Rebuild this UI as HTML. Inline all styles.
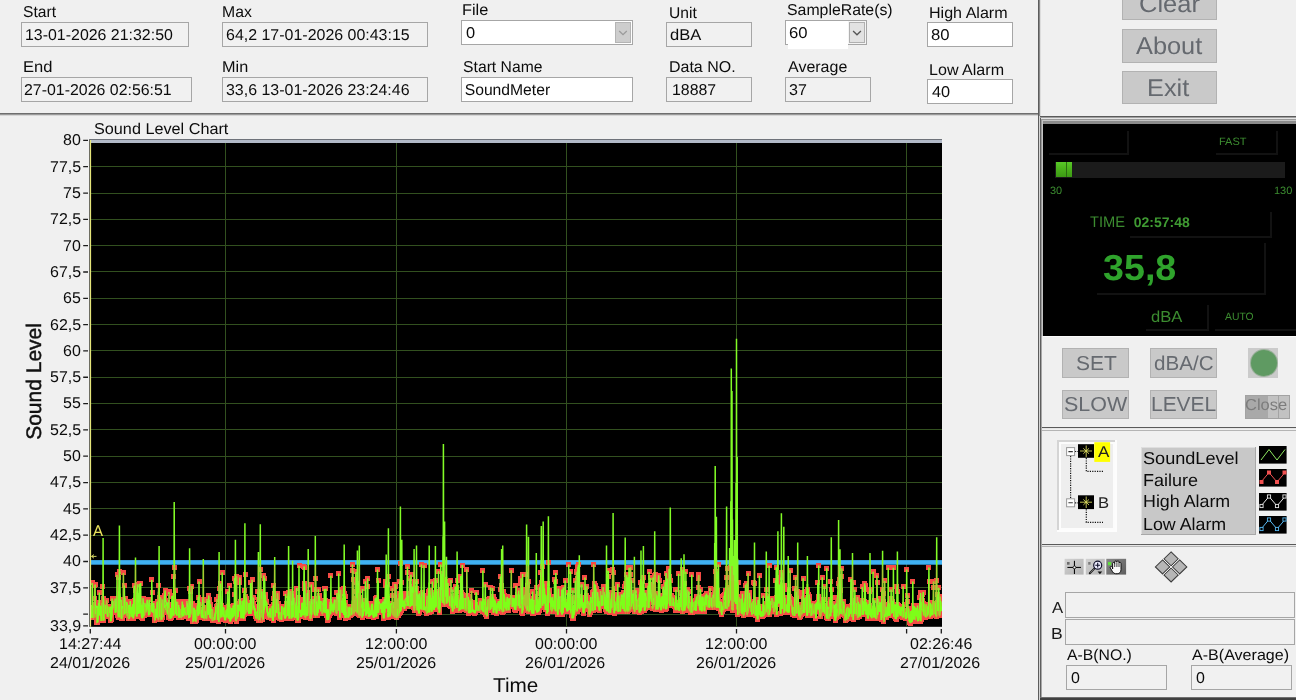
<!DOCTYPE html>
<html lang="en"><head><meta charset="utf-8"><title>SoundMeter</title>
<style>
html,body{margin:0;padding:0;background:#f0f0f0;}
body{width:1296px;height:700px;overflow:hidden;position:relative;font-family:"Liberation Sans", Arial, sans-serif;}
#app{position:absolute;left:0;top:0;width:1296px;height:700px;overflow:hidden;background:#f0f0f0;will-change:transform;}
.a{position:absolute;box-sizing:content-box;}
.t{position:absolute;white-space:pre;line-height:40px;transform-origin:0 0;font-family:"Liberation Sans", Arial, sans-serif;text-rendering:geometricPrecision;}
svg{display:block;overflow:hidden;}
</style></head><body><div id="app">
<span class="t" style="left:23.00px;top:-7px;font-size:15.7px;color:#0c0c0c;transform:scaleX(0.9956);">Start</span>
<div class="a fld" style="left:21px;top:22px;width:166px;height:23px;background:#f1f1f1;border:1px solid #a6a6a6;"></div>
<span class="t" style="left:25.20px;top:16px;font-size:15.7px;color:#0c0c0c;transform:scaleX(1.0149);">13-01-2026 21:32:50</span>
<span class="t" style="left:23.17px;top:48px;font-size:15.7px;color:#0c0c0c;transform:scaleX(1.0557);">End</span>
<div class="a fld" style="left:21px;top:77px;width:169px;height:23px;background:#f1f1f1;border:1px solid #a6a6a6;"></div>
<span class="t" style="left:24.30px;top:71px;font-size:15.7px;color:#0c0c0c;transform:scaleX(1.0140);">27-01-2026 02:56:51</span>
<span class="t" style="left:222.34px;top:-7px;font-size:15.7px;color:#0c0c0c;transform:scaleX(1.0050);">Max</span>
<div class="a fld" style="left:222px;top:22px;width:204px;height:23px;background:#f1f1f1;border:1px solid #a6a6a6;"></div>
<span class="t" style="left:225.60px;top:16px;font-size:15.7px;color:#0c0c0c;transform:scaleX(1.0173);">64,2 17-01-2026 00:43:15</span>
<span class="t" style="left:222.30px;top:48px;font-size:15.7px;color:#0c0c0c;transform:scaleX(1.0348);">Min</span>
<div class="a fld" style="left:222px;top:77px;width:204px;height:23px;background:#f1f1f1;border:1px solid #a6a6a6;"></div>
<span class="t" style="left:225.76px;top:71px;font-size:15.7px;color:#0c0c0c;transform:scaleX(1.0164);">33,6 13-01-2026 23:24:46</span>
<span class="t" style="left:461.59px;top:-9px;font-size:15.7px;color:#0c0c0c;transform:scaleX(1.0423);">File</span>
<div class="a fld" style="left:461px;top:20px;width:170px;height:23px;background:#fff;border:1px solid #a6a6a6;"></div>
<div class="a " style="left:615px;top:22px;width:14px;height:19px;background:#cdcdcd;border:1px solid #b4b4b4;"></div>
<svg class="a" style="left:615px;top:22px" width="16" height="21"><path d="M4.2 9 L8 12.6 L11.8 9" fill="none" stroke="#9a9a9a" stroke-width="1.3"/></svg>
<span class="t" style="left:465.64px;top:14px;font-size:15.7px;color:#0c0c0c;transform:scaleX(1.0483);">0</span>
<span class="t" style="left:463.10px;top:48px;font-size:15.7px;color:#0c0c0c;">Start Name</span>
<div class="a fld" style="left:461px;top:77px;width:170px;height:23px;background:#fff;border:1px solid #a6a6a6;"></div>
<span class="t" style="left:464.69px;top:71px;font-size:15.7px;color:#0c0c0c;">SoundMeter</span>
<span class="t" style="left:668.53px;top:-6px;font-size:15.7px;color:#0c0c0c;transform:scaleX(0.9958);">Unit</span>
<div class="a fld" style="left:666px;top:22px;width:84px;height:23px;background:#f1f1f1;border:1px solid #a6a6a6;"></div>
<span class="t" style="left:669.54px;top:16px;font-size:15.7px;color:#0c0c0c;transform:scaleX(1.0535);">dBA</span>
<span class="t" style="left:669.32px;top:48px;font-size:15.7px;color:#0c0c0c;transform:scaleX(1.0188);">Data NO.</span>
<div class="a fld" style="left:666px;top:77px;width:84px;height:23px;background:#f1f1f1;border:1px solid #a6a6a6;"></div>
<span class="t" style="left:671.81px;top:71px;font-size:15.7px;color:#0c0c0c;transform:scaleX(1.0124);">18887</span>
<span class="t" style="left:786.89px;top:-9px;font-size:15.7px;color:#0c0c0c;transform:scaleX(1.0098);">SampleRate(s)</span>
<div class="a " style="left:785px;top:20px;width:80px;height:23px;background:#f4f4f4;border:1px solid #a6a6a6;"></div>
<div class="a " style="left:786px;top:21px;width:62px;height:23px;background:#fff;"></div>
<div class="a " style="left:788px;top:40px;width:60px;height:8.5px;background:#fff;"></div>
<div class="a " style="left:849px;top:22px;width:14px;height:19px;background:#e2e2e2;border:1px solid #b0b0b0;"></div>
<svg class="a" style="left:849px;top:22px" width="16" height="21"><path d="M4.1 9 L8 12.8 L11.9 9" fill="none" stroke="#555" stroke-width="1.3"/></svg>
<span class="t" style="left:789.27px;top:14px;font-size:15.7px;color:#0c0c0c;transform:scaleX(1.0626);">60</span>
<span class="t" style="left:788.10px;top:48px;font-size:15.7px;color:#0c0c0c;transform:scaleX(1.0198);">Average</span>
<div class="a fld" style="left:785px;top:77px;width:84px;height:23px;background:#f1f1f1;border:1px solid #a6a6a6;"></div>
<span class="t" style="left:789.46px;top:71px;font-size:15.7px;color:#0c0c0c;transform:scaleX(1.0241);">37</span>
<span class="t" style="left:929.31px;top:-6px;font-size:15.7px;color:#0c0c0c;transform:scaleX(1.0245);">High Alarm</span>
<div class="a fld" style="left:927px;top:22px;width:84px;height:23px;background:#fff;border:1px solid #a6a6a6;"></div>
<span class="t" style="left:931.45px;top:16px;font-size:15.7px;color:#0c0c0c;transform:scaleX(1.0636);">80</span>
<span class="t" style="left:928.71px;top:51px;font-size:15.7px;color:#0c0c0c;transform:scaleX(1.0247);">Low Alarm</span>
<div class="a fld" style="left:927px;top:79px;width:84px;height:23px;background:#fff;border:1px solid #a6a6a6;"></div>
<span class="t" style="left:931.87px;top:73px;font-size:15.7px;color:#0c0c0c;transform:scaleX(1.0384);">40</span>
<div class="a" style="left:0px;top:113px;width:1039px;height:1px;background:#6e6e6e"></div>
<div class="a" style="left:0px;top:114px;width:1039px;height:1px;background:#9a9a9a"></div>
<div class="a" style="left:0px;top:115px;width:1039px;height:1px;background:#d6d6d6"></div>
<div class="a" style="left:1038px;top:0px;width:1px;height:700px;background:#5c5c5c"></div>
<div class="a" style="left:1039px;top:0px;width:1px;height:116px;background:#8a8a8a"></div>
<div class="a" style="left:1039px;top:116px;width:1px;height:584px;background:#d4d4d4"></div>
<div class="a" style="left:1040px;top:116px;width:1px;height:584px;background:#5e5e5e"></div>
<div class="a" style="left:1041px;top:116px;width:1px;height:584px;background:#a8a8a8"></div>
<div class="a" style="left:1040px;top:0px;width:1px;height:116px;background:#dcdcdc"></div>
<div class="a btn" style="left:1122px;top:-14px;width:93px;height:32px;background:#c9c9c9;border:1px solid #b2b2b2;"></div>
<span class="t" style="left:1138.63px;top:-15px;font-size:24.3px;color:#65696f;transform:scaleX(1.0483);">Clear</span>
<div class="a btn" style="left:1122px;top:29px;width:93px;height:32px;background:#c9c9c9;border:1px solid #b2b2b2;"></div>
<span class="t" style="left:1136.00px;top:27px;font-size:24.3px;color:#65696f;transform:scaleX(1.0426);">About</span>
<div class="a btn" style="left:1122px;top:71px;width:93px;height:31px;background:#c9c9c9;border:1px solid #b2b2b2;"></div>
<span class="t" style="left:1146.97px;top:69px;font-size:24.3px;color:#65696f;transform:scaleX(1.0418);">Exit</span>
<div class="a" style="left:1040px;top:116px;width:256px;height:1px;background:#5a5a5a"></div>
<div class="a" style="left:1040px;top:117px;width:256px;height:1px;background:#a0a0a0"></div>
<div class="a" style="left:1041px;top:118px;width:255px;height:1px;background:#e4e4e4"></div>
<div class="a " style="left:1041px;top:119px;width:255px;height:217px;background:#9a9a9a;"></div>
<div class="a " style="left:1042px;top:120px;width:254px;height:216px;background:#c4c4c4;"></div>
<div class="a " style="left:1043px;top:121px;width:253px;height:3px;background:#8c8c8c;"></div>
<div class="a " style="left:1043px;top:123.6px;width:253px;height:212.2px;background:#000;"></div>
<div class="a " style="left:1043px;top:335.8px;width:253px;height:1.2px;background:#fbfbfb;"></div>
<span class="t" style="left:1219.32px;top:122px;font-size:10.6px;color:#3c8c30;transform:scaleX(1.0377);">FAST</span>
<div class="a " style="left:1055px;top:161.5px;width:230px;height:16px;background:#1b1b1b;"></div>
<div class="a" style="left:1055.5px;top:162px;width:16px;height:15px;background:linear-gradient(#58c828,#4cb41c 40%,#3c9a14)"></div>
<div class="a " style="left:1065.6px;top:162px;width:1.2px;height:15px;background:#2a6a10;"></div>
<span class="t" style="left:1049.96px;top:171px;font-size:10.6px;color:#3c8c30;transform:scaleX(1.0300);">30</span>
<span class="t" style="left:1273.88px;top:171px;font-size:10.6px;color:#3c8c30;transform:scaleX(1.0374);">130</span>
<span class="t" style="left:1089.51px;top:203px;font-size:15.4px;color:#3c8c30;transform:scaleX(0.9524);">TIME</span>
<span class="t" style="left:1133.74px;top:202px;font-size:14px;color:#3f9a32;font-weight:bold;">02:57:48</span>
<span class="t" style="left:1103.26px;top:248px;font-size:36.2px;color:#2fa32c;font-weight:bold;transform:scaleX(1.0407);">35,8</span>
<span class="t" style="left:1150.64px;top:298px;font-size:15.9px;color:#3c8c30;transform:scaleX(1.0437);">dBA</span>
<span class="t" style="left:1225.20px;top:297px;font-size:10.6px;color:#3c8c30;transform:scaleX(0.9782);">AUTO</span>
<div class="a " style="left:1049px;top:153px;width:78px;height:1.5px;background:#121212;"></div>
<div class="a " style="left:1127px;top:131px;width:1.5px;height:23.5px;background:#121212;"></div>
<div class="a " style="left:1216px;top:153px;width:60px;height:1.5px;background:#121212;"></div>
<div class="a " style="left:1276px;top:131px;width:1.5px;height:23.5px;background:#121212;"></div>
<div class="a " style="left:1130px;top:236px;width:140px;height:1.5px;background:#121212;"></div>
<div class="a " style="left:1270px;top:212px;width:1.5px;height:25.5px;background:#121212;"></div>
<div class="a " style="left:1097px;top:293px;width:167px;height:1.5px;background:#121212;"></div>
<div class="a " style="left:1264px;top:243px;width:1.5px;height:51.5px;background:#121212;"></div>
<div class="a " style="left:1146px;top:329px;width:61px;height:1.5px;background:#121212;"></div>
<div class="a " style="left:1207px;top:305px;width:1.5px;height:25.5px;background:#121212;"></div>
<div class="a " style="left:1215px;top:329px;width:81px;height:1.5px;background:#121212;"></div>
<div class="a " style="left:1296px;top:305px;width:1.5px;height:25.5px;background:#121212;"></div>
<div class="a btn" style="left:1062px;top:348px;width:65px;height:28px;background:#c9c9c9;border:1px solid #b2b2b2;"></div>
<span class="t" style="left:1075.75px;top:344px;font-size:20.2px;color:#666a70;transform:scaleX(1.0401);">SET</span>
<div class="a btn" style="left:1150px;top:348px;width:65px;height:28px;background:#c9c9c9;border:1px solid #b2b2b2;"></div>
<span class="t" style="left:1153.57px;top:344px;font-size:20.2px;color:#666a70;transform:scaleX(1.0218);">dBA/C</span>
<div class="a btn" style="left:1062px;top:390px;width:65px;height:27px;background:#c9c9c9;border:1px solid #b2b2b2;"></div>
<span class="t" style="left:1063.73px;top:385px;font-size:20.2px;color:#666a70;transform:scaleX(1.0636);">SLOW</span>
<div class="a btn" style="left:1150px;top:390px;width:65px;height:27px;background:#c9c9c9;border:1px solid #b2b2b2;"></div>
<span class="t" style="left:1150.63px;top:385px;font-size:20.2px;color:#666a70;transform:scaleX(1.0363);">LEVEL</span>
<div class="a " style="left:1248px;top:348px;width:30px;height:30px;background:#cbcbcb;"></div>
<div class="a" style="left:1250.5px;top:350px;width:26px;height:26px;border-radius:50%;background:#5f9a62;box-shadow:0 0 0 1px #9ab09a"></div>
<div class="a " style="left:1245.2px;top:394.6px;width:44.4px;height:24.8px;background:#c2c2c2;"></div>
<div class="a " style="left:1245.2px;top:394.6px;width:22.6px;height:24.8px;background:#a9a9a9;"></div>
<div class="a " style="left:1277.6px;top:394.6px;width:1px;height:24.8px;background:#a4a4a4;"></div>
<div class="a " style="left:1245.2px;top:394.6px;width:42.4px;height:22.8px;border:1px solid #a2a2a2;"></div>
<span class="t" style="left:1245.37px;top:386px;font-size:15.9px;color:#7c7c7c;transform:scaleX(1.0380);">Close</span>
<div class="a" style="left:1042px;top:427px;width:254px;height:1px;background:#5a5a5a"></div>
<div class="a" style="left:1042px;top:428px;width:254px;height:1px;background:#e6e6e6"></div>
<div class="a" style="left:1042px;top:430px;width:254px;height:1px;background:#b4b4b4"></div>
<div class="a " style="left:1056.5px;top:439.5px;width:60.5px;height:92px;background:#fdfdfd;"></div>
<div class="a " style="left:1056.5px;top:439.5px;width:58.5px;height:90px;background:#d4d4d4;"></div>
<div class="a " style="left:1058.5px;top:441.5px;width:56.5px;height:88px;background:#fcfcfc;"></div>
<div class="a " style="left:1060.5px;top:443.5px;width:52.5px;height:84px;background:#eeeeee;"></div>
<svg class="a" style="left:1056px;top:438px" width="64" height="96" viewBox="1056 438 64 96">
<g fill="none" stroke="#111" stroke-width="1.2" stroke-dasharray="1.2 1.2">
<path d="M1070.6 456 V498.5"/><path d="M1075 451.5 H1078"/><path d="M1075 502.8 H1078"/>
<path d="M1086.3 458 V471.3 H1103"/><path d="M1086.3 509.3 V522.4 H1103"/>
</g>
<rect x="1094.3" y="442.2" width="15.8" height="19.7" fill="#ffff00"/>
<g>
<rect x="1078" y="444.2" width="16" height="13.6" fill="#000"/>
<rect x="1078" y="495.3" width="16" height="13.8" fill="#000"/>
<g stroke="#e0e060" stroke-width="0.85" fill="none">
<path d="M1080 451 H1092 M1086.2 445.5 V457 M1083.3 448.3 L1089 453.8 M1089 448.3 L1083.3 453.8"/>
<path d="M1080 502.2 H1092 M1086.2 496.5 V508 M1083.3 499.4 L1089 505 M1089 499.4 L1083.3 505"/>
</g>
<rect x="1066.6" y="447.6" width="8" height="8" fill="#fff" stroke="#9a9a9a" stroke-width="1"/>
<rect x="1066.6" y="498.8" width="8" height="8" fill="#fff" stroke="#9a9a9a" stroke-width="1"/>
<path d="M1068.4 451.6 H1072.8 M1068.4 502.8 H1072.8" stroke="#333" stroke-width="1.1"/>
</g></svg>
<span class="t" style="left:1098.10px;top:433px;font-size:15.5px;color:#222;transform:scaleX(1.0963);">A</span>
<span class="t" style="left:1097.77px;top:484px;font-size:15.5px;color:#222;transform:scaleX(1.0733);">B</span>
<div class="a " style="left:1141px;top:447px;width:115px;height:87.5px;background:#c8c8c8;"></div>
<div class="a " style="left:1141px;top:447px;width:115px;height:1px;background:#dedede;"></div>
<div class="a " style="left:1141px;top:447px;width:1px;height:87.5px;background:#dedede;"></div>
<div class="a " style="left:1141px;top:533.5px;width:115px;height:1px;background:#a8a8a8;"></div>
<div class="a " style="left:1255px;top:447px;width:1px;height:87.5px;background:#a8a8a8;"></div>
<span class="t" style="left:1143.18px;top:438px;font-size:17.3px;color:#0c0c0c;transform:scaleX(1.0476);">SoundLevel</span>
<span class="t" style="left:1143.16px;top:460px;font-size:17.3px;color:#0c0c0c;transform:scaleX(1.0416);">Failure</span>
<span class="t" style="left:1143.17px;top:481px;font-size:17.3px;color:#0c0c0c;transform:scaleX(1.0319);">High Alarm</span>
<span class="t" style="left:1143.17px;top:504px;font-size:17.3px;color:#0c0c0c;transform:scaleX(1.0309);">Low Alarm</span>
<svg class="a" style="left:1258.5px;top:446.2px" width="28" height="18" viewBox="0 0 28 18"><rect width="27.6" height="17.6" fill="#000"/><path d="M2 14 L10 3.5 L18 14 L26 3.5" fill="none" stroke="#8fe860" stroke-width="1"/></svg>
<svg class="a" style="left:1258.5px;top:469.4px" width="28" height="18" viewBox="0 0 28 18"><rect width="27.6" height="17.6" fill="#000"/><path d="M2.5 12.5 L10 3.5 L18 13 L26 3.5" fill="none" stroke="#f05050" stroke-width="1"/><rect x="0.5" y="11" width="4" height="4" fill="#f05050"/><rect x="8" y="1.5" width="4" height="4" fill="#f05050"/><rect x="16" y="11" width="4" height="4" fill="#f05050"/><rect x="23.5" y="1.5" width="4" height="4" fill="#f05050"/></svg>
<svg class="a" style="left:1258.5px;top:492.5px" width="28" height="18" viewBox="0 0 28 18"><rect width="27.6" height="17.6" fill="#000"/><path d="M2.5 12.5 L10 3.5 L18 13 L26 3.5" fill="none" stroke="#e8e8e8" stroke-width="1"/><rect x="0.8999999999999999" y="11.4" width="3.2" height="3.2" fill="#000" stroke="#e8e8e8" stroke-width="0.9"/><rect x="8.4" y="1.9" width="3.2" height="3.2" fill="#000" stroke="#e8e8e8" stroke-width="0.9"/><rect x="16.4" y="11.4" width="3.2" height="3.2" fill="#000" stroke="#e8e8e8" stroke-width="0.9"/><rect x="23.9" y="1.9" width="3.2" height="3.2" fill="#000" stroke="#e8e8e8" stroke-width="0.9"/></svg>
<svg class="a" style="left:1258.5px;top:515.5px" width="28" height="18" viewBox="0 0 28 18"><rect width="27.6" height="17.6" fill="#000"/><path d="M2.5 12.5 L10 3.5 L18 13 L26 3.5" fill="none" stroke="#58b8f0" stroke-width="1"/><rect x="0.8999999999999999" y="11.4" width="3.2" height="3.2" fill="#000" stroke="#58b8f0" stroke-width="0.9"/><rect x="8.4" y="1.9" width="3.2" height="3.2" fill="#000" stroke="#58b8f0" stroke-width="0.9"/><rect x="16.4" y="11.4" width="3.2" height="3.2" fill="#000" stroke="#58b8f0" stroke-width="0.9"/><rect x="23.9" y="1.9" width="3.2" height="3.2" fill="#000" stroke="#58b8f0" stroke-width="0.9"/></svg>
<div class="a" style="left:1042px;top:544px;width:254px;height:1px;background:#5a5a5a"></div>
<div class="a" style="left:1042px;top:545px;width:254px;height:1px;background:#e6e6e6"></div>
<div class="a" style="left:1042px;top:546px;width:254px;height:1px;background:#b4b4b4"></div>
<svg class="a" style="left:1050px;top:546px" width="150" height="42" viewBox="1050 546 150 42">
<defs>
<linearGradient id="tb1" x1="0" y1="0" x2="1" y2="1"><stop offset="0" stop-color="#d2d2d2"/><stop offset="1" stop-color="#b2b2b2"/></linearGradient>
<linearGradient id="tb3" x1="0" y1="0" x2="1" y2="1"><stop offset="0" stop-color="#868686"/><stop offset="1" stop-color="#5e5e5e"/></linearGradient>
</defs>
<rect x="1064.6" y="558.8" width="19" height="15.8" fill="url(#tb1)"/>
<rect x="1067.4" y="566.9" width="13.6" height="1.1" fill="#0a0a0a"/>
<rect x="1073.9" y="560.8" width="1.1" height="13.2" fill="#0a0a0a"/>
<circle cx="1074.45" cy="567.45" r="1.4" fill="#f4f4f4" stroke="#0a0a0a" stroke-width="0.8"/>
<rect x="1067" y="562" width="2.6" height="2.7" fill="#6c6c6c"/>
<rect x="1085.8" y="558.8" width="19" height="15.8" fill="url(#tb1)"/>
<rect x="1088.2" y="562" width="2.4" height="2.7" fill="#7c7c7c"/>
<path d="M1094.6 568.4 L1089.8 573.2" stroke="#1a1a1a" stroke-width="2" stroke-linecap="round"/>
<path d="M1094.2 568.9 L1090.4 572.7" stroke="#b8b8b8" stroke-width="0.6"/>
<circle cx="1097.7" cy="565.2" r="4" fill="#eeeeff" stroke="#10102a" stroke-width="1.2"/>
<path d="M1095.3 565.2 H1100.1 M1097.7 562.8 V567.6" stroke="#10102a" stroke-width="1.1"/>
<path d="M1097.6 571.4 H1102.2 L1099.9 574.2 Z" fill="#0a0a0a"/>
<rect x="1106.3" y="558.8" width="19.8" height="15.8" fill="url(#tb3)"/>
<path d="M1112.6 569 V563.6 Q1112.7 562.4 1113.7 562.4 Q1114.6 562.4 1114.7 563.6 V562 Q1114.8 560.9 1115.8 560.9 Q1116.8 560.9 1116.9 562 V561.8 Q1117 560.8 1117.9 560.8 Q1118.9 560.8 1119 561.9 V563.2 Q1119.2 562.3 1120.1 562.4 Q1121 562.5 1121 563.6 V569.4 Q1121 573.6 1117.2 573.7 H1115.6 Q1113.6 573.6 1112.6 571.8 L1110.2 567.8 Q1109.9 566.8 1110.8 566.5 Q1111.6 566.3 1112.6 567.6 Z" fill="#fafafa" stroke="#0a0a0a" stroke-width="0.95" stroke-linejoin="round"/>
<path d="M1114.7 563.6 V567 M1116.9 562.2 V567 M1119 563.4 V567" stroke="#0a0a0a" stroke-width="0.8" fill="none"/>
<rect x="1108" y="562" width="3.2" height="3.3" fill="#5ee03c"/>
<g fill="#b6b6b6" stroke="#3c3c3c" stroke-width="1.05" stroke-linejoin="miter">
<path d="M1171.1 551.9 L1178.3 558.9 L1171.1 565.9 L1163.9 558.9 Z"/>
<path d="M1171.1 567.9 L1178.3 574.9 L1171.1 581.9 L1163.9 574.9 Z"/>
<path d="M1162.6 559.9 L1169.8 566.9 L1162.6 573.9 L1155.4 566.9 Z"/>
<path d="M1179.6 559.9 L1186.8 566.9 L1179.6 573.9 L1172.4 566.9 Z"/>
</g>
<path d="M1163.2 559.2 L1179 574.6 M1179 559.2 L1163.2 574.6" stroke="#fafafa" stroke-width="0.9" fill="none"/>
</svg>
<span class="t" style="left:1052.00px;top:589px;font-size:15.9px;color:#1a1a1a;transform:scaleX(1.0498);">A</span>
<div class="a " style="left:1065px;top:592px;width:228px;height:24px;background:#f1f1f1;border:1px solid #a6a6a6;"></div>
<span class="t" style="left:1051.19px;top:615px;font-size:15.9px;color:#1a1a1a;transform:scaleX(1.1050);">B</span>
<div class="a " style="left:1065px;top:619px;width:228px;height:24px;background:#f1f1f1;border:1px solid #a6a6a6;"></div>
<span class="t" style="left:1067.10px;top:636px;font-size:15.4px;color:#0c0c0c;transform:scaleX(1.0245);">A-B(NO.)</span>
<span class="t" style="left:1192.10px;top:636px;font-size:15.4px;color:#0c0c0c;transform:scaleX(1.0444);">A-B(Average)</span>
<div class="a " style="left:1066px;top:665px;width:99px;height:23px;background:#f1f1f1;border:1px solid #a6a6a6;"></div>
<span class="t" style="left:1070.76px;top:659px;font-size:15.7px;color:#0c0c0c;transform:scaleX(1.0200);">0</span>
<div class="a " style="left:1191px;top:665px;width:99px;height:23px;background:#f1f1f1;border:1px solid #a6a6a6;"></div>
<span class="t" style="left:1195.66px;top:659px;font-size:15.7px;color:#0c0c0c;transform:scaleX(1.0200);">0</span>
<div class="a" style="left:1040px;top:697px;width:256px;height:1px;background:#707070"></div>
<div class="a" style="left:1040px;top:698px;width:256px;height:2px;background:#404040"></div>
<span class="t" style="left:93.97px;top:110px;font-size:15.7px;color:#0c0c0c;transform:scaleX(1.0340);">Sound Level Chart</span>
<svg class="a" style="left:0;top:118px" width="1036" height="582" viewBox="0 118 1036 582">
<rect x="89.5" y="139.3" width="852.5" height="487.49999999999994" fill="#000"/>
<path d="M89.5 166.5H942M89.5 193.5H942M89.5 219.5H942M89.5 245.5H942M89.5 271.5H942M89.5 298.5H942M89.5 324.5H942M89.5 350.5H942M89.5 377.5H942M89.5 403.5H942M89.5 429.5H942M89.5 456.5H942M89.5 482.5H942M89.5 508.5H942M89.5 535.5H942M89.5 561.5H942M89.5 587.5H942M89.5 614.5H942M225.5 139.3V626.8M396.5 139.3V626.8M566.5 139.3V626.8M736.5 139.3V626.8M906.5 139.3V626.8" stroke="#32501f" stroke-width="1" fill="none"/>
<rect x="90.5" y="560.1" width="851.5" height="4.6" fill="#3fb1f2"/>
<clipPath id="pc"><rect x="90.5" y="139.3" width="851.5" height="487.49999999999994"/></clipPath><g clip-path="url(#pc)"><path d="M88 613h5v5h-5zM89 610h5v5h-5zM89 613h5v5h-5zM89 615h5v5h-5zM89 614h5v5h-5zM90 580h5v5h-5zM90 614h5v5h-5zM90 610h5v5h-5zM90 608h5v5h-5zM91 613h5v5h-5zM91 615h5v5h-5zM91 614h5v5h-5zM91 605h5v5h-5zM92 611h5v5h-5zM92 603h5v5h-5zM92 583h5v5h-5zM92 596h5v5h-5zM93 582h5v5h-5zM93 611h5v5h-5zM93 602h5v5h-5zM93 610h5v5h-5zM94 605h5v5h-5zM94 615h5v5h-5zM94 610h5v5h-5zM94 620h5v5h-5zM95 603h5v5h-5zM95 620h5v5h-5zM95 619h5v5h-5zM95 615h5v5h-5zM96 613h5v5h-5zM96 611h5v5h-5zM96 601h5v5h-5zM96 600h5v5h-5zM97 605h5v5h-5zM97 590h5v5h-5zM97 608h5v5h-5zM97 612h5v5h-5zM98 613h5v5h-5zM98 603h5v5h-5zM98 609h5v5h-5zM98 608h5v5h-5zM98 611h5v5h-5zM99 613h5v5h-5zM99 618h5v5h-5zM99 615h5v5h-5zM99 617h5v5h-5zM100 601h5v5h-5zM100 617h5v5h-5zM100 584h5v5h-5zM100 615h5v5h-5zM101 616h5v5h-5zM101 596h5v5h-5zM101 618h5v5h-5zM102 601h5v5h-5zM102 612h5v5h-5zM102 607h5v5h-5zM102 605h5v5h-5zM102 604h5v5h-5zM103 608h5v5h-5zM103 611h5v5h-5zM103 605h5v5h-5zM103 602h5v5h-5zM104 611h5v5h-5zM104 608h5v5h-5zM104 598h5v5h-5zM104 607h5v5h-5zM105 609h5v5h-5zM105 604h5v5h-5zM105 614h5v5h-5zM105 611h5v5h-5zM106 612h5v5h-5zM106 614h5v5h-5zM106 604h5v5h-5zM106 607h5v5h-5zM106 610h5v5h-5zM107 605h5v5h-5zM107 608h5v5h-5zM107 606h5v5h-5zM108 611h5v5h-5zM108 604h5v5h-5zM108 618h5v5h-5zM109 617h5v5h-5zM109 615h5v5h-5zM109 614h5v5h-5zM109 612h5v5h-5zM110 596h5v5h-5zM110 606h5v5h-5zM110 604h5v5h-5zM111 605h5v5h-5zM111 600h5v5h-5zM111 601h5v5h-5zM111 599h5v5h-5zM112 598h5v5h-5zM112 604h5v5h-5zM112 600h5v5h-5zM112 603h5v5h-5zM113 596h5v5h-5zM113 610h5v5h-5zM113 605h5v5h-5zM114 604h5v5h-5zM114 603h5v5h-5zM114 606h5v5h-5zM115 572h5v5h-5zM115 604h5v5h-5zM115 601h5v5h-5zM115 613h5v5h-5zM116 597h5v5h-5zM116 596h5v5h-5zM116 615h5v5h-5zM116 575h5v5h-5zM117 613h5v5h-5zM117 604h5v5h-5zM117 569h5v5h-5zM118 615h5v5h-5zM118 600h5v5h-5zM118 604h5v5h-5zM119 597h5v5h-5zM119 608h5v5h-5zM119 616h5v5h-5zM119 603h5v5h-5zM119 611h5v5h-5zM120 616h5v5h-5zM120 610h5v5h-5zM120 613h5v5h-5zM120 607h5v5h-5zM121 613h5v5h-5zM121 570h5v5h-5zM121 610h5v5h-5zM121 611h5v5h-5zM122 607h5v5h-5zM122 583h5v5h-5zM122 612h5v5h-5zM122 608h5v5h-5zM123 600h5v5h-5zM123 596h5v5h-5zM123 607h5v5h-5zM123 608h5v5h-5zM124 603h5v5h-5zM124 607h5v5h-5zM124 610h5v5h-5zM124 599h5v5h-5zM125 603h5v5h-5zM125 613h5v5h-5zM125 602h5v5h-5zM125 608h5v5h-5zM126 610h5v5h-5zM126 615h5v5h-5zM126 616h5v5h-5zM127 612h5v5h-5zM127 602h5v5h-5zM127 615h5v5h-5zM127 604h5v5h-5zM128 608h5v5h-5zM128 599h5v5h-5zM128 605h5v5h-5zM128 611h5v5h-5zM129 604h5v5h-5zM129 607h5v5h-5zM129 613h5v5h-5zM129 614h5v5h-5zM130 610h5v5h-5zM130 609h5v5h-5zM130 611h5v5h-5zM130 603h5v5h-5zM131 602h5v5h-5zM131 616h5v5h-5zM131 613h5v5h-5zM131 608h5v5h-5zM132 583h5v5h-5zM132 598h5v5h-5zM132 604h5v5h-5zM132 612h5v5h-5zM132 599h5v5h-5zM133 611h5v5h-5zM133 606h5v5h-5zM133 588h5v5h-5zM134 610h5v5h-5zM134 593h5v5h-5zM134 614h5v5h-5zM134 602h5v5h-5zM135 600h5v5h-5zM135 604h5v5h-5zM135 602h5v5h-5zM135 582h5v5h-5zM136 594h5v5h-5zM136 606h5v5h-5zM136 611h5v5h-5zM136 593h5v5h-5zM137 608h5v5h-5zM137 609h5v5h-5zM137 605h5v5h-5zM137 581h5v5h-5zM137 598h5v5h-5zM138 610h5v5h-5zM138 581h5v5h-5zM138 607h5v5h-5zM139 609h5v5h-5zM139 603h5v5h-5zM139 613h5v5h-5zM139 615h5v5h-5zM140 615h5v5h-5zM140 616h5v5h-5zM141 596h5v5h-5zM141 601h5v5h-5zM141 606h5v5h-5zM141 603h5v5h-5zM141 610h5v5h-5zM142 613h5v5h-5zM142 600h5v5h-5zM142 610h5v5h-5zM142 601h5v5h-5zM143 604h5v5h-5zM143 606h5v5h-5zM143 610h5v5h-5zM143 608h5v5h-5zM144 608h5v5h-5zM144 604h5v5h-5zM144 602h5v5h-5zM145 599h5v5h-5zM145 597h5v5h-5zM145 598h5v5h-5zM145 603h5v5h-5zM145 606h5v5h-5zM146 607h5v5h-5zM146 609h5v5h-5zM146 612h5v5h-5zM147 605h5v5h-5zM147 597h5v5h-5zM147 612h5v5h-5zM147 608h5v5h-5zM148 603h5v5h-5zM148 607h5v5h-5zM148 608h5v5h-5zM148 606h5v5h-5zM149 607h5v5h-5zM149 606h5v5h-5zM149 577h5v5h-5zM150 590h5v5h-5zM150 609h5v5h-5zM150 610h5v5h-5zM150 608h5v5h-5zM151 606h5v5h-5zM151 605h5v5h-5zM151 601h5v5h-5zM151 610h5v5h-5zM152 604h5v5h-5zM152 614h5v5h-5zM152 618h5v5h-5zM153 616h5v5h-5zM153 606h5v5h-5zM153 611h5v5h-5zM153 610h5v5h-5zM154 608h5v5h-5zM154 614h5v5h-5zM154 613h5v5h-5zM154 615h5v5h-5zM155 602h5v5h-5zM155 599h5v5h-5zM155 600h5v5h-5zM156 606h5v5h-5zM156 617h5v5h-5zM156 583h5v5h-5zM156 612h5v5h-5zM157 611h5v5h-5zM157 595h5v5h-5zM157 614h5v5h-5zM158 596h5v5h-5zM158 595h5v5h-5zM158 597h5v5h-5zM158 617h5v5h-5zM158 601h5v5h-5zM159 603h5v5h-5zM159 612h5v5h-5zM159 606h5v5h-5zM159 617h5v5h-5zM160 608h5v5h-5zM160 597h5v5h-5zM160 610h5v5h-5zM160 615h5v5h-5zM161 610h5v5h-5zM161 604h5v5h-5zM161 602h5v5h-5zM162 605h5v5h-5zM162 596h5v5h-5zM162 593h5v5h-5zM162 598h5v5h-5zM163 588h5v5h-5zM163 591h5v5h-5zM163 599h5v5h-5zM163 598h5v5h-5zM164 607h5v5h-5zM164 603h5v5h-5zM164 610h5v5h-5zM164 606h5v5h-5zM165 602h5v5h-5zM165 600h5v5h-5zM165 604h5v5h-5zM165 606h5v5h-5zM166 612h5v5h-5zM166 610h5v5h-5zM166 606h5v5h-5zM166 615h5v5h-5zM167 589h5v5h-5zM167 613h5v5h-5zM167 612h5v5h-5zM167 611h5v5h-5zM168 609h5v5h-5zM168 616h5v5h-5zM168 605h5v5h-5zM168 613h5v5h-5zM169 611h5v5h-5zM169 613h5v5h-5zM169 615h5v5h-5zM169 594h5v5h-5zM170 612h5v5h-5zM170 608h5v5h-5zM170 607h5v5h-5zM170 602h5v5h-5zM171 610h5v5h-5zM171 593h5v5h-5zM171 613h5v5h-5zM171 574h5v5h-5zM171 612h5v5h-5zM172 609h5v5h-5zM172 565h5v5h-5zM172 612h5v5h-5zM173 588h5v5h-5zM173 602h5v5h-5zM173 612h5v5h-5zM173 599h5v5h-5zM174 601h5v5h-5zM174 611h5v5h-5zM174 604h5v5h-5zM174 613h5v5h-5zM175 609h5v5h-5zM175 608h5v5h-5zM175 599h5v5h-5zM175 606h5v5h-5zM176 605h5v5h-5zM176 610h5v5h-5zM176 606h5v5h-5zM176 602h5v5h-5zM176 615h5v5h-5zM177 605h5v5h-5zM177 610h5v5h-5zM177 609h5v5h-5zM177 607h5v5h-5zM178 607h5v5h-5zM178 611h5v5h-5zM178 609h5v5h-5zM178 614h5v5h-5zM179 615h5v5h-5zM179 614h5v5h-5zM179 612h5v5h-5zM180 612h5v5h-5zM180 599h5v5h-5zM180 614h5v5h-5zM180 602h5v5h-5zM181 614h5v5h-5zM181 610h5v5h-5zM181 605h5v5h-5zM181 606h5v5h-5zM182 613h5v5h-5zM182 610h5v5h-5zM182 612h5v5h-5zM183 608h5v5h-5zM183 605h5v5h-5zM184 610h5v5h-5zM184 613h5v5h-5zM184 611h5v5h-5zM184 599h5v5h-5zM184 600h5v5h-5zM185 601h5v5h-5zM185 610h5v5h-5zM185 608h5v5h-5zM185 607h5v5h-5zM186 613h5v5h-5zM186 607h5v5h-5zM186 608h5v5h-5zM186 616h5v5h-5zM187 586h5v5h-5zM187 612h5v5h-5zM187 615h5v5h-5zM188 589h5v5h-5zM188 609h5v5h-5zM188 606h5v5h-5zM189 604h5v5h-5zM189 607h5v5h-5zM189 609h5v5h-5zM189 611h5v5h-5zM189 584h5v5h-5zM190 601h5v5h-5zM190 604h5v5h-5zM190 608h5v5h-5zM190 619h5v5h-5zM191 618h5v5h-5zM191 613h5v5h-5zM191 611h5v5h-5zM192 605h5v5h-5zM192 612h5v5h-5zM192 607h5v5h-5zM192 608h5v5h-5zM193 614h5v5h-5zM193 616h5v5h-5zM193 619h5v5h-5zM193 618h5v5h-5zM194 618h5v5h-5zM194 615h5v5h-5zM194 608h5v5h-5zM194 611h5v5h-5zM195 610h5v5h-5zM195 605h5v5h-5zM195 603h5v5h-5zM195 606h5v5h-5zM196 595h5v5h-5zM196 613h5v5h-5zM196 612h5v5h-5zM196 607h5v5h-5zM197 579h5v5h-5zM197 611h5v5h-5zM197 609h5v5h-5zM197 607h5v5h-5zM197 601h5v5h-5zM198 607h5v5h-5zM198 599h5v5h-5zM198 612h5v5h-5zM198 608h5v5h-5zM199 608h5v5h-5zM199 610h5v5h-5zM199 615h5v5h-5zM199 614h5v5h-5zM200 615h5v5h-5zM200 609h5v5h-5zM200 614h5v5h-5zM200 597h5v5h-5zM201 611h5v5h-5zM201 608h5v5h-5zM201 598h5v5h-5zM202 616h5v5h-5zM202 605h5v5h-5zM202 613h5v5h-5zM202 612h5v5h-5zM202 610h5v5h-5zM203 610h5v5h-5zM203 609h5v5h-5zM204 615h5v5h-5zM204 616h5v5h-5zM204 613h5v5h-5zM204 597h5v5h-5zM205 610h5v5h-5zM205 609h5v5h-5zM205 608h5v5h-5zM206 598h5v5h-5zM206 609h5v5h-5zM206 612h5v5h-5zM206 593h5v5h-5zM206 604h5v5h-5zM207 607h5v5h-5zM207 597h5v5h-5zM207 615h5v5h-5zM208 609h5v5h-5zM208 602h5v5h-5zM208 605h5v5h-5zM209 616h5v5h-5zM209 613h5v5h-5zM209 608h5v5h-5zM210 613h5v5h-5zM210 607h5v5h-5zM210 618h5v5h-5zM210 616h5v5h-5zM210 617h5v5h-5zM211 615h5v5h-5zM211 617h5v5h-5zM211 616h5v5h-5zM212 615h5v5h-5zM212 617h5v5h-5zM212 614h5v5h-5zM213 612h5v5h-5zM213 611h5v5h-5zM213 610h5v5h-5zM213 608h5v5h-5zM214 604h5v5h-5zM214 610h5v5h-5zM214 609h5v5h-5zM214 597h5v5h-5zM215 607h5v5h-5zM215 609h5v5h-5zM215 618h5v5h-5zM215 603h5v5h-5zM216 611h5v5h-5zM216 617h5v5h-5zM216 594h5v5h-5zM216 619h5v5h-5zM217 617h5v5h-5zM217 586h5v5h-5zM217 615h5v5h-5zM218 605h5v5h-5zM218 581h5v5h-5zM218 607h5v5h-5zM218 602h5v5h-5zM219 603h5v5h-5zM219 604h5v5h-5zM219 609h5v5h-5zM219 615h5v5h-5zM219 605h5v5h-5zM220 570h5v5h-5zM220 612h5v5h-5zM220 606h5v5h-5zM220 608h5v5h-5zM221 608h5v5h-5zM221 605h5v5h-5zM221 606h5v5h-5zM221 613h5v5h-5zM222 615h5v5h-5zM222 613h5v5h-5zM222 617h5v5h-5zM223 617h5v5h-5zM223 618h5v5h-5zM223 614h5v5h-5zM223 613h5v5h-5zM223 615h5v5h-5zM224 608h5v5h-5zM224 612h5v5h-5zM224 609h5v5h-5zM224 607h5v5h-5zM225 609h5v5h-5zM225 614h5v5h-5zM225 589h5v5h-5zM225 611h5v5h-5zM226 604h5v5h-5zM226 616h5v5h-5zM226 613h5v5h-5zM227 612h5v5h-5zM227 583h5v5h-5zM227 605h5v5h-5zM227 604h5v5h-5zM228 610h5v5h-5zM228 619h5v5h-5zM228 618h5v5h-5zM228 615h5v5h-5zM228 614h5v5h-5zM229 616h5v5h-5zM229 615h5v5h-5zM229 606h5v5h-5zM230 606h5v5h-5zM230 607h5v5h-5zM230 611h5v5h-5zM231 615h5v5h-5zM231 603h5v5h-5zM231 604h5v5h-5zM232 609h5v5h-5zM232 610h5v5h-5zM232 576h5v5h-5zM232 611h5v5h-5zM232 592h5v5h-5zM233 614h5v5h-5zM233 617h5v5h-5zM233 579h5v5h-5zM234 619h5v5h-5zM234 604h5v5h-5zM234 574h5v5h-5zM234 616h5v5h-5zM235 612h5v5h-5zM235 607h5v5h-5zM235 606h5v5h-5zM235 602h5v5h-5zM236 614h5v5h-5zM236 610h5v5h-5zM236 604h5v5h-5zM236 605h5v5h-5zM236 602h5v5h-5zM237 606h5v5h-5zM237 601h5v5h-5zM237 580h5v5h-5zM237 575h5v5h-5zM238 608h5v5h-5zM238 604h5v5h-5zM238 609h5v5h-5zM238 599h5v5h-5zM239 616h5v5h-5zM239 611h5v5h-5zM239 610h5v5h-5zM239 615h5v5h-5zM240 606h5v5h-5zM240 611h5v5h-5zM240 602h5v5h-5zM241 600h5v5h-5zM241 598h5v5h-5zM241 616h5v5h-5zM241 603h5v5h-5zM242 611h5v5h-5zM242 588h5v5h-5zM242 612h5v5h-5zM243 607h5v5h-5zM243 572h5v5h-5zM243 611h5v5h-5zM243 594h5v5h-5zM244 608h5v5h-5zM244 596h5v5h-5zM244 602h5v5h-5zM244 600h5v5h-5zM245 601h5v5h-5zM245 605h5v5h-5zM245 600h5v5h-5zM245 607h5v5h-5zM245 608h5v5h-5zM246 608h5v5h-5zM246 609h5v5h-5zM246 610h5v5h-5zM246 611h5v5h-5zM247 608h5v5h-5zM247 601h5v5h-5zM247 604h5v5h-5zM248 611h5v5h-5zM248 603h5v5h-5zM248 580h5v5h-5zM249 609h5v5h-5zM249 608h5v5h-5zM249 607h5v5h-5zM249 606h5v5h-5zM250 577h5v5h-5zM250 605h5v5h-5zM250 599h5v5h-5zM250 598h5v5h-5zM251 601h5v5h-5zM251 595h5v5h-5zM251 605h5v5h-5zM252 604h5v5h-5zM252 607h5v5h-5zM252 608h5v5h-5zM252 606h5v5h-5zM253 612h5v5h-5zM253 613h5v5h-5zM253 614h5v5h-5zM253 609h5v5h-5zM254 616h5v5h-5zM254 611h5v5h-5zM254 614h5v5h-5zM254 613h5v5h-5zM255 613h5v5h-5zM255 609h5v5h-5zM255 616h5v5h-5zM255 589h5v5h-5zM256 614h5v5h-5zM256 618h5v5h-5zM256 597h5v5h-5zM257 608h5v5h-5zM257 603h5v5h-5zM257 589h5v5h-5zM258 618h5v5h-5zM258 615h5v5h-5zM258 567h5v5h-5zM258 606h5v5h-5zM259 596h5v5h-5zM259 601h5v5h-5zM259 602h5v5h-5zM259 605h5v5h-5zM260 610h5v5h-5zM260 589h5v5h-5zM260 614h5v5h-5zM260 617h5v5h-5zM261 614h5v5h-5zM261 612h5v5h-5zM261 610h5v5h-5zM261 573h5v5h-5zM262 607h5v5h-5zM262 606h5v5h-5zM262 605h5v5h-5zM262 576h5v5h-5zM262 597h5v5h-5zM263 592h5v5h-5zM263 597h5v5h-5zM263 598h5v5h-5zM263 600h5v5h-5zM264 600h5v5h-5zM264 599h5v5h-5zM264 606h5v5h-5zM265 607h5v5h-5zM265 609h5v5h-5zM265 610h5v5h-5zM265 612h5v5h-5zM266 613h5v5h-5zM266 614h5v5h-5zM266 615h5v5h-5zM267 612h5v5h-5zM267 610h5v5h-5zM267 606h5v5h-5zM268 612h5v5h-5zM268 607h5v5h-5zM268 608h5v5h-5zM268 615h5v5h-5zM269 611h5v5h-5zM269 616h5v5h-5zM269 605h5v5h-5zM269 604h5v5h-5zM270 611h5v5h-5zM270 606h5v5h-5zM270 605h5v5h-5zM270 604h5v5h-5zM271 618h5v5h-5zM271 602h5v5h-5zM271 583h5v5h-5zM271 596h5v5h-5zM271 610h5v5h-5zM272 591h5v5h-5zM272 606h5v5h-5zM272 614h5v5h-5zM273 599h5v5h-5zM273 606h5v5h-5zM273 597h5v5h-5zM274 599h5v5h-5zM274 610h5v5h-5zM274 603h5v5h-5zM275 603h5v5h-5zM275 609h5v5h-5zM275 591h5v5h-5zM275 595h5v5h-5zM275 610h5v5h-5zM276 611h5v5h-5zM276 601h5v5h-5zM276 615h5v5h-5zM276 610h5v5h-5zM277 612h5v5h-5zM277 616h5v5h-5zM277 614h5v5h-5zM278 610h5v5h-5zM278 614h5v5h-5zM278 613h5v5h-5zM279 615h5v5h-5zM279 612h5v5h-5zM279 617h5v5h-5zM279 604h5v5h-5zM280 612h5v5h-5zM280 608h5v5h-5zM280 610h5v5h-5zM280 607h5v5h-5zM281 608h5v5h-5zM281 612h5v5h-5zM281 610h5v5h-5zM282 605h5v5h-5zM282 609h5v5h-5zM282 614h5v5h-5zM282 616h5v5h-5zM283 615h5v5h-5zM283 616h5v5h-5zM283 591h5v5h-5zM284 611h5v5h-5zM284 606h5v5h-5zM284 608h5v5h-5zM284 601h5v5h-5zM285 610h5v5h-5zM285 593h5v5h-5zM285 604h5v5h-5zM285 613h5v5h-5zM286 590h5v5h-5zM286 610h5v5h-5zM286 613h5v5h-5zM287 594h5v5h-5zM287 616h5v5h-5zM287 604h5v5h-5zM287 611h5v5h-5zM288 614h5v5h-5zM288 608h5v5h-5zM288 589h5v5h-5zM288 598h5v5h-5zM289 599h5v5h-5zM289 616h5v5h-5zM289 607h5v5h-5zM289 615h5v5h-5zM290 599h5v5h-5zM290 615h5v5h-5zM290 614h5v5h-5zM291 591h5v5h-5zM291 608h5v5h-5zM291 601h5v5h-5zM291 605h5v5h-5zM292 611h5v5h-5zM292 595h5v5h-5zM292 615h5v5h-5zM293 613h5v5h-5zM293 615h5v5h-5zM293 612h5v5h-5zM293 604h5v5h-5zM294 600h5v5h-5zM294 605h5v5h-5zM294 586h5v5h-5zM294 612h5v5h-5zM295 613h5v5h-5zM295 617h5v5h-5zM295 618h5v5h-5zM296 618h5v5h-5zM296 614h5v5h-5zM296 616h5v5h-5zM296 595h5v5h-5zM297 563h5v5h-5zM297 610h5v5h-5zM297 607h5v5h-5zM297 608h5v5h-5zM298 609h5v5h-5zM298 610h5v5h-5zM299 614h5v5h-5zM299 612h5v5h-5zM299 608h5v5h-5zM299 610h5v5h-5zM300 600h5v5h-5zM300 612h5v5h-5zM300 605h5v5h-5zM300 613h5v5h-5zM301 612h5v5h-5zM301 611h5v5h-5zM301 602h5v5h-5zM301 597h5v5h-5zM301 564h5v5h-5zM302 565h5v5h-5zM302 613h5v5h-5zM302 581h5v5h-5zM302 586h5v5h-5zM303 612h5v5h-5zM303 615h5v5h-5zM303 613h5v5h-5zM304 613h5v5h-5zM304 612h5v5h-5zM304 611h5v5h-5zM304 610h5v5h-5zM305 600h5v5h-5zM305 590h5v5h-5zM305 613h5v5h-5zM305 595h5v5h-5zM305 607h5v5h-5zM306 608h5v5h-5zM306 599h5v5h-5zM306 610h5v5h-5zM307 604h5v5h-5zM307 599h5v5h-5zM307 607h5v5h-5zM307 613h5v5h-5zM308 611h5v5h-5zM308 616h5v5h-5zM308 613h5v5h-5zM309 612h5v5h-5zM309 582h5v5h-5zM309 608h5v5h-5zM310 609h5v5h-5zM310 608h5v5h-5zM310 601h5v5h-5zM310 606h5v5h-5zM311 596h5v5h-5zM311 607h5v5h-5zM311 599h5v5h-5zM311 609h5v5h-5zM312 609h5v5h-5zM312 602h5v5h-5zM312 612h5v5h-5zM312 587h5v5h-5zM313 613h5v5h-5zM313 608h5v5h-5zM313 576h5v5h-5zM314 610h5v5h-5zM314 599h5v5h-5zM314 608h5v5h-5zM314 604h5v5h-5zM315 613h5v5h-5zM315 603h5v5h-5zM315 607h5v5h-5zM315 610h5v5h-5zM316 601h5v5h-5zM316 587h5v5h-5zM316 598h5v5h-5zM316 596h5v5h-5zM317 602h5v5h-5zM317 593h5v5h-5zM317 601h5v5h-5zM317 607h5v5h-5zM318 603h5v5h-5zM318 606h5v5h-5zM318 605h5v5h-5zM318 598h5v5h-5zM318 607h5v5h-5zM319 609h5v5h-5zM319 600h5v5h-5zM319 607h5v5h-5zM319 603h5v5h-5zM320 602h5v5h-5zM320 611h5v5h-5zM320 604h5v5h-5zM320 603h5v5h-5zM321 602h5v5h-5zM321 598h5v5h-5zM321 600h5v5h-5zM321 609h5v5h-5zM322 609h5v5h-5zM322 586h5v5h-5zM322 610h5v5h-5zM323 608h5v5h-5zM323 609h5v5h-5zM323 610h5v5h-5zM323 598h5v5h-5zM323 586h5v5h-5zM324 611h5v5h-5zM324 609h5v5h-5zM324 613h5v5h-5zM325 615h5v5h-5zM325 618h5v5h-5zM325 607h5v5h-5zM325 617h5v5h-5zM326 608h5v5h-5zM326 617h5v5h-5zM326 614h5v5h-5zM327 611h5v5h-5zM327 609h5v5h-5zM327 613h5v5h-5zM327 603h5v5h-5zM327 605h5v5h-5zM328 599h5v5h-5zM328 611h5v5h-5zM328 602h5v5h-5zM328 573h5v5h-5zM329 608h5v5h-5zM329 600h5v5h-5zM329 601h5v5h-5zM329 602h5v5h-5zM330 607h5v5h-5zM330 604h5v5h-5zM330 602h5v5h-5zM330 605h5v5h-5zM331 606h5v5h-5zM331 610h5v5h-5zM331 607h5v5h-5zM332 600h5v5h-5zM332 597h5v5h-5zM332 604h5v5h-5zM332 598h5v5h-5zM333 598h5v5h-5zM333 603h5v5h-5zM333 605h5v5h-5zM333 601h5v5h-5zM334 605h5v5h-5zM334 611h5v5h-5zM334 590h5v5h-5zM335 599h5v5h-5zM335 608h5v5h-5zM335 602h5v5h-5zM335 597h5v5h-5zM336 606h5v5h-5zM336 594h5v5h-5zM336 608h5v5h-5zM336 571h5v5h-5zM336 604h5v5h-5zM337 597h5v5h-5zM337 602h5v5h-5zM337 592h5v5h-5zM337 615h5v5h-5zM338 613h5v5h-5zM338 604h5v5h-5zM338 587h5v5h-5zM338 601h5v5h-5zM339 607h5v5h-5zM339 601h5v5h-5zM339 598h5v5h-5zM339 605h5v5h-5zM340 603h5v5h-5zM340 610h5v5h-5zM340 608h5v5h-5zM340 599h5v5h-5zM341 591h5v5h-5zM341 603h5v5h-5zM341 586h5v5h-5zM341 612h5v5h-5zM342 611h5v5h-5zM342 591h5v5h-5zM342 613h5v5h-5zM343 594h5v5h-5zM343 616h5v5h-5zM343 600h5v5h-5zM343 615h5v5h-5zM344 605h5v5h-5zM344 608h5v5h-5zM344 604h5v5h-5zM345 609h5v5h-5zM345 605h5v5h-5zM345 611h5v5h-5zM346 615h5v5h-5zM346 614h5v5h-5zM346 613h5v5h-5zM347 612h5v5h-5zM347 606h5v5h-5zM347 604h5v5h-5zM347 608h5v5h-5zM348 608h5v5h-5zM348 613h5v5h-5zM348 606h5v5h-5zM348 609h5v5h-5zM349 612h5v5h-5zM349 611h5v5h-5zM349 608h5v5h-5zM349 610h5v5h-5zM350 611h5v5h-5zM350 562h5v5h-5zM350 568h5v5h-5zM351 577h5v5h-5zM351 610h5v5h-5zM351 608h5v5h-5zM351 609h5v5h-5zM352 611h5v5h-5zM352 603h5v5h-5zM352 598h5v5h-5zM352 609h5v5h-5zM353 604h5v5h-5zM353 580h5v5h-5zM353 605h5v5h-5zM353 569h5v5h-5zM353 589h5v5h-5zM354 596h5v5h-5zM354 598h5v5h-5zM354 610h5v5h-5zM354 597h5v5h-5zM355 607h5v5h-5zM355 610h5v5h-5zM355 581h5v5h-5zM356 607h5v5h-5zM356 598h5v5h-5zM356 612h5v5h-5zM356 590h5v5h-5zM357 602h5v5h-5zM357 606h5v5h-5zM357 588h5v5h-5zM357 613h5v5h-5zM358 595h5v5h-5zM358 597h5v5h-5zM358 611h5v5h-5zM358 602h5v5h-5zM359 611h5v5h-5zM359 605h5v5h-5zM359 612h5v5h-5zM360 615h5v5h-5zM360 613h5v5h-5zM360 586h5v5h-5zM361 613h5v5h-5zM361 609h5v5h-5zM362 601h5v5h-5zM362 600h5v5h-5zM362 603h5v5h-5zM362 605h5v5h-5zM363 598h5v5h-5zM363 579h5v5h-5zM363 612h5v5h-5zM363 613h5v5h-5zM364 610h5v5h-5zM364 612h5v5h-5zM364 605h5v5h-5zM365 601h5v5h-5zM365 584h5v5h-5zM365 608h5v5h-5zM365 576h5v5h-5zM366 611h5v5h-5zM366 601h5v5h-5zM366 604h5v5h-5zM366 614h5v5h-5zM366 606h5v5h-5zM367 606h5v5h-5zM367 610h5v5h-5zM367 611h5v5h-5zM367 613h5v5h-5zM368 612h5v5h-5zM368 611h5v5h-5zM368 608h5v5h-5zM369 612h5v5h-5zM369 603h5v5h-5zM369 602h5v5h-5zM370 607h5v5h-5zM370 601h5v5h-5zM370 608h5v5h-5zM370 612h5v5h-5zM371 614h5v5h-5zM371 611h5v5h-5zM371 615h5v5h-5zM371 613h5v5h-5zM372 610h5v5h-5zM372 614h5v5h-5zM372 611h5v5h-5zM372 608h5v5h-5zM373 596h5v5h-5zM373 610h5v5h-5zM373 614h5v5h-5zM373 613h5v5h-5zM374 595h5v5h-5zM374 614h5v5h-5zM374 613h5v5h-5zM374 605h5v5h-5zM375 608h5v5h-5zM375 603h5v5h-5zM375 567h5v5h-5zM375 610h5v5h-5zM375 609h5v5h-5zM376 578h5v5h-5zM376 610h5v5h-5zM376 603h5v5h-5zM376 599h5v5h-5zM377 605h5v5h-5zM377 607h5v5h-5zM377 606h5v5h-5zM377 602h5v5h-5zM378 603h5v5h-5zM378 602h5v5h-5zM378 601h5v5h-5zM378 604h5v5h-5zM379 606h5v5h-5zM379 604h5v5h-5zM379 610h5v5h-5zM379 609h5v5h-5zM380 604h5v5h-5zM380 601h5v5h-5zM380 606h5v5h-5zM380 599h5v5h-5zM381 601h5v5h-5zM381 612h5v5h-5zM381 616h5v5h-5zM381 615h5v5h-5zM382 614h5v5h-5zM382 597h5v5h-5zM382 610h5v5h-5zM382 605h5v5h-5zM383 605h5v5h-5zM383 583h5v5h-5zM383 579h5v5h-5zM383 606h5v5h-5zM384 606h5v5h-5zM384 582h5v5h-5zM384 601h5v5h-5zM385 606h5v5h-5zM385 596h5v5h-5zM385 607h5v5h-5zM385 582h5v5h-5zM386 615h5v5h-5zM386 613h5v5h-5zM386 574h5v5h-5zM387 614h5v5h-5zM387 607h5v5h-5zM387 601h5v5h-5zM387 603h5v5h-5zM388 613h5v5h-5zM388 614h5v5h-5zM388 604h5v5h-5zM388 610h5v5h-5zM388 601h5v5h-5zM389 603h5v5h-5zM389 609h5v5h-5zM389 604h5v5h-5zM390 602h5v5h-5zM390 586h5v5h-5zM390 612h5v5h-5zM390 593h5v5h-5zM391 612h5v5h-5zM391 605h5v5h-5zM391 607h5v5h-5zM391 611h5v5h-5zM392 605h5v5h-5zM392 613h5v5h-5zM392 610h5v5h-5zM392 614h5v5h-5zM392 582h5v5h-5zM393 613h5v5h-5zM393 614h5v5h-5zM393 582h5v5h-5zM393 584h5v5h-5zM394 595h5v5h-5zM394 611h5v5h-5zM394 615h5v5h-5zM394 603h5v5h-5zM395 604h5v5h-5zM395 605h5v5h-5zM395 596h5v5h-5zM396 603h5v5h-5zM396 604h5v5h-5zM396 613h5v5h-5zM396 599h5v5h-5zM396 596h5v5h-5zM397 611h5v5h-5zM397 591h5v5h-5zM397 608h5v5h-5zM397 579h5v5h-5zM398 610h5v5h-5zM398 608h5v5h-5zM398 561h5v5h-5zM399 608h5v5h-5zM399 580h5v5h-5zM399 599h5v5h-5zM400 603h5v5h-5zM400 591h5v5h-5zM400 604h5v5h-5zM400 600h5v5h-5zM401 599h5v5h-5zM401 601h5v5h-5zM401 600h5v5h-5zM402 601h5v5h-5zM402 606h5v5h-5zM402 602h5v5h-5zM402 600h5v5h-5zM403 599h5v5h-5zM403 597h5v5h-5zM403 600h5v5h-5zM403 595h5v5h-5zM404 603h5v5h-5zM404 601h5v5h-5zM404 600h5v5h-5zM405 591h5v5h-5zM405 570h5v5h-5zM405 564h5v5h-5zM405 597h5v5h-5zM405 599h5v5h-5zM406 598h5v5h-5zM406 603h5v5h-5zM406 594h5v5h-5zM406 599h5v5h-5zM407 602h5v5h-5zM407 604h5v5h-5zM407 576h5v5h-5zM408 603h5v5h-5zM408 601h5v5h-5zM408 599h5v5h-5zM408 600h5v5h-5zM409 572h5v5h-5zM409 602h5v5h-5zM409 592h5v5h-5zM409 603h5v5h-5zM409 593h5v5h-5zM410 596h5v5h-5zM410 593h5v5h-5zM410 584h5v5h-5zM410 597h5v5h-5zM411 592h5v5h-5zM411 602h5v5h-5zM411 590h5v5h-5zM411 605h5v5h-5zM412 608h5v5h-5zM412 579h5v5h-5zM412 602h5v5h-5zM413 589h5v5h-5zM413 600h5v5h-5zM413 597h5v5h-5zM413 603h5v5h-5zM414 586h5v5h-5zM414 598h5v5h-5zM414 603h5v5h-5zM414 579h5v5h-5zM415 608h5v5h-5zM415 597h5v5h-5zM415 605h5v5h-5zM415 602h5v5h-5zM416 604h5v5h-5zM416 592h5v5h-5zM416 608h5v5h-5zM416 611h5v5h-5zM417 610h5v5h-5zM417 591h5v5h-5zM417 598h5v5h-5zM417 604h5v5h-5zM418 601h5v5h-5zM418 607h5v5h-5zM418 605h5v5h-5zM419 597h5v5h-5zM419 562h5v5h-5zM419 593h5v5h-5zM419 596h5v5h-5zM420 607h5v5h-5zM420 600h5v5h-5zM420 590h5v5h-5zM420 606h5v5h-5zM421 594h5v5h-5zM421 599h5v5h-5zM421 607h5v5h-5zM421 606h5v5h-5zM422 563h5v5h-5zM422 607h5v5h-5zM422 606h5v5h-5zM422 604h5v5h-5zM423 608h5v5h-5zM423 607h5v5h-5zM423 606h5v5h-5zM424 606h5v5h-5zM424 609h5v5h-5zM424 608h5v5h-5zM424 611h5v5h-5zM425 593h5v5h-5zM425 602h5v5h-5zM425 601h5v5h-5zM425 600h5v5h-5zM426 598h5v5h-5zM426 603h5v5h-5zM426 601h5v5h-5zM426 589h5v5h-5zM427 610h5v5h-5zM427 588h5v5h-5zM427 606h5v5h-5zM428 593h5v5h-5zM428 597h5v5h-5zM428 596h5v5h-5zM428 599h5v5h-5zM429 602h5v5h-5zM429 608h5v5h-5zM429 596h5v5h-5zM429 609h5v5h-5zM430 603h5v5h-5zM430 579h5v5h-5zM430 606h5v5h-5zM430 597h5v5h-5zM431 605h5v5h-5zM431 596h5v5h-5zM431 594h5v5h-5zM431 607h5v5h-5zM431 606h5v5h-5zM432 607h5v5h-5zM432 590h5v5h-5zM432 602h5v5h-5zM432 583h5v5h-5zM433 602h5v5h-5zM433 605h5v5h-5zM433 578h5v5h-5zM434 604h5v5h-5zM434 599h5v5h-5zM434 591h5v5h-5zM434 592h5v5h-5zM435 595h5v5h-5zM435 589h5v5h-5zM435 597h5v5h-5zM435 606h5v5h-5zM435 598h5v5h-5zM436 606h5v5h-5zM436 569h5v5h-5zM436 593h5v5h-5zM436 605h5v5h-5zM437 606h5v5h-5zM437 610h5v5h-5zM437 608h5v5h-5zM437 604h5v5h-5zM438 600h5v5h-5zM438 596h5v5h-5zM438 594h5v5h-5zM438 562h5v5h-5zM439 587h5v5h-5zM439 598h5v5h-5zM439 596h5v5h-5zM439 595h5v5h-5zM440 597h5v5h-5zM440 592h5v5h-5zM440 571h5v5h-5zM440 600h5v5h-5zM441 600h5v5h-5zM441 586h5v5h-5zM441 597h5v5h-5zM442 579h5v5h-5zM442 602h5v5h-5zM442 591h5v5h-5zM443 580h5v5h-5zM443 588h5v5h-5zM443 584h5v5h-5zM443 594h5v5h-5zM444 579h5v5h-5zM444 594h5v5h-5zM444 601h5v5h-5zM444 583h5v5h-5zM445 597h5v5h-5zM445 596h5v5h-5zM445 588h5v5h-5zM445 595h5v5h-5zM446 581h5v5h-5zM446 599h5v5h-5zM446 598h5v5h-5zM446 593h5v5h-5zM447 594h5v5h-5zM447 596h5v5h-5zM447 603h5v5h-5zM448 602h5v5h-5zM448 596h5v5h-5zM448 604h5v5h-5zM448 599h5v5h-5zM448 578h5v5h-5zM449 600h5v5h-5zM449 603h5v5h-5zM449 604h5v5h-5zM450 605h5v5h-5zM450 601h5v5h-5zM450 609h5v5h-5zM450 587h5v5h-5zM451 608h5v5h-5zM451 601h5v5h-5zM451 604h5v5h-5zM452 600h5v5h-5zM452 607h5v5h-5zM452 603h5v5h-5zM453 601h5v5h-5zM453 584h5v5h-5zM453 595h5v5h-5zM453 593h5v5h-5zM454 589h5v5h-5zM454 603h5v5h-5zM454 585h5v5h-5zM454 605h5v5h-5zM455 603h5v5h-5zM455 578h5v5h-5zM456 599h5v5h-5zM456 595h5v5h-5zM456 598h5v5h-5zM456 608h5v5h-5zM457 599h5v5h-5zM457 602h5v5h-5zM457 605h5v5h-5zM457 607h5v5h-5zM457 608h5v5h-5zM458 598h5v5h-5zM458 605h5v5h-5zM458 574h5v5h-5zM458 602h5v5h-5zM459 601h5v5h-5zM459 600h5v5h-5zM459 590h5v5h-5zM459 607h5v5h-5zM460 603h5v5h-5zM460 563h5v5h-5zM460 606h5v5h-5zM460 592h5v5h-5zM461 604h5v5h-5zM461 601h5v5h-5zM461 596h5v5h-5zM462 607h5v5h-5zM462 604h5v5h-5zM462 596h5v5h-5zM463 596h5v5h-5zM463 601h5v5h-5zM463 602h5v5h-5zM463 604h5v5h-5zM464 602h5v5h-5zM464 608h5v5h-5zM464 605h5v5h-5zM464 567h5v5h-5zM465 593h5v5h-5zM465 600h5v5h-5zM465 603h5v5h-5zM465 596h5v5h-5zM466 597h5v5h-5zM466 594h5v5h-5zM466 611h5v5h-5zM466 607h5v5h-5zM467 598h5v5h-5zM467 610h5v5h-5zM467 606h5v5h-5zM468 610h5v5h-5zM468 599h5v5h-5zM468 603h5v5h-5zM469 603h5v5h-5zM469 601h5v5h-5zM469 588h5v5h-5zM469 605h5v5h-5zM470 600h5v5h-5zM470 607h5v5h-5zM470 609h5v5h-5zM470 608h5v5h-5zM471 609h5v5h-5zM471 608h5v5h-5zM471 610h5v5h-5zM472 608h5v5h-5zM472 610h5v5h-5zM472 611h5v5h-5zM473 610h5v5h-5zM473 607h5v5h-5zM473 609h5v5h-5zM474 590h5v5h-5zM474 607h5v5h-5zM474 602h5v5h-5zM474 605h5v5h-5zM475 605h5v5h-5zM475 607h5v5h-5zM475 603h5v5h-5zM476 608h5v5h-5zM476 606h5v5h-5zM476 607h5v5h-5zM477 607h5v5h-5zM477 608h5v5h-5zM477 602h5v5h-5zM477 605h5v5h-5zM478 605h5v5h-5zM478 600h5v5h-5zM478 598h5v5h-5zM478 607h5v5h-5zM479 603h5v5h-5zM479 604h5v5h-5zM479 599h5v5h-5zM479 605h5v5h-5zM480 607h5v5h-5zM480 606h5v5h-5zM480 609h5v5h-5zM480 568h5v5h-5zM481 605h5v5h-5zM481 606h5v5h-5zM481 608h5v5h-5zM481 607h5v5h-5zM482 610h5v5h-5zM482 606h5v5h-5zM482 602h5v5h-5zM483 599h5v5h-5zM483 582h5v5h-5zM483 600h5v5h-5zM483 611h5v5h-5zM483 612h5v5h-5zM484 607h5v5h-5zM484 612h5v5h-5zM484 609h5v5h-5zM484 614h5v5h-5zM485 608h5v5h-5zM485 607h5v5h-5zM485 604h5v5h-5zM485 605h5v5h-5zM486 605h5v5h-5zM486 597h5v5h-5zM486 607h5v5h-5zM486 598h5v5h-5zM487 602h5v5h-5zM487 597h5v5h-5zM487 607h5v5h-5zM487 596h5v5h-5zM488 608h5v5h-5zM488 585h5v5h-5zM488 606h5v5h-5zM488 602h5v5h-5zM489 605h5v5h-5zM489 603h5v5h-5zM489 599h5v5h-5zM490 599h5v5h-5zM490 604h5v5h-5zM490 586h5v5h-5zM491 594h5v5h-5zM491 601h5v5h-5zM491 610h5v5h-5zM491 603h5v5h-5zM492 602h5v5h-5zM492 598h5v5h-5zM492 597h5v5h-5zM492 608h5v5h-5zM492 601h5v5h-5zM493 599h5v5h-5zM493 605h5v5h-5zM493 604h5v5h-5zM493 603h5v5h-5zM494 605h5v5h-5zM494 611h5v5h-5zM494 610h5v5h-5zM494 608h5v5h-5zM495 603h5v5h-5zM495 601h5v5h-5zM495 602h5v5h-5zM496 601h5v5h-5zM496 605h5v5h-5zM496 599h5v5h-5zM496 606h5v5h-5zM497 604h5v5h-5zM497 609h5v5h-5zM497 599h5v5h-5zM498 602h5v5h-5zM498 574h5v5h-5zM498 587h5v5h-5zM499 583h5v5h-5zM499 606h5v5h-5zM499 607h5v5h-5zM500 600h5v5h-5zM500 589h5v5h-5zM500 610h5v5h-5zM500 607h5v5h-5zM501 589h5v5h-5zM501 609h5v5h-5zM501 596h5v5h-5zM501 592h5v5h-5zM502 595h5v5h-5zM502 593h5v5h-5zM502 597h5v5h-5zM502 602h5v5h-5zM503 605h5v5h-5zM503 604h5v5h-5zM503 606h5v5h-5zM504 603h5v5h-5zM504 600h5v5h-5zM504 608h5v5h-5zM504 601h5v5h-5zM505 605h5v5h-5zM505 594h5v5h-5zM505 600h5v5h-5zM505 601h5v5h-5zM505 599h5v5h-5zM506 601h5v5h-5zM506 598h5v5h-5zM506 608h5v5h-5zM506 604h5v5h-5zM507 596h5v5h-5zM507 601h5v5h-5zM507 602h5v5h-5zM507 597h5v5h-5zM508 596h5v5h-5zM508 598h5v5h-5zM508 602h5v5h-5zM509 601h5v5h-5zM509 568h5v5h-5zM509 599h5v5h-5zM509 597h5v5h-5zM510 600h5v5h-5zM510 604h5v5h-5zM510 597h5v5h-5zM510 595h5v5h-5zM511 599h5v5h-5zM511 602h5v5h-5zM511 601h5v5h-5zM511 596h5v5h-5zM512 601h5v5h-5zM512 603h5v5h-5zM512 606h5v5h-5zM512 607h5v5h-5zM513 605h5v5h-5zM513 604h5v5h-5zM513 608h5v5h-5zM513 603h5v5h-5zM513 583h5v5h-5zM514 603h5v5h-5zM514 602h5v5h-5zM514 595h5v5h-5zM515 594h5v5h-5zM515 592h5v5h-5zM515 593h5v5h-5zM515 603h5v5h-5zM516 599h5v5h-5zM516 602h5v5h-5zM516 588h5v5h-5zM516 603h5v5h-5zM517 601h5v5h-5zM517 602h5v5h-5zM517 604h5v5h-5zM517 606h5v5h-5zM517 592h5v5h-5zM518 595h5v5h-5zM518 602h5v5h-5zM518 581h5v5h-5zM518 576h5v5h-5zM519 603h5v5h-5zM519 605h5v5h-5zM519 602h5v5h-5zM519 610h5v5h-5zM520 611h5v5h-5zM520 609h5v5h-5zM520 572h5v5h-5zM520 608h5v5h-5zM521 600h5v5h-5zM521 603h5v5h-5zM521 597h5v5h-5zM522 602h5v5h-5zM522 597h5v5h-5zM522 595h5v5h-5zM522 593h5v5h-5zM522 603h5v5h-5zM523 592h5v5h-5zM523 603h5v5h-5zM523 587h5v5h-5zM523 605h5v5h-5zM524 572h5v5h-5zM524 604h5v5h-5zM524 608h5v5h-5zM525 583h5v5h-5zM525 599h5v5h-5zM525 596h5v5h-5zM525 601h5v5h-5zM526 593h5v5h-5zM526 605h5v5h-5zM526 609h5v5h-5zM526 579h5v5h-5zM527 609h5v5h-5zM527 596h5v5h-5zM527 599h5v5h-5zM527 600h5v5h-5zM528 608h5v5h-5zM528 598h5v5h-5zM528 602h5v5h-5zM529 601h5v5h-5zM529 596h5v5h-5zM529 609h5v5h-5zM529 607h5v5h-5zM530 611h5v5h-5zM530 600h5v5h-5zM530 589h5v5h-5zM530 602h5v5h-5zM530 603h5v5h-5zM531 607h5v5h-5zM531 611h5v5h-5zM531 609h5v5h-5zM531 597h5v5h-5zM532 604h5v5h-5zM532 603h5v5h-5zM532 608h5v5h-5zM532 598h5v5h-5zM533 599h5v5h-5zM533 600h5v5h-5zM533 594h5v5h-5zM534 608h5v5h-5zM534 585h5v5h-5zM535 610h5v5h-5zM535 599h5v5h-5zM535 597h5v5h-5zM536 610h5v5h-5zM536 601h5v5h-5zM536 606h5v5h-5zM536 602h5v5h-5zM537 608h5v5h-5zM537 606h5v5h-5zM537 585h5v5h-5zM537 591h5v5h-5zM538 586h5v5h-5zM538 584h5v5h-5zM538 605h5v5h-5zM538 570h5v5h-5zM539 593h5v5h-5zM539 602h5v5h-5zM539 580h5v5h-5zM539 598h5v5h-5zM540 585h5v5h-5zM540 603h5v5h-5zM540 564h5v5h-5zM540 593h5v5h-5zM541 596h5v5h-5zM541 581h5v5h-5zM541 601h5v5h-5zM542 587h5v5h-5zM542 586h5v5h-5zM542 600h5v5h-5zM542 592h5v5h-5zM543 594h5v5h-5zM543 595h5v5h-5zM543 607h5v5h-5zM543 599h5v5h-5zM543 602h5v5h-5zM544 600h5v5h-5zM544 597h5v5h-5zM545 611h5v5h-5zM545 593h5v5h-5zM545 603h5v5h-5zM545 581h5v5h-5zM546 609h5v5h-5zM546 599h5v5h-5zM546 560h5v5h-5zM547 598h5v5h-5zM547 588h5v5h-5zM547 591h5v5h-5zM547 590h5v5h-5zM548 595h5v5h-5zM548 600h5v5h-5zM548 597h5v5h-5zM548 601h5v5h-5zM548 602h5v5h-5zM549 607h5v5h-5zM549 604h5v5h-5zM549 609h5v5h-5zM550 594h5v5h-5zM550 602h5v5h-5zM550 604h5v5h-5zM551 602h5v5h-5zM551 598h5v5h-5zM551 604h5v5h-5zM552 603h5v5h-5zM552 607h5v5h-5zM552 577h5v5h-5zM552 606h5v5h-5zM552 597h5v5h-5zM553 579h5v5h-5zM553 609h5v5h-5zM553 601h5v5h-5zM553 570h5v5h-5zM554 605h5v5h-5zM554 596h5v5h-5zM554 597h5v5h-5zM554 601h5v5h-5zM555 603h5v5h-5zM555 597h5v5h-5zM555 610h5v5h-5zM555 612h5v5h-5zM556 591h5v5h-5zM556 587h5v5h-5zM556 586h5v5h-5zM556 606h5v5h-5zM557 599h5v5h-5zM557 596h5v5h-5zM557 607h5v5h-5zM558 594h5v5h-5zM558 596h5v5h-5zM558 609h5v5h-5zM558 602h5v5h-5zM559 607h5v5h-5zM559 609h5v5h-5zM559 604h5v5h-5zM559 587h5v5h-5zM560 612h5v5h-5zM560 610h5v5h-5zM560 602h5v5h-5zM561 605h5v5h-5zM561 585h5v5h-5zM561 606h5v5h-5zM561 602h5v5h-5zM561 598h5v5h-5zM562 604h5v5h-5zM562 603h5v5h-5zM562 601h5v5h-5zM563 578h5v5h-5zM563 604h5v5h-5zM564 603h5v5h-5zM564 600h5v5h-5zM564 606h5v5h-5zM564 608h5v5h-5zM565 606h5v5h-5zM565 609h5v5h-5zM565 590h5v5h-5zM565 603h5v5h-5zM565 599h5v5h-5zM566 608h5v5h-5zM566 602h5v5h-5zM566 562h5v5h-5zM566 604h5v5h-5zM567 607h5v5h-5zM567 603h5v5h-5zM567 605h5v5h-5zM567 594h5v5h-5zM568 600h5v5h-5zM568 596h5v5h-5zM568 569h5v5h-5zM568 607h5v5h-5zM569 609h5v5h-5zM569 611h5v5h-5zM569 610h5v5h-5zM569 613h5v5h-5zM570 616h5v5h-5zM570 614h5v5h-5zM570 588h5v5h-5zM571 616h5v5h-5zM571 614h5v5h-5zM571 610h5v5h-5zM571 612h5v5h-5zM572 610h5v5h-5zM572 611h5v5h-5zM572 607h5v5h-5zM572 599h5v5h-5zM573 599h5v5h-5zM573 578h5v5h-5zM573 595h5v5h-5zM573 605h5v5h-5zM574 607h5v5h-5zM574 578h5v5h-5zM574 569h5v5h-5zM574 602h5v5h-5zM574 570h5v5h-5zM575 609h5v5h-5zM575 598h5v5h-5zM575 576h5v5h-5zM575 564h5v5h-5zM576 594h5v5h-5zM576 562h5v5h-5zM576 598h5v5h-5zM576 597h5v5h-5zM577 606h5v5h-5zM577 607h5v5h-5zM577 582h5v5h-5zM578 605h5v5h-5zM578 601h5v5h-5zM578 600h5v5h-5zM578 602h5v5h-5zM578 603h5v5h-5zM579 595h5v5h-5zM579 596h5v5h-5zM579 597h5v5h-5zM579 582h5v5h-5zM580 605h5v5h-5zM580 600h5v5h-5zM581 604h5v5h-5zM581 610h5v5h-5zM581 609h5v5h-5zM581 611h5v5h-5zM582 607h5v5h-5zM582 605h5v5h-5zM582 602h5v5h-5zM582 606h5v5h-5zM582 575h5v5h-5zM583 597h5v5h-5zM583 585h5v5h-5zM583 605h5v5h-5zM584 593h5v5h-5zM584 600h5v5h-5zM584 603h5v5h-5zM584 584h5v5h-5zM585 602h5v5h-5zM585 605h5v5h-5zM585 604h5v5h-5zM585 601h5v5h-5zM586 606h5v5h-5zM586 599h5v5h-5zM586 601h5v5h-5zM587 603h5v5h-5zM587 608h5v5h-5zM587 612h5v5h-5zM587 609h5v5h-5zM588 610h5v5h-5zM588 605h5v5h-5zM588 595h5v5h-5zM588 603h5v5h-5zM589 603h5v5h-5zM589 607h5v5h-5zM589 600h5v5h-5zM590 608h5v5h-5zM590 606h5v5h-5zM590 590h5v5h-5zM590 600h5v5h-5zM591 604h5v5h-5zM591 608h5v5h-5zM591 607h5v5h-5zM591 562h5v5h-5zM591 589h5v5h-5zM592 603h5v5h-5zM592 602h5v5h-5zM592 581h5v5h-5zM592 584h5v5h-5zM593 607h5v5h-5zM593 583h5v5h-5zM593 599h5v5h-5zM593 602h5v5h-5zM594 601h5v5h-5zM594 586h5v5h-5zM594 597h5v5h-5zM595 604h5v5h-5zM595 603h5v5h-5zM595 590h5v5h-5zM595 592h5v5h-5zM595 601h5v5h-5zM596 602h5v5h-5zM596 604h5v5h-5zM596 601h5v5h-5zM596 599h5v5h-5zM597 605h5v5h-5zM597 607h5v5h-5zM597 608h5v5h-5zM597 604h5v5h-5zM598 604h5v5h-5zM598 599h5v5h-5zM598 589h5v5h-5zM598 597h5v5h-5zM599 597h5v5h-5zM599 601h5v5h-5zM599 593h5v5h-5zM599 603h5v5h-5zM600 603h5v5h-5zM600 600h5v5h-5zM600 601h5v5h-5zM601 584h5v5h-5zM601 601h5v5h-5zM601 589h5v5h-5zM602 590h5v5h-5zM602 600h5v5h-5zM602 603h5v5h-5zM602 602h5v5h-5zM603 607h5v5h-5zM603 602h5v5h-5zM603 597h5v5h-5zM603 605h5v5h-5zM604 592h5v5h-5zM604 605h5v5h-5zM604 609h5v5h-5zM604 589h5v5h-5zM605 606h5v5h-5zM605 600h5v5h-5zM605 605h5v5h-5zM606 568h5v5h-5zM606 574h5v5h-5zM606 609h5v5h-5zM607 610h5v5h-5zM607 590h5v5h-5zM607 596h5v5h-5zM607 608h5v5h-5zM608 607h5v5h-5zM608 610h5v5h-5zM608 605h5v5h-5zM608 604h5v5h-5zM609 604h5v5h-5zM609 600h5v5h-5zM609 597h5v5h-5zM609 596h5v5h-5zM610 591h5v5h-5zM610 605h5v5h-5zM610 567h5v5h-5zM610 599h5v5h-5zM611 604h5v5h-5zM611 570h5v5h-5zM611 597h5v5h-5zM612 586h5v5h-5zM612 611h5v5h-5zM612 599h5v5h-5zM612 600h5v5h-5zM613 603h5v5h-5zM613 604h5v5h-5zM613 605h5v5h-5zM613 608h5v5h-5zM614 607h5v5h-5zM614 605h5v5h-5zM614 602h5v5h-5zM615 603h5v5h-5zM615 593h5v5h-5zM615 592h5v5h-5zM615 582h5v5h-5zM616 602h5v5h-5zM616 609h5v5h-5zM616 595h5v5h-5zM617 593h5v5h-5zM617 601h5v5h-5zM617 600h5v5h-5zM617 602h5v5h-5zM617 605h5v5h-5zM618 609h5v5h-5zM618 601h5v5h-5zM618 602h5v5h-5zM619 598h5v5h-5zM619 592h5v5h-5zM619 595h5v5h-5zM620 592h5v5h-5zM620 598h5v5h-5zM620 603h5v5h-5zM620 606h5v5h-5zM621 598h5v5h-5zM621 604h5v5h-5zM621 590h5v5h-5zM621 593h5v5h-5zM621 596h5v5h-5zM622 599h5v5h-5zM622 608h5v5h-5zM622 584h5v5h-5zM623 609h5v5h-5zM623 581h5v5h-5zM623 599h5v5h-5zM624 594h5v5h-5zM624 601h5v5h-5zM624 572h5v5h-5zM624 606h5v5h-5zM625 607h5v5h-5zM625 608h5v5h-5zM625 609h5v5h-5zM626 575h5v5h-5zM626 601h5v5h-5zM626 603h5v5h-5zM626 608h5v5h-5zM626 565h5v5h-5zM627 607h5v5h-5zM627 606h5v5h-5zM627 603h5v5h-5zM627 605h5v5h-5zM628 605h5v5h-5zM628 607h5v5h-5zM628 565h5v5h-5zM628 572h5v5h-5zM629 598h5v5h-5zM629 604h5v5h-5zM629 578h5v5h-5zM629 594h5v5h-5zM630 599h5v5h-5zM630 601h5v5h-5zM630 591h5v5h-5zM630 593h5v5h-5zM631 596h5v5h-5zM631 599h5v5h-5zM631 607h5v5h-5zM631 590h5v5h-5zM632 606h5v5h-5zM632 609h5v5h-5zM632 595h5v5h-5zM633 600h5v5h-5zM633 599h5v5h-5zM633 605h5v5h-5zM634 588h5v5h-5zM634 596h5v5h-5zM634 606h5v5h-5zM634 607h5v5h-5zM635 605h5v5h-5zM635 603h5v5h-5zM635 598h5v5h-5zM636 601h5v5h-5zM636 599h5v5h-5zM636 596h5v5h-5zM637 595h5v5h-5zM637 610h5v5h-5zM637 591h5v5h-5zM638 589h5v5h-5zM638 601h5v5h-5zM638 580h5v5h-5zM638 605h5v5h-5zM639 609h5v5h-5zM639 586h5v5h-5zM639 604h5v5h-5zM639 584h5v5h-5zM640 605h5v5h-5zM640 595h5v5h-5zM640 602h5v5h-5zM640 579h5v5h-5zM641 604h5v5h-5zM641 600h5v5h-5zM641 575h5v5h-5zM642 599h5v5h-5zM642 591h5v5h-5zM642 608h5v5h-5zM643 604h5v5h-5zM643 606h5v5h-5zM643 590h5v5h-5zM643 595h5v5h-5zM644 599h5v5h-5zM644 602h5v5h-5zM644 598h5v5h-5zM645 602h5v5h-5zM645 605h5v5h-5zM645 583h5v5h-5zM646 602h5v5h-5zM646 600h5v5h-5zM646 605h5v5h-5zM647 569h5v5h-5zM647 599h5v5h-5zM647 587h5v5h-5zM647 593h5v5h-5zM647 590h5v5h-5zM648 590h5v5h-5zM648 582h5v5h-5zM648 575h5v5h-5zM648 588h5v5h-5zM649 592h5v5h-5zM649 595h5v5h-5zM649 599h5v5h-5zM650 596h5v5h-5zM650 600h5v5h-5zM650 606h5v5h-5zM650 575h5v5h-5zM651 584h5v5h-5zM651 594h5v5h-5zM651 582h5v5h-5zM651 588h5v5h-5zM652 596h5v5h-5zM652 573h5v5h-5zM652 602h5v5h-5zM652 601h5v5h-5zM653 572h5v5h-5zM653 596h5v5h-5zM653 591h5v5h-5zM653 607h5v5h-5zM654 603h5v5h-5zM654 605h5v5h-5zM654 593h5v5h-5zM655 606h5v5h-5zM655 604h5v5h-5zM655 599h5v5h-5zM655 607h5v5h-5zM656 603h5v5h-5zM656 600h5v5h-5zM656 577h5v5h-5zM656 573h5v5h-5zM656 601h5v5h-5zM657 593h5v5h-5zM657 604h5v5h-5zM657 578h5v5h-5zM657 595h5v5h-5zM658 604h5v5h-5zM658 602h5v5h-5zM658 605h5v5h-5zM658 599h5v5h-5zM659 608h5v5h-5zM659 602h5v5h-5zM659 596h5v5h-5zM659 598h5v5h-5zM660 594h5v5h-5zM660 600h5v5h-5zM660 604h5v5h-5zM660 597h5v5h-5zM661 584h5v5h-5zM661 606h5v5h-5zM661 597h5v5h-5zM661 602h5v5h-5zM662 587h5v5h-5zM662 600h5v5h-5zM662 601h5v5h-5zM662 592h5v5h-5zM663 580h5v5h-5zM663 601h5v5h-5zM663 607h5v5h-5zM664 571h5v5h-5zM664 606h5v5h-5zM664 602h5v5h-5zM665 603h5v5h-5zM665 576h5v5h-5zM665 601h5v5h-5zM665 597h5v5h-5zM665 598h5v5h-5zM666 583h5v5h-5zM666 596h5v5h-5zM666 566h5v5h-5zM667 597h5v5h-5zM667 588h5v5h-5zM667 574h5v5h-5zM668 603h5v5h-5zM668 599h5v5h-5zM668 578h5v5h-5zM669 603h5v5h-5zM669 593h5v5h-5zM669 595h5v5h-5zM669 601h5v5h-5zM669 596h5v5h-5zM670 599h5v5h-5zM670 595h5v5h-5zM670 596h5v5h-5zM671 603h5v5h-5zM671 596h5v5h-5zM671 601h5v5h-5zM672 599h5v5h-5zM672 604h5v5h-5zM672 602h5v5h-5zM673 605h5v5h-5zM673 606h5v5h-5zM673 608h5v5h-5zM673 587h5v5h-5zM674 607h5v5h-5zM674 605h5v5h-5zM675 605h5v5h-5zM675 603h5v5h-5zM675 602h5v5h-5zM675 601h5v5h-5zM676 603h5v5h-5zM676 571h5v5h-5zM676 602h5v5h-5zM677 607h5v5h-5zM677 608h5v5h-5zM677 605h5v5h-5zM677 600h5v5h-5zM678 597h5v5h-5zM678 601h5v5h-5zM678 605h5v5h-5zM678 591h5v5h-5zM678 603h5v5h-5zM679 600h5v5h-5zM679 590h5v5h-5zM679 608h5v5h-5zM680 605h5v5h-5zM680 567h5v5h-5zM680 591h5v5h-5zM680 609h5v5h-5zM681 587h5v5h-5zM681 607h5v5h-5zM681 589h5v5h-5zM681 605h5v5h-5zM682 607h5v5h-5zM682 581h5v5h-5zM682 608h5v5h-5zM682 601h5v5h-5zM683 594h5v5h-5zM683 605h5v5h-5zM683 601h5v5h-5zM683 569h5v5h-5zM684 602h5v5h-5zM684 600h5v5h-5zM684 601h5v5h-5zM684 599h5v5h-5zM685 600h5v5h-5zM685 603h5v5h-5zM685 587h5v5h-5zM685 590h5v5h-5zM686 606h5v5h-5zM686 596h5v5h-5zM686 599h5v5h-5zM686 603h5v5h-5zM686 589h5v5h-5zM687 601h5v5h-5zM687 608h5v5h-5zM688 603h5v5h-5zM688 606h5v5h-5zM688 600h5v5h-5zM688 610h5v5h-5zM689 609h5v5h-5zM689 608h5v5h-5zM689 572h5v5h-5zM690 610h5v5h-5zM690 607h5v5h-5zM690 609h5v5h-5zM690 604h5v5h-5zM691 603h5v5h-5zM691 600h5v5h-5zM691 607h5v5h-5zM692 606h5v5h-5zM692 607h5v5h-5zM693 606h5v5h-5zM693 598h5v5h-5zM693 600h5v5h-5zM694 609h5v5h-5zM694 603h5v5h-5zM694 596h5v5h-5zM694 594h5v5h-5zM695 595h5v5h-5zM695 601h5v5h-5zM695 597h5v5h-5zM695 596h5v5h-5zM696 585h5v5h-5zM696 576h5v5h-5zM696 572h5v5h-5zM696 595h5v5h-5zM697 603h5v5h-5zM697 595h5v5h-5zM697 605h5v5h-5zM697 608h5v5h-5zM698 607h5v5h-5zM698 587h5v5h-5zM699 606h5v5h-5zM699 604h5v5h-5zM699 607h5v5h-5zM699 608h5v5h-5zM699 609h5v5h-5zM700 597h5v5h-5zM700 594h5v5h-5zM700 596h5v5h-5zM701 604h5v5h-5zM701 606h5v5h-5zM702 604h5v5h-5zM702 607h5v5h-5zM702 609h5v5h-5zM702 600h5v5h-5zM703 600h5v5h-5zM703 593h5v5h-5zM703 595h5v5h-5zM703 596h5v5h-5zM704 602h5v5h-5zM704 596h5v5h-5zM704 591h5v5h-5zM704 603h5v5h-5zM704 601h5v5h-5zM705 599h5v5h-5zM705 604h5v5h-5zM705 597h5v5h-5zM705 595h5v5h-5zM706 593h5v5h-5zM706 596h5v5h-5zM707 600h5v5h-5zM707 605h5v5h-5zM707 603h5v5h-5zM707 598h5v5h-5zM708 586h5v5h-5zM708 603h5v5h-5zM708 595h5v5h-5zM708 602h5v5h-5zM708 598h5v5h-5zM709 602h5v5h-5zM709 603h5v5h-5zM709 596h5v5h-5zM709 597h5v5h-5zM710 603h5v5h-5zM710 605h5v5h-5zM710 597h5v5h-5zM710 592h5v5h-5zM711 600h5v5h-5zM711 599h5v5h-5zM711 602h5v5h-5zM711 596h5v5h-5zM712 598h5v5h-5zM712 589h5v5h-5zM712 604h5v5h-5zM712 592h5v5h-5zM713 587h5v5h-5zM713 596h5v5h-5zM713 569h5v5h-5zM714 597h5v5h-5zM714 605h5v5h-5zM714 569h5v5h-5zM715 598h5v5h-5zM715 588h5v5h-5zM715 605h5v5h-5zM715 590h5v5h-5zM716 604h5v5h-5zM716 594h5v5h-5zM716 562h5v5h-5zM716 606h5v5h-5zM717 599h5v5h-5zM717 602h5v5h-5zM717 603h5v5h-5zM717 604h5v5h-5zM718 602h5v5h-5zM718 609h5v5h-5zM718 601h5v5h-5zM718 607h5v5h-5zM719 607h5v5h-5zM719 599h5v5h-5zM719 603h5v5h-5zM719 612h5v5h-5zM720 609h5v5h-5zM720 608h5v5h-5zM720 607h5v5h-5zM721 606h5v5h-5zM721 604h5v5h-5zM721 607h5v5h-5zM721 593h5v5h-5zM722 595h5v5h-5zM722 594h5v5h-5zM722 593h5v5h-5zM722 592h5v5h-5zM723 590h5v5h-5zM723 588h5v5h-5zM723 606h5v5h-5zM724 575h5v5h-5zM724 602h5v5h-5zM724 603h5v5h-5zM725 566h5v5h-5zM725 606h5v5h-5zM725 593h5v5h-5zM725 595h5v5h-5zM726 592h5v5h-5zM726 604h5v5h-5zM726 601h5v5h-5zM727 585h5v5h-5zM727 596h5v5h-5zM727 592h5v5h-5zM728 590h5v5h-5zM728 565h5v5h-5zM728 596h5v5h-5zM729 598h5v5h-5zM729 585h5v5h-5zM729 604h5v5h-5zM730 607h5v5h-5zM730 608h5v5h-5zM731 603h5v5h-5zM731 573h5v5h-5zM731 600h5v5h-5zM731 585h5v5h-5zM732 598h5v5h-5zM732 599h5v5h-5zM732 575h5v5h-5zM733 596h5v5h-5zM733 591h5v5h-5zM733 577h5v5h-5zM733 602h5v5h-5zM734 592h5v5h-5zM734 584h5v5h-5zM734 599h5v5h-5zM735 607h5v5h-5zM735 612h5v5h-5zM736 580h5v5h-5zM736 611h5v5h-5zM736 602h5v5h-5zM736 594h5v5h-5zM737 611h5v5h-5zM737 600h5v5h-5zM737 603h5v5h-5zM737 604h5v5h-5zM738 608h5v5h-5zM738 603h5v5h-5zM738 604h5v5h-5zM738 601h5v5h-5zM738 596h5v5h-5zM739 607h5v5h-5zM739 610h5v5h-5zM739 611h5v5h-5zM740 611h5v5h-5zM740 591h5v5h-5zM740 605h5v5h-5zM740 608h5v5h-5zM741 609h5v5h-5zM741 610h5v5h-5zM741 613h5v5h-5zM742 610h5v5h-5zM742 600h5v5h-5zM742 596h5v5h-5zM743 599h5v5h-5zM743 583h5v5h-5zM743 609h5v5h-5zM743 606h5v5h-5zM744 605h5v5h-5zM744 581h5v5h-5zM744 607h5v5h-5zM744 610h5v5h-5zM745 612h5v5h-5zM745 611h5v5h-5zM745 609h5v5h-5zM746 571h5v5h-5zM746 609h5v5h-5zM746 601h5v5h-5zM746 592h5v5h-5zM747 596h5v5h-5zM747 598h5v5h-5zM747 590h5v5h-5zM747 599h5v5h-5zM747 594h5v5h-5zM748 605h5v5h-5zM748 599h5v5h-5zM748 607h5v5h-5zM748 601h5v5h-5zM749 609h5v5h-5zM749 605h5v5h-5zM749 606h5v5h-5zM750 612h5v5h-5zM750 609h5v5h-5zM750 603h5v5h-5zM750 599h5v5h-5zM751 608h5v5h-5zM751 611h5v5h-5zM751 606h5v5h-5zM751 609h5v5h-5zM751 580h5v5h-5zM752 611h5v5h-5zM752 581h5v5h-5zM753 613h5v5h-5zM753 600h5v5h-5zM753 612h5v5h-5zM753 606h5v5h-5zM754 604h5v5h-5zM754 608h5v5h-5zM754 611h5v5h-5zM754 603h5v5h-5zM755 614h5v5h-5zM755 616h5v5h-5zM755 617h5v5h-5zM755 597h5v5h-5zM756 606h5v5h-5zM756 613h5v5h-5zM756 610h5v5h-5zM756 609h5v5h-5zM757 605h5v5h-5zM757 573h5v5h-5zM757 607h5v5h-5zM757 608h5v5h-5zM758 604h5v5h-5zM758 611h5v5h-5zM758 614h5v5h-5zM758 609h5v5h-5zM759 611h5v5h-5zM759 612h5v5h-5zM759 613h5v5h-5zM760 614h5v5h-5zM760 611h5v5h-5zM760 612h5v5h-5zM761 593h5v5h-5zM761 610h5v5h-5zM761 613h5v5h-5zM762 609h5v5h-5zM762 612h5v5h-5zM762 611h5v5h-5zM763 609h5v5h-5zM763 602h5v5h-5zM763 605h5v5h-5zM763 593h5v5h-5zM764 610h5v5h-5zM764 601h5v5h-5zM764 587h5v5h-5zM764 602h5v5h-5zM765 602h5v5h-5zM765 599h5v5h-5zM765 594h5v5h-5zM765 605h5v5h-5zM766 606h5v5h-5zM766 612h5v5h-5zM767 563h5v5h-5zM767 612h5v5h-5zM767 608h5v5h-5zM767 607h5v5h-5zM768 603h5v5h-5zM768 608h5v5h-5zM768 600h5v5h-5zM768 599h5v5h-5zM769 599h5v5h-5zM769 600h5v5h-5zM769 596h5v5h-5zM770 602h5v5h-5zM770 598h5v5h-5zM770 600h5v5h-5zM771 606h5v5h-5zM771 603h5v5h-5zM771 599h5v5h-5zM771 609h5v5h-5zM772 607h5v5h-5zM772 604h5v5h-5zM773 603h5v5h-5zM773 605h5v5h-5zM773 578h5v5h-5zM773 600h5v5h-5zM774 565h5v5h-5zM774 595h5v5h-5zM774 612h5v5h-5zM774 602h5v5h-5zM775 602h5v5h-5zM775 580h5v5h-5zM775 600h5v5h-5zM776 600h5v5h-5zM776 587h5v5h-5zM776 601h5v5h-5zM776 594h5v5h-5zM777 593h5v5h-5zM777 600h5v5h-5zM777 598h5v5h-5zM777 582h5v5h-5zM777 599h5v5h-5zM778 598h5v5h-5zM778 601h5v5h-5zM778 611h5v5h-5zM778 575h5v5h-5zM779 600h5v5h-5zM779 607h5v5h-5zM779 570h5v5h-5zM780 606h5v5h-5zM780 592h5v5h-5zM780 600h5v5h-5zM780 597h5v5h-5zM781 599h5v5h-5zM781 584h5v5h-5zM781 605h5v5h-5zM781 610h5v5h-5zM782 583h5v5h-5zM782 609h5v5h-5zM782 595h5v5h-5zM782 601h5v5h-5zM783 600h5v5h-5zM783 608h5v5h-5zM783 603h5v5h-5zM783 606h5v5h-5zM784 606h5v5h-5zM784 602h5v5h-5zM784 603h5v5h-5zM784 605h5v5h-5zM785 609h5v5h-5zM785 606h5v5h-5zM785 610h5v5h-5zM785 587h5v5h-5zM786 601h5v5h-5zM786 610h5v5h-5zM786 596h5v5h-5zM787 601h5v5h-5zM787 600h5v5h-5zM787 602h5v5h-5zM787 594h5v5h-5zM788 568h5v5h-5zM788 596h5v5h-5zM788 599h5v5h-5zM788 602h5v5h-5zM789 597h5v5h-5zM789 602h5v5h-5zM789 605h5v5h-5zM790 607h5v5h-5zM790 610h5v5h-5zM790 611h5v5h-5zM790 612h5v5h-5zM791 611h5v5h-5zM791 605h5v5h-5zM791 608h5v5h-5zM792 611h5v5h-5zM792 613h5v5h-5zM792 586h5v5h-5zM793 605h5v5h-5zM793 606h5v5h-5zM793 575h5v5h-5zM793 611h5v5h-5zM794 608h5v5h-5zM794 609h5v5h-5zM794 610h5v5h-5zM794 607h5v5h-5zM795 589h5v5h-5zM795 608h5v5h-5zM795 609h5v5h-5zM796 593h5v5h-5zM796 611h5v5h-5zM796 602h5v5h-5zM796 612h5v5h-5zM797 613h5v5h-5zM797 612h5v5h-5zM797 615h5v5h-5zM798 614h5v5h-5zM798 612h5v5h-5zM798 606h5v5h-5zM799 608h5v5h-5zM799 602h5v5h-5zM799 612h5v5h-5zM799 594h5v5h-5zM800 602h5v5h-5zM800 604h5v5h-5zM800 590h5v5h-5zM800 605h5v5h-5zM801 576h5v5h-5zM801 608h5v5h-5zM801 605h5v5h-5zM802 610h5v5h-5zM802 603h5v5h-5zM802 606h5v5h-5zM802 596h5v5h-5zM803 597h5v5h-5zM803 606h5v5h-5zM803 607h5v5h-5zM803 595h5v5h-5zM803 596h5v5h-5zM804 596h5v5h-5zM804 602h5v5h-5zM804 611h5v5h-5zM804 589h5v5h-5zM805 613h5v5h-5zM805 608h5v5h-5zM805 587h5v5h-5zM806 610h5v5h-5zM806 593h5v5h-5zM806 611h5v5h-5zM806 592h5v5h-5zM807 594h5v5h-5zM807 597h5v5h-5zM807 598h5v5h-5zM807 596h5v5h-5zM807 601h5v5h-5zM808 607h5v5h-5zM808 606h5v5h-5zM808 613h5v5h-5zM808 610h5v5h-5zM809 611h5v5h-5zM809 602h5v5h-5zM809 613h5v5h-5zM809 605h5v5h-5zM810 607h5v5h-5zM810 601h5v5h-5zM810 603h5v5h-5zM810 610h5v5h-5zM811 611h5v5h-5zM811 610h5v5h-5zM812 610h5v5h-5zM812 611h5v5h-5zM812 609h5v5h-5zM812 608h5v5h-5zM812 602h5v5h-5zM813 602h5v5h-5zM813 605h5v5h-5zM813 607h5v5h-5zM813 616h5v5h-5zM814 601h5v5h-5zM814 609h5v5h-5zM814 603h5v5h-5zM815 600h5v5h-5zM815 601h5v5h-5zM815 602h5v5h-5zM815 580h5v5h-5zM816 594h5v5h-5zM816 607h5v5h-5zM816 598h5v5h-5zM816 563h5v5h-5zM816 602h5v5h-5zM817 604h5v5h-5zM817 601h5v5h-5zM817 609h5v5h-5zM817 603h5v5h-5zM818 610h5v5h-5zM818 614h5v5h-5zM818 612h5v5h-5zM818 606h5v5h-5zM819 610h5v5h-5zM819 598h5v5h-5zM819 605h5v5h-5zM820 605h5v5h-5zM820 575h5v5h-5zM820 598h5v5h-5zM820 606h5v5h-5zM820 603h5v5h-5zM821 597h5v5h-5zM821 606h5v5h-5zM821 603h5v5h-5zM821 609h5v5h-5zM822 603h5v5h-5zM822 584h5v5h-5zM822 611h5v5h-5zM822 609h5v5h-5zM823 609h5v5h-5zM823 610h5v5h-5zM823 605h5v5h-5zM823 608h5v5h-5zM824 607h5v5h-5zM824 608h5v5h-5zM824 615h5v5h-5zM824 566h5v5h-5zM825 615h5v5h-5zM825 616h5v5h-5zM825 614h5v5h-5zM825 611h5v5h-5zM825 605h5v5h-5zM826 606h5v5h-5zM826 612h5v5h-5zM826 616h5v5h-5zM826 611h5v5h-5zM827 609h5v5h-5zM827 605h5v5h-5zM827 604h5v5h-5zM827 601h5v5h-5zM828 600h5v5h-5zM828 597h5v5h-5zM828 614h5v5h-5zM828 579h5v5h-5zM829 610h5v5h-5zM829 602h5v5h-5zM829 587h5v5h-5zM830 595h5v5h-5zM830 604h5v5h-5zM830 601h5v5h-5zM830 605h5v5h-5zM831 607h5v5h-5zM831 606h5v5h-5zM831 610h5v5h-5zM832 611h5v5h-5zM832 614h5v5h-5zM832 608h5v5h-5zM832 602h5v5h-5zM833 615h5v5h-5zM833 618h5v5h-5zM833 617h5v5h-5zM833 601h5v5h-5zM833 613h5v5h-5zM834 615h5v5h-5zM834 603h5v5h-5zM834 610h5v5h-5zM835 602h5v5h-5zM835 600h5v5h-5zM835 595h5v5h-5zM835 604h5v5h-5zM836 581h5v5h-5zM836 614h5v5h-5zM836 613h5v5h-5zM837 577h5v5h-5zM837 610h5v5h-5zM837 584h5v5h-5zM837 611h5v5h-5zM838 610h5v5h-5zM838 588h5v5h-5zM838 608h5v5h-5zM838 603h5v5h-5zM839 603h5v5h-5zM839 605h5v5h-5zM839 574h5v5h-5zM839 566h5v5h-5zM840 612h5v5h-5zM840 605h5v5h-5zM840 608h5v5h-5zM840 601h5v5h-5zM841 610h5v5h-5zM841 603h5v5h-5zM841 605h5v5h-5zM841 599h5v5h-5zM842 605h5v5h-5zM842 611h5v5h-5zM842 613h5v5h-5zM843 618h5v5h-5zM843 617h5v5h-5zM843 615h5v5h-5zM844 617h5v5h-5zM844 616h5v5h-5zM844 607h5v5h-5zM844 606h5v5h-5zM845 606h5v5h-5zM845 609h5v5h-5zM845 604h5v5h-5zM845 616h5v5h-5zM846 606h5v5h-5zM846 608h5v5h-5zM846 609h5v5h-5zM846 612h5v5h-5zM847 614h5v5h-5zM847 611h5v5h-5zM847 609h5v5h-5zM848 611h5v5h-5zM848 610h5v5h-5zM848 607h5v5h-5zM848 577h5v5h-5zM849 604h5v5h-5zM849 603h5v5h-5zM849 609h5v5h-5zM849 610h5v5h-5zM850 600h5v5h-5zM850 615h5v5h-5zM850 616h5v5h-5zM851 580h5v5h-5zM851 617h5v5h-5zM851 606h5v5h-5zM851 610h5v5h-5zM851 604h5v5h-5zM852 612h5v5h-5zM852 602h5v5h-5zM852 598h5v5h-5zM852 587h5v5h-5zM853 611h5v5h-5zM853 602h5v5h-5zM853 603h5v5h-5zM854 604h5v5h-5zM854 603h5v5h-5zM854 607h5v5h-5zM854 611h5v5h-5zM855 600h5v5h-5zM855 613h5v5h-5zM855 595h5v5h-5zM855 615h5v5h-5zM855 612h5v5h-5zM856 609h5v5h-5zM856 599h5v5h-5zM856 606h5v5h-5zM857 603h5v5h-5zM857 602h5v5h-5zM857 605h5v5h-5zM857 614h5v5h-5zM858 612h5v5h-5zM858 611h5v5h-5zM858 609h5v5h-5zM859 604h5v5h-5zM859 598h5v5h-5zM859 610h5v5h-5zM859 605h5v5h-5zM859 612h5v5h-5zM860 584h5v5h-5zM860 606h5v5h-5zM860 604h5v5h-5zM860 612h5v5h-5zM861 605h5v5h-5zM861 612h5v5h-5zM861 601h5v5h-5zM862 599h5v5h-5zM862 607h5v5h-5zM862 581h5v5h-5zM862 608h5v5h-5zM863 583h5v5h-5zM863 587h5v5h-5zM863 607h5v5h-5zM863 601h5v5h-5zM864 611h5v5h-5zM864 612h5v5h-5zM864 600h5v5h-5zM864 609h5v5h-5zM864 608h5v5h-5zM865 612h5v5h-5zM865 611h5v5h-5zM865 616h5v5h-5zM865 614h5v5h-5zM866 616h5v5h-5zM866 602h5v5h-5zM866 608h5v5h-5zM866 613h5v5h-5zM867 605h5v5h-5zM867 603h5v5h-5zM867 589h5v5h-5zM867 611h5v5h-5zM868 606h5v5h-5zM868 587h5v5h-5zM868 614h5v5h-5zM868 607h5v5h-5zM869 608h5v5h-5zM869 610h5v5h-5zM869 616h5v5h-5zM869 606h5v5h-5zM870 607h5v5h-5zM870 610h5v5h-5zM870 612h5v5h-5zM870 608h5v5h-5zM871 569h5v5h-5zM871 612h5v5h-5zM871 609h5v5h-5zM871 614h5v5h-5zM872 615h5v5h-5zM872 613h5v5h-5zM872 598h5v5h-5zM872 610h5v5h-5zM873 612h5v5h-5zM873 610h5v5h-5zM873 613h5v5h-5zM874 616h5v5h-5zM874 614h5v5h-5zM874 573h5v5h-5zM875 580h5v5h-5zM875 611h5v5h-5zM875 612h5v5h-5zM875 608h5v5h-5zM876 600h5v5h-5zM876 596h5v5h-5zM876 599h5v5h-5zM877 606h5v5h-5zM877 605h5v5h-5zM877 608h5v5h-5zM877 609h5v5h-5zM877 603h5v5h-5zM878 600h5v5h-5zM878 606h5v5h-5zM878 605h5v5h-5zM878 602h5v5h-5zM879 602h5v5h-5zM879 617h5v5h-5zM879 600h5v5h-5zM879 612h5v5h-5zM880 587h5v5h-5zM880 612h5v5h-5zM881 591h5v5h-5zM881 615h5v5h-5zM881 599h5v5h-5zM881 606h5v5h-5zM881 619h5v5h-5zM882 603h5v5h-5zM882 609h5v5h-5zM882 578h5v5h-5zM882 604h5v5h-5zM883 612h5v5h-5zM883 613h5v5h-5zM883 614h5v5h-5zM884 613h5v5h-5zM884 615h5v5h-5zM884 614h5v5h-5zM885 611h5v5h-5zM885 604h5v5h-5zM885 607h5v5h-5zM885 613h5v5h-5zM885 602h5v5h-5zM886 565h5v5h-5zM886 606h5v5h-5zM886 613h5v5h-5zM887 601h5v5h-5zM887 604h5v5h-5zM887 613h5v5h-5zM888 613h5v5h-5zM888 612h5v5h-5zM888 596h5v5h-5zM888 611h5v5h-5zM889 587h5v5h-5zM889 597h5v5h-5zM889 607h5v5h-5zM889 606h5v5h-5zM890 599h5v5h-5zM890 610h5v5h-5zM890 605h5v5h-5zM890 602h5v5h-5zM891 610h5v5h-5zM891 565h5v5h-5zM891 604h5v5h-5zM891 612h5v5h-5zM892 614h5v5h-5zM892 610h5v5h-5zM892 609h5v5h-5zM892 608h5v5h-5zM893 604h5v5h-5zM893 602h5v5h-5zM893 616h5v5h-5zM893 615h5v5h-5zM894 617h5v5h-5zM894 615h5v5h-5zM894 609h5v5h-5zM894 614h5v5h-5zM894 584h5v5h-5zM895 602h5v5h-5zM895 614h5v5h-5zM895 589h5v5h-5zM896 611h5v5h-5zM896 603h5v5h-5zM896 610h5v5h-5zM897 607h5v5h-5zM897 610h5v5h-5zM897 609h5v5h-5zM898 611h5v5h-5zM898 612h5v5h-5zM898 613h5v5h-5zM898 608h5v5h-5zM898 607h5v5h-5zM899 604h5v5h-5zM899 610h5v5h-5zM899 608h5v5h-5zM900 609h5v5h-5zM900 613h5v5h-5zM900 615h5v5h-5zM901 584h5v5h-5zM901 614h5v5h-5zM902 602h5v5h-5zM902 610h5v5h-5zM902 614h5v5h-5zM903 614h5v5h-5zM903 611h5v5h-5zM903 613h5v5h-5zM903 616h5v5h-5zM904 616h5v5h-5zM904 614h5v5h-5zM904 567h5v5h-5zM904 612h5v5h-5zM905 608h5v5h-5zM905 613h5v5h-5zM905 599h5v5h-5zM905 593h5v5h-5zM906 608h5v5h-5zM906 615h5v5h-5zM906 606h5v5h-5zM906 611h5v5h-5zM907 612h5v5h-5zM907 619h5v5h-5zM907 617h5v5h-5zM907 620h5v5h-5zM908 619h5v5h-5zM908 621h5v5h-5zM908 618h5v5h-5zM909 609h5v5h-5zM909 617h5v5h-5zM909 610h5v5h-5zM909 608h5v5h-5zM910 619h5v5h-5zM910 614h5v5h-5zM910 579h5v5h-5zM911 609h5v5h-5zM911 614h5v5h-5zM911 605h5v5h-5zM911 617h5v5h-5zM911 603h5v5h-5zM912 610h5v5h-5zM912 615h5v5h-5zM912 612h5v5h-5zM912 605h5v5h-5zM913 617h5v5h-5zM913 614h5v5h-5zM914 611h5v5h-5zM914 613h5v5h-5zM914 606h5v5h-5zM915 606h5v5h-5zM915 610h5v5h-5zM915 603h5v5h-5zM915 619h5v5h-5zM916 618h5v5h-5zM916 617h5v5h-5zM916 613h5v5h-5zM916 615h5v5h-5zM916 608h5v5h-5zM917 609h5v5h-5zM917 615h5v5h-5zM917 606h5v5h-5zM917 595h5v5h-5zM918 612h5v5h-5zM918 618h5v5h-5zM918 590h5v5h-5zM918 619h5v5h-5zM919 617h5v5h-5zM919 613h5v5h-5zM919 608h5v5h-5zM919 609h5v5h-5zM920 602h5v5h-5zM920 600h5v5h-5zM920 604h5v5h-5zM920 592h5v5h-5zM920 598h5v5h-5zM921 590h5v5h-5zM921 601h5v5h-5zM921 608h5v5h-5zM922 613h5v5h-5zM922 610h5v5h-5zM923 611h5v5h-5zM923 612h5v5h-5zM923 615h5v5h-5zM924 612h5v5h-5zM924 602h5v5h-5zM924 607h5v5h-5zM924 614h5v5h-5zM925 612h5v5h-5zM925 610h5v5h-5zM925 606h5v5h-5zM925 604h5v5h-5zM926 607h5v5h-5zM926 604h5v5h-5zM926 565h5v5h-5zM927 579h5v5h-5zM927 613h5v5h-5zM927 611h5v5h-5zM927 614h5v5h-5zM928 614h5v5h-5zM928 600h5v5h-5zM928 610h5v5h-5zM928 602h5v5h-5zM929 612h5v5h-5zM929 611h5v5h-5zM929 613h5v5h-5zM930 611h5v5h-5zM930 607h5v5h-5zM930 610h5v5h-5zM931 608h5v5h-5zM931 585h5v5h-5zM931 579h5v5h-5zM931 612h5v5h-5zM932 608h5v5h-5zM932 605h5v5h-5zM932 601h5v5h-5zM933 610h5v5h-5zM933 608h5v5h-5zM933 602h5v5h-5zM933 613h5v5h-5zM934 578h5v5h-5zM934 614h5v5h-5zM934 607h5v5h-5zM935 592h5v5h-5zM935 603h5v5h-5zM935 600h5v5h-5zM935 608h5v5h-5zM936 608h5v5h-5zM936 605h5v5h-5zM936 585h5v5h-5zM937 600h5v5h-5zM937 607h5v5h-5zM937 613h5v5h-5zM937 609h5v5h-5zM937 594h5v5h-5zM938 608h5v5h-5zM938 600h5v5h-5zM938 598h5v5h-5zM939 604h5v5h-5zM939 609h5v5h-5z" fill="#f64a44"/>
<polyline points="90.8,615.4 91.0,612.4 91.3,615.9 91.5,617.8 91.7,616.7 92.0,616.1 92.2,582.9 92.5,616.7 92.7,612.5 92.9,610.3 93.2,615.6 93.4,617.7 93.6,616.9 93.9,608.0 94.1,613.3 94.3,605.4 94.6,585.6 94.8,598.9 95.1,584.5 95.3,613.2 95.5,613.2 95.8,604.9 96.0,612.7 96.2,607.6 96.5,617.5 96.7,612.8 96.9,622.8 97.2,605.9 97.4,622.1 97.7,621.5 97.9,617.5 98.1,615.9 98.4,614.0 98.6,603.6 98.8,602.9 99.1,607.8 99.3,592.4 99.5,610.4 99.8,614.3 100.0,615.4 100.3,605.5 100.5,611.5 100.7,611.0 101.0,613.6 101.2,615.9 101.4,620.9 101.7,617.7 101.9,619.2 102.1,603.1 102.4,619.0 102.6,586.4 102.9,617.1 103.1,538.0 103.3,618.7 103.6,598.5 103.8,620.5 104.0,604.0 104.3,614.5 104.5,609.3 104.7,608.0 105.0,606.7 105.2,610.4 105.5,613.8 105.7,607.9 105.9,604.8 106.2,613.3 106.4,610.6 106.6,600.3 106.9,609.2 107.1,611.5 107.3,606.8 107.6,616.7 107.8,613.3 108.1,614.5 108.3,616.2 108.5,606.8 108.8,609.4 109.0,612.4 109.2,607.6 109.5,610.8 109.7,608.4 109.9,610.6 110.2,613.0 110.4,606.6 110.7,620.7 110.9,620.9 111.1,619.7 111.4,617.9 111.6,616.2 111.8,614.7 112.1,598.6 112.3,608.1 112.5,608.1 112.8,606.8 113.0,607.8 113.3,602.3 113.5,602.1 113.7,603.4 114.0,601.8 114.2,601.0 114.4,607.0 114.7,602.4 114.9,605.1 115.1,598.4 115.4,612.8 115.6,607.2 115.9,612.3 116.1,606.5 116.3,605.9 116.6,605.7 116.8,608.8 117.0,575.0 117.3,606.0 117.5,603.2 117.7,603.7 118.0,615.6 118.2,599.5 118.5,598.7 118.7,617.2 118.9,577.4 119.2,615.1 119.4,525.4 119.6,606.8 119.9,571.6 120.1,617.3 120.3,602.1 120.6,602.4 120.8,607.0 121.1,599.8 121.3,610.1 121.5,618.8 121.8,605.9 122.0,613.3 122.2,618.3 122.5,612.7 122.7,615.3 122.9,609.1 123.2,615.1 123.4,572.9 123.7,612.4 123.9,613.1 124.1,609.4 124.4,585.4 124.6,614.3 124.8,610.7 125.1,602.9 125.3,598.2 125.5,609.5 125.8,610.5 126.0,605.8 126.3,609.1 126.5,612.7 126.7,601.8 127.0,605.1 127.2,606.0 127.4,615.8 127.7,604.7 127.9,610.7 128.1,612.9 128.4,617.7 128.6,617.4 128.9,618.9 129.1,614.2 129.3,605.0 129.6,617.5 129.8,606.6 130.0,610.8 130.3,601.1 130.5,607.0 130.7,613.0 131.0,613.0 131.2,606.9 131.5,609.5 131.7,615.9 131.9,616.1 132.2,612.9 132.4,611.8 132.6,613.7 132.9,606.0 133.1,604.0 133.3,618.3 133.6,615.4 133.8,610.7 134.1,585.8 134.3,600.5 134.5,606.3 134.8,614.1 135.0,602.0 135.2,613.8 135.5,557.5 135.7,608.7 135.9,590.3 136.2,612.5 136.4,595.3 136.7,616.6 136.9,604.3 137.1,602.1 137.4,606.6 137.6,604.1 137.8,584.2 138.1,596.2 138.3,608.5 138.5,613.9 138.8,595.1 139.0,610.9 139.3,611.2 139.5,607.0 139.7,583.7 140.0,600.6 140.2,612.5 140.4,612.9 140.7,583.1 140.9,609.2 141.1,611.7 141.4,605.1 141.6,615.8 141.9,617.2 142.1,617.3 142.3,618.1 142.6,617.1 142.8,617.0 143.0,598.2 143.3,603.3 143.5,608.6 143.7,605.6 144.0,612.8 144.2,615.8 144.4,602.7 144.7,612.3 144.9,603.0 145.2,606.7 145.4,608.3 145.6,612.4 145.9,610.1 146.1,610.7 146.3,606.5 146.6,604.8 146.8,606.0 147.0,601.1 147.3,599.8 147.5,600.5 147.8,605.3 148.0,608.7 148.2,609.2 148.5,611.2 148.7,614.8 148.9,614.9 149.2,607.5 149.4,599.8 149.6,614.3 149.9,610.8 150.1,605.2 150.4,609.8 150.6,610.8 150.8,608.8 151.1,609.5 151.3,609.2 151.5,608.4 151.8,579.9 152.0,592.8 152.2,612.0 152.5,611.6 152.7,612.3 153.0,610.4 153.2,608.5 153.4,607.3 153.7,603.0 153.9,612.8 154.1,606.6 154.4,616.5 154.6,616.9 154.8,620.3 155.1,618.7 155.3,608.8 155.6,613.7 155.8,612.7 156.0,610.7 156.3,616.3 156.5,615.6 156.7,615.2 157.0,617.6 157.2,604.6 157.4,601.9 157.7,602.3 157.9,602.3 158.2,608.7 158.4,619.6 158.6,585.0 158.9,614.9 159.1,546.0 159.3,613.9 159.6,597.6 159.8,617.0 160.0,598.2 160.3,597.4 160.5,599.5 160.8,619.5 161.0,603.4 161.2,605.9 161.5,614.7 161.7,608.3 161.9,619.5 162.2,610.8 162.4,599.5 162.6,612.3 162.9,617.2 163.1,612.9 163.4,612.6 163.6,606.9 163.8,604.1 164.1,607.7 164.3,598.2 164.5,595.3 164.8,600.1 165.0,590.4 165.2,593.2 165.5,601.9 165.7,600.0 166.0,601.2 166.2,609.9 166.4,605.9 166.7,612.3 166.9,608.5 167.1,604.4 167.4,602.2 167.6,606.9 167.8,608.1 168.1,614.4 168.3,612.1 168.6,608.5 168.8,617.2 169.0,591.9 169.3,615.6 169.5,614.7 169.7,613.1 170.0,613.4 170.2,611.6 170.4,618.9 170.7,607.9 170.9,615.5 171.2,613.4 171.4,615.8 171.6,617.6 171.9,596.1 172.1,614.5 172.3,610.8 172.6,609.7 172.8,604.7 173.0,612.9 173.3,595.1 173.5,615.5 173.8,576.5 174.0,614.7 174.2,502.1 174.5,611.1 174.7,567.9 174.9,614.3 175.2,591.0 175.4,604.5 175.6,614.0 175.9,601.6 176.1,603.9 176.4,613.6 176.6,606.5 176.8,615.6 177.1,611.8 177.3,610.6 177.5,601.8 177.8,608.3 178.0,608.0 178.2,612.3 178.5,608.5 178.7,604.9 179.0,617.8 179.2,607.5 179.4,612.0 179.7,611.1 179.9,609.5 180.1,609.1 180.4,613.9 180.6,611.8 180.8,616.1 181.1,617.5 181.3,617.1 181.6,616.3 181.8,614.5 182.0,614.4 182.3,601.6 182.5,614.3 182.7,616.4 183.0,604.4 183.2,616.0 183.4,612.2 183.7,607.8 183.9,608.8 184.2,615.2 184.4,612.7 184.6,612.6 184.9,614.7 185.1,610.1 185.3,610.6 185.6,607.9 185.8,607.2 186.0,612.2 186.3,615.3 186.5,613.1 186.8,601.1 187.0,602.7 187.2,603.3 187.5,612.8 187.7,610.3 187.9,609.3 188.2,615.0 188.4,609.9 188.6,610.6 188.9,618.1 189.1,588.6 189.4,614.5 189.6,548.2 189.8,617.3 190.1,591.8 190.3,611.4 190.5,608.4 190.8,611.7 191.0,606.8 191.2,609.5 191.5,611.9 191.7,613.4 192.0,586.1 192.2,603.8 192.4,606.8 192.7,610.6 192.9,621.6 193.1,620.9 193.4,615.5 193.6,620.7 193.8,613.8 194.1,607.7 194.3,614.1 194.6,609.7 194.8,610.5 195.0,616.7 195.3,616.4 195.5,618.2 195.7,621.4 196.0,620.1 196.2,620.2 196.4,617.9 196.7,610.6 196.9,613.5 197.2,612.3 197.4,607.8 197.6,605.5 197.9,608.4 198.1,597.1 198.3,615.5 198.6,614.3 198.8,609.9 199.0,581.5 199.3,613.8 199.5,612.0 199.8,609.9 200.0,603.5 200.2,609.6 200.5,602.0 200.7,614.1 200.9,610.6 201.2,610.3 201.4,612.3 201.6,617.1 201.9,616.9 202.1,617.9 202.4,611.9 202.6,616.3 202.8,599.5 203.1,613.4 203.3,559.0 203.5,610.6 203.8,600.6 204.0,618.5 204.2,607.9 204.5,615.7 204.7,614.3 205.0,612.7 205.2,612.6 205.4,611.6 205.7,612.7 205.9,612.7 206.1,617.5 206.4,618.4 206.6,615.1 206.8,599.1 207.1,612.9 207.3,611.8 207.6,611.0 207.8,612.6 208.0,601.0 208.3,611.2 208.5,614.7 208.7,595.4 209.0,606.9 209.2,609.4 209.4,609.8 209.7,599.9 209.9,617.4 210.2,611.4 210.4,604.4 210.6,607.8 210.9,611.1 211.1,618.7 211.3,615.8 211.6,618.4 211.8,610.7 212.0,615.7 212.3,609.2 212.5,620.6 212.8,618.3 213.0,619.6 213.2,617.4 213.5,619.8 213.7,618.1 213.9,619.3 214.2,617.1 214.4,619.7 214.6,619.6 214.9,616.2 215.1,614.7 215.4,613.4 215.6,612.6 215.8,610.5 216.1,606.3 216.3,612.6 216.5,611.5 216.8,599.3 217.0,609.3 217.2,611.3 217.5,611.1 217.7,620.1 218.0,605.9 218.2,613.7 218.4,619.2 218.7,596.0 218.9,621.7 219.1,552.0 219.4,619.0 219.6,588.9 219.8,617.7 220.1,607.9 220.3,583.6 220.6,609.8 220.8,604.2 221.0,605.7 221.3,606.6 221.5,611.1 221.7,617.3 222.0,607.4 222.2,572.4 222.4,614.4 222.7,608.3 222.9,610.9 223.2,610.3 223.4,607.5 223.6,608.0 223.9,615.4 224.1,617.0 224.3,615.3 224.6,617.7 224.8,619.5 225.0,619.1 225.3,620.3 225.5,616.6 225.8,615.6 226.0,617.5 226.2,610.3 226.5,614.7 226.7,611.6 226.9,609.3 227.2,611.4 227.4,616.7 227.6,591.5 227.9,613.9 228.1,606.7 228.4,618.0 228.6,618.1 228.8,615.3 229.1,614.9 229.3,585.9 229.5,607.9 229.8,606.6 230.0,612.4 230.2,621.4 230.5,620.4 230.7,617.6 231.0,616.5 231.2,618.8 231.4,617.1 231.7,618.6 231.9,608.0 232.1,608.8 232.4,609.7 232.6,609.3 232.8,613.7 233.1,617.2 233.3,605.7 233.6,606.2 233.8,607.0 234.0,611.7 234.3,612.3 234.5,578.0 234.7,613.4 235.0,594.6 235.2,616.0 235.4,539.8 235.7,619.7 235.9,581.1 236.2,621.0 236.4,606.1 236.6,576.3 236.9,618.7 237.1,614.3 237.3,609.9 237.6,608.5 237.8,604.7 238.0,616.9 238.3,612.6 238.5,607.0 238.8,607.2 239.0,604.8 239.2,608.1 239.5,603.2 239.7,582.7 239.9,577.6 240.2,610.9 240.4,606.5 240.6,611.5 240.9,601.1 241.1,618.2 241.4,613.6 241.6,612.6 241.8,617.9 242.1,608.5 242.3,608.4 242.5,613.7 242.8,604.9 243.0,602.3 243.2,600.5 243.5,618.2 243.7,618.1 244.0,606.0 244.2,613.4 244.4,590.9 244.7,614.2 244.9,523.2 245.1,609.3 245.4,574.4 245.6,613.3 245.8,596.7 246.1,610.1 246.3,598.9 246.6,604.2 246.8,602.6 247.0,603.7 247.3,607.5 247.5,602.8 247.7,609.5 248.0,610.1 248.2,610.8 248.4,611.1 248.7,612.4 248.9,613.7 249.2,610.4 249.4,603.1 249.6,606.1 249.9,610.4 250.1,613.4 250.3,605.2 250.6,582.9 250.8,614.0 251.0,611.5 251.3,610.7 251.5,610.0 251.7,608.7 252.0,608.7 252.2,579.7 252.5,607.3 252.7,601.9 252.9,600.2 253.2,603.5 253.4,597.4 253.6,607.2 253.9,607.7 254.1,606.2 254.3,609.2 254.6,610.3 254.8,608.2 255.1,614.3 255.3,615.2 255.5,616.2 255.8,611.5 256.0,618.4 256.2,613.1 256.5,613.2 256.7,616.5 256.9,615.4 257.2,615.0 257.4,612.0 257.7,618.4 257.9,591.8 258.1,616.0 258.4,552.0 258.6,620.1 258.8,599.9 259.1,610.9 259.3,605.3 259.5,611.0 259.8,591.8 260.0,620.1 260.3,524.3 260.5,617.6 260.7,569.2 261.0,608.3 261.2,598.9 261.4,603.6 261.7,604.8 261.9,607.6 262.1,612.4 262.4,591.6 262.6,616.4 262.9,619.4 263.1,616.5 263.3,614.1 263.6,612.7 263.8,575.4 264.0,609.8 264.3,608.6 264.5,607.0 264.7,578.3 265.0,600.0 265.2,594.8 265.5,599.4 265.7,600.3 265.9,602.4 266.2,602.5 266.4,601.5 266.6,603.0 266.9,608.3 267.1,609.5 267.3,611.6 267.6,612.8 267.8,614.1 268.1,615.8 268.3,615.0 268.5,616.3 268.8,617.5 269.0,614.8 269.2,612.6 269.5,614.7 269.7,608.9 269.9,608.9 270.2,614.3 270.4,609.3 270.7,610.9 270.9,617.1 271.1,613.8 271.4,618.0 271.6,607.9 271.8,606.2 272.1,613.3 272.3,608.0 272.5,607.5 272.8,606.1 273.0,621.0 273.3,604.4 273.5,585.6 273.7,598.5 274.0,612.3 274.2,594.0 274.4,608.5 274.7,557.0 274.9,616.4 275.1,601.1 275.4,608.1 275.6,599.4 275.9,599.6 276.1,601.6 276.3,612.6 276.6,605.5 276.8,612.5 277.0,605.5 277.3,611.8 277.5,593.3 277.7,597.4 278.0,612.3 278.2,613.1 278.5,603.7 278.7,617.3 278.9,612.1 279.2,614.7 279.4,618.9 279.6,618.8 279.9,617.0 280.1,612.5 280.3,616.1 280.6,616.0 280.8,616.7 281.1,617.6 281.3,614.1 281.5,619.8 281.8,606.0 282.0,614.3 282.2,614.7 282.5,610.7 282.7,612.2 282.9,609.4 283.2,610.5 283.4,614.4 283.7,612.2 283.9,610.5 284.1,607.5 284.4,611.1 284.6,616.2 284.8,618.0 285.1,617.6 285.3,618.5 285.5,594.0 285.8,617.2 286.0,613.5 286.3,608.0 286.5,610.6 286.7,603.1 287.0,613.2 287.2,612.9 287.4,596.0 287.7,606.2 287.9,615.7 288.1,592.8 288.4,612.9 288.6,546.0 288.9,615.2 289.1,596.4 289.3,618.5 289.6,606.9 289.8,613.6 290.0,616.8 290.3,610.5 290.5,591.1 290.7,600.2 291.0,616.7 291.2,601.2 291.5,618.5 291.7,609.4 291.9,617.4 292.2,601.1 292.4,617.2 292.6,560.8 292.9,616.9 293.1,593.9 293.3,611.0 293.6,603.1 293.8,607.2 294.1,613.1 294.3,597.7 294.5,617.4 294.8,617.0 295.0,615.1 295.2,617.9 295.5,614.9 295.7,614.6 295.9,606.2 296.2,602.2 296.4,607.2 296.7,588.0 296.9,614.2 297.1,615.9 297.4,619.1 297.6,620.4 297.8,619.4 298.1,620.2 298.3,616.0 298.5,618.2 298.8,597.9 299.0,565.7 299.3,612.7 299.5,609.8 299.7,610.4 300.0,610.0 300.2,611.5 300.4,612.9 300.7,611.1 300.9,611.3 301.1,616.9 301.4,614.1 301.6,610.6 301.9,612.1 302.1,602.8 302.3,614.4 302.6,607.8 302.8,615.3 303.0,614.8 303.3,613.1 303.5,604.2 303.7,600.0 304.0,566.5 304.2,567.5 304.5,615.0 304.7,583.1 304.9,588.1 305.2,614.6 305.4,617.3 305.6,615.5 305.9,615.8 306.1,615.3 306.3,614.5 306.6,613.6 306.8,612.5 307.1,602.1 307.3,592.9 307.5,615.8 307.8,597.7 308.0,609.6 308.2,549.0 308.5,610.9 308.7,601.9 308.9,612.4 309.2,606.1 309.4,601.1 309.7,610.0 309.9,615.2 310.1,613.9 310.4,618.6 310.6,618.3 310.8,615.9 311.1,614.1 311.3,584.5 311.5,615.0 311.8,610.8 312.0,611.2 312.3,610.8 312.5,603.8 312.7,603.6 313.0,608.9 313.2,599.0 313.4,609.5 313.7,601.6 313.9,611.9 314.1,611.9 314.4,605.0 314.6,614.5 314.9,589.0 315.1,615.5 315.3,536.1 315.6,610.3 315.8,578.4 316.0,612.0 316.3,601.4 316.5,610.7 316.7,610.2 317.0,606.1 317.2,615.5 317.5,605.2 317.7,609.3 317.9,612.9 318.2,603.8 318.4,589.2 318.6,600.8 318.9,598.6 319.1,604.2 319.3,595.9 319.6,603.9 319.8,609.1 320.1,606.0 320.3,608.0 320.5,607.1 320.8,600.9 321.0,609.8 321.2,611.5 321.5,602.9 321.7,609.2 321.9,605.4 322.2,604.6 322.4,613.4 322.7,606.1 322.9,605.2 323.1,604.9 323.4,600.4 323.6,602.9 323.8,611.5 324.1,611.4 324.3,588.9 324.5,612.4 324.8,611.4 325.0,610.2 325.3,611.1 325.5,612.0 325.7,600.8 326.0,588.8 326.2,613.3 326.4,611.6 326.7,613.3 326.9,615.8 327.1,617.2 327.4,620.1 327.6,609.3 327.9,619.4 328.1,610.2 328.3,620.0 328.6,616.9 328.8,616.5 329.0,613.1 329.3,611.1 329.5,615.2 329.7,605.1 330.0,607.4 330.2,601.7 330.5,613.8 330.7,604.8 330.9,575.8 331.2,610.7 331.4,602.4 331.6,603.9 331.9,604.6 332.1,609.7 332.3,606.7 332.6,604.9 332.8,607.2 333.1,608.1 333.3,612.2 333.5,608.2 333.8,609.9 334.0,609.0 334.2,602.6 334.5,599.2 334.7,606.8 334.9,600.6 335.2,600.7 335.4,605.8 335.7,607.3 335.9,604.0 336.1,607.8 336.4,613.3 336.6,613.1 336.8,593.0 337.1,601.9 337.3,611.0 337.5,604.7 337.8,599.0 338.0,608.3 338.3,596.7 338.5,610.4 338.7,573.4 339.0,606.8 339.2,599.2 339.4,604.9 339.7,594.3 339.9,617.5 340.1,615.7 340.4,607.0 340.6,589.7 340.9,603.7 341.1,609.9 341.3,603.2 341.6,600.5 341.8,607.7 342.0,605.5 342.3,612.7 342.5,610.4 342.7,602.0 343.0,612.7 343.2,594.0 343.5,605.7 343.7,588.6 343.9,614.9 344.2,544.4 344.4,613.9 344.6,593.7 344.9,615.3 345.1,596.8 345.3,618.0 345.6,602.8 345.8,617.8 346.1,607.1 346.3,610.7 346.5,606.4 346.8,607.3 347.0,610.7 347.2,611.6 347.5,607.3 347.7,613.4 347.9,613.3 348.2,617.7 348.4,616.5 348.7,616.4 348.9,615.7 349.1,614.3 349.4,608.4 349.6,606.8 349.8,611.0 350.1,610.9 350.3,615.5 350.5,608.1 350.8,611.8 351.0,614.2 351.3,614.9 351.5,613.3 351.7,610.9 352.0,612.9 352.2,613.9 352.4,564.6 352.7,613.1 352.9,570.7 353.1,579.7 353.4,612.7 353.6,610.8 353.9,611.0 354.1,613.2 354.3,605.2 354.6,600.6 354.8,611.4 355.0,606.1 355.3,582.6 355.5,607.4 355.7,571.9 356.0,591.9 356.2,598.4 356.5,600.6 356.7,612.4 356.9,599.5 357.2,609.1 357.4,550.6 357.6,612.2 357.9,583.0 358.1,609.0 358.3,600.2 358.6,614.7 358.8,592.7 359.0,605.0 359.3,545.4 359.5,608.8 359.8,590.3 360.0,615.8 360.2,597.7 360.5,599.1 360.7,613.8 360.9,604.5 361.2,613.5 361.4,608.0 361.6,614.9 361.9,613.4 362.1,617.4 362.4,615.8 362.6,588.9 362.8,615.5 363.1,615.0 363.3,611.3 363.5,611.1 363.8,611.1 364.0,603.1 364.2,602.4 364.5,602.9 364.7,605.3 365.0,607.7 365.2,600.4 365.4,581.3 365.7,614.6 365.9,615.5 366.1,612.4 366.4,614.1 366.6,607.8 366.8,607.0 367.1,603.7 367.3,586.9 367.6,610.3 367.8,578.6 368.0,613.5 368.3,603.3 368.5,606.3 368.7,616.9 369.0,608.0 369.2,608.6 369.4,612.4 369.7,613.2 369.9,615.5 370.2,614.9 370.4,614.4 370.6,613.8 370.9,610.5 371.1,614.2 371.3,614.2 371.6,605.9 371.8,604.7 372.0,609.5 372.3,603.8 372.5,609.9 372.8,610.3 373.0,614.4 373.2,616.1 373.5,613.8 373.7,617.9 373.9,615.4 374.2,612.3 374.4,616.5 374.6,613.4 374.9,610.9 375.1,598.5 375.4,613.0 375.6,616.1 375.8,615.8 376.1,597.6 376.3,616.3 376.5,615.2 376.8,607.5 377.0,610.6 377.2,605.9 377.5,569.5 377.7,612.3 378.0,611.9 378.2,580.6 378.4,612.8 378.7,605.7 378.9,601.6 379.1,608.0 379.4,609.3 379.6,608.6 379.8,604.0 380.1,605.6 380.3,604.6 380.6,603.8 380.8,607.0 381.0,608.6 381.3,606.2 381.5,606.4 381.7,612.7 382.0,611.4 382.2,606.9 382.4,603.1 382.7,608.5 382.9,601.6 383.2,603.9 383.4,614.6 383.6,618.2 383.9,617.7 384.1,616.4 384.3,599.1 384.6,612.7 384.8,607.5 385.0,608.0 385.3,585.5 385.5,607.6 385.8,581.2 386.0,608.0 386.2,554.6 386.5,608.2 386.7,584.5 386.9,603.8 387.2,608.4 387.4,599.0 387.6,609.0 387.9,584.9 388.1,617.2 388.4,528.2 388.6,615.9 388.8,577.0 389.1,616.4 389.3,609.1 389.5,603.9 389.8,605.9 390.0,615.2 390.2,616.3 390.5,606.5 390.7,612.2 391.0,603.2 391.2,605.4 391.4,611.2 391.7,606.7 391.9,606.3 392.1,604.7 392.4,588.2 392.6,614.4 392.8,595.4 393.1,614.5 393.3,607.7 393.6,609.9 393.8,613.8 394.0,607.1 394.3,615.9 394.5,612.8 394.7,616.3 395.0,584.0 395.2,615.9 395.4,616.2 395.7,584.3 395.9,586.9 396.2,597.8 396.4,614.0 396.6,618.0 396.9,605.6 397.1,606.9 397.3,607.2 397.6,607.8 397.8,598.4 398.0,605.8 398.3,606.2 398.5,615.8 398.8,601.1 399.0,598.1 399.2,613.2 399.5,593.2 399.7,610.1 399.9,581.3 400.2,612.1 400.4,506.6 400.6,610.8 400.9,563.4 401.1,610.6 401.4,582.4 401.6,601.3 401.8,539.8 402.1,605.6 402.3,593.1 402.5,606.9 402.8,602.2 403.0,601.0 403.2,601.4 403.5,601.6 403.7,603.0 404.0,602.6 404.2,603.4 404.4,608.7 404.7,604.9 404.9,602.7 405.1,601.4 405.4,599.2 405.6,602.1 405.8,597.8 406.1,605.5 406.3,603.4 406.6,606.0 406.8,602.1 407.0,593.6 407.3,572.8 407.5,566.7 407.7,599.9 408.0,601.6 408.2,600.8 408.4,605.9 408.7,596.1 408.9,601.5 409.2,604.6 409.4,606.1 409.6,578.5 409.9,606.9 410.1,605.6 410.3,603.6 410.6,601.4 410.8,602.2 411.0,574.7 411.3,604.5 411.5,594.3 411.8,605.7 412.0,595.4 412.2,598.3 412.5,595.8 412.7,586.4 412.9,599.7 413.2,594.2 413.4,604.6 413.6,592.7 413.9,607.8 414.1,549.0 414.4,610.6 414.6,581.7 414.8,604.2 415.1,591.6 415.3,602.7 415.5,599.2 415.8,605.9 416.0,588.2 416.2,600.7 416.5,545.4 416.7,605.6 417.0,581.1 417.2,610.3 417.4,599.7 417.7,607.7 417.9,604.8 418.1,606.7 418.4,594.4 418.6,610.7 418.8,613.2 419.1,612.7 419.3,593.2 419.6,600.1 419.8,606.5 420.0,603.2 420.3,603.6 420.5,609.3 420.7,603.7 421.0,607.3 421.2,599.8 421.4,564.6 421.7,595.5 421.9,598.9 422.2,609.7 422.4,602.5 422.6,592.3 422.9,608.8 423.1,596.8 423.3,601.6 423.6,609.8 423.8,608.3 424.0,565.3 424.3,609.4 424.5,608.4 424.8,606.6 425.0,608.9 425.2,610.1 425.5,609.7 425.7,608.5 425.9,608.9 426.2,608.2 426.4,611.5 426.6,610.1 426.9,613.3 427.1,595.8 427.4,604.8 427.6,603.9 427.8,602.8 428.1,600.4 428.3,605.7 428.5,603.1 428.8,591.1 429.0,612.5 429.2,545.4 429.5,612.2 429.7,590.2 430.0,608.7 430.2,595.1 430.4,599.1 430.7,598.8 430.9,601.2 431.1,604.4 431.4,610.0 431.6,598.2 431.8,611.6 432.1,605.6 432.3,581.4 432.6,608.9 432.8,599.3 433.0,607.6 433.3,598.6 433.5,596.3 433.7,609.1 434.0,608.1 434.2,609.9 434.4,592.2 434.7,604.9 434.9,585.2 435.2,604.6 435.4,546.0 435.6,607.5 435.9,580.1 436.1,606.3 436.3,601.5 436.6,593.6 436.8,594.0 437.0,597.0 437.3,591.2 437.5,599.4 437.8,608.3 438.0,600.5 438.2,608.7 438.5,571.3 438.7,595.5 438.9,607.3 439.2,608.3 439.4,612.7 439.6,610.5 439.9,606.9 440.1,602.5 440.4,598.1 440.6,596.5 440.8,564.6 441.1,590.0 441.3,600.8 441.5,598.4 441.8,597.4 442.0,599.7 442.2,594.0 442.5,573.7 442.7,602.5 443.0,536.6 443.2,602.7 443.4,444.0 443.7,588.4 443.9,599.2 444.1,581.8 444.4,604.6 444.6,521.4 444.8,593.7 445.1,582.5 445.3,591.0 445.6,586.8 445.8,596.4 446.0,581.5 446.3,596.0 446.5,556.7 446.7,603.6 447.0,585.0 447.2,599.8 447.4,598.5 447.7,590.4 447.9,597.5 448.2,583.0 448.4,601.3 448.6,600.6 448.9,595.9 449.1,596.7 449.3,598.2 449.6,598.4 449.8,605.9 450.0,604.2 450.3,598.3 450.5,606.2 450.8,601.4 451.0,580.1 451.2,602.1 451.5,605.6 451.7,602.0 451.9,606.4 452.2,607.7 452.4,603.8 452.6,611.4 452.9,589.5 453.1,610.5 453.4,603.2 453.6,606.0 453.8,603.9 454.1,602.4 454.3,609.1 454.5,602.2 454.8,605.7 455.0,603.7 455.2,586.4 455.5,597.1 455.7,595.6 456.0,595.2 456.2,591.9 456.4,605.0 456.7,587.3 456.9,607.8 457.1,551.5 457.4,605.1 457.6,580.8 457.8,605.8 458.1,601.7 458.3,597.1 458.6,600.3 458.8,610.9 459.0,601.9 459.3,604.9 459.5,608.0 459.7,609.2 460.0,610.0 460.2,600.6 460.4,607.3 460.7,576.0 460.9,604.9 461.2,603.4 461.4,602.9 461.6,592.1 461.9,609.3 462.1,605.8 462.3,565.1 462.6,608.8 462.8,594.1 463.0,606.3 463.3,603.7 463.5,599.0 463.7,598.8 464.0,603.6 464.2,609.2 464.5,606.7 464.7,606.8 464.9,598.3 465.2,598.9 465.4,603.4 465.6,604.7 465.9,607.0 466.1,604.4 466.3,610.7 466.6,607.8 466.8,569.4 467.1,595.5 467.3,602.4 467.5,605.8 467.8,598.9 468.0,599.1 468.2,596.9 468.5,600.0 468.7,613.1 468.9,609.8 469.2,600.4 469.4,612.1 469.7,608.3 469.9,612.0 470.1,613.0 470.4,601.3 470.6,605.9 470.8,612.7 471.1,605.3 471.3,603.2 471.5,590.9 471.8,607.7 472.0,602.9 472.3,609.2 472.5,609.2 472.7,611.2 473.0,610.1 473.2,611.8 473.4,610.5 473.7,610.5 473.9,612.1 474.1,610.9 474.4,612.8 474.6,612.2 474.9,613.1 475.1,612.4 475.3,612.3 475.6,609.8 475.8,611.1 476.0,592.2 476.3,609.7 476.5,592.8 476.7,604.6 477.0,607.3 477.2,607.6 477.5,609.5 477.7,605.7 477.9,609.1 478.2,610.5 478.4,608.9 478.6,610.7 478.9,610.0 479.1,609.1 479.3,610.7 479.6,604.7 479.8,607.2 480.1,607.5 480.3,602.4 480.5,600.8 480.8,609.6 481.0,605.4 481.2,606.1 481.5,601.7 481.7,607.1 481.9,606.4 482.2,609.1 482.4,608.1 482.7,611.3 482.9,570.5 483.1,607.1 483.4,608.3 483.6,611.0 483.8,609.6 484.1,612.1 484.3,608.5 484.5,609.0 484.8,604.6 485.0,601.3 485.3,584.2 485.5,602.5 485.7,613.1 486.0,614.2 486.2,609.7 486.4,614.4 486.7,612.0 486.9,616.1 487.1,610.1 487.4,609.4 487.6,606.8 487.9,607.3 488.1,607.4 488.3,599.1 488.6,609.2 488.8,600.5 489.0,604.1 489.3,604.9 489.5,599.9 489.7,609.4 490.0,598.2 490.2,610.0 490.5,587.6 490.7,608.9 490.9,604.9 491.2,607.2 491.4,605.6 491.6,605.0 491.9,601.4 492.1,601.9 492.3,606.9 492.6,588.0 492.8,601.6 493.1,596.7 493.3,603.2 493.5,612.6 493.8,605.1 494.0,604.8 494.2,600.7 494.5,599.2 494.7,610.0 494.9,603.5 495.2,601.1 495.4,607.2 495.7,606.9 495.9,605.7 496.1,607.5 496.4,613.1 496.6,612.9 496.8,610.8 497.1,605.9 497.3,605.1 497.5,603.2 497.8,604.4 498.0,603.3 498.3,607.5 498.5,601.2 498.7,608.1 499.0,607.4 499.2,606.1 499.4,611.0 499.7,606.1 499.9,601.1 500.1,604.3 500.4,576.5 500.6,589.7 500.9,604.1 501.1,585.8 501.3,608.9 501.6,549.0 501.8,609.7 502.0,602.7 502.3,591.1 502.5,612.1 502.7,545.4 503.0,609.2 503.2,591.0 503.5,611.4 503.7,598.7 503.9,594.2 504.2,597.4 504.4,596.0 504.6,600.0 504.9,604.1 505.1,607.0 505.3,606.4 505.6,607.6 505.8,608.3 506.1,606.0 506.3,602.0 506.5,610.5 506.8,603.4 507.0,607.3 507.2,596.9 507.5,602.9 507.7,604.0 507.9,601.5 508.2,603.1 508.4,600.2 508.7,610.3 508.9,606.4 509.1,598.4 509.4,603.7 509.6,604.3 509.8,599.3 510.1,598.8 510.3,600.8 510.5,598.6 510.8,604.3 511.0,603.0 511.3,570.2 511.5,601.9 511.7,599.7 512.0,603.1 512.2,602.1 512.4,606.9 512.7,599.1 512.9,597.9 513.1,601.5 513.4,604.3 513.6,603.6 513.9,598.3 514.1,603.1 514.3,605.1 514.6,608.1 514.8,609.0 515.0,607.6 515.3,606.8 515.5,610.0 515.7,606.0 516.0,585.9 516.2,605.2 516.5,604.4 516.7,597.9 516.9,604.8 517.2,596.6 517.4,594.9 517.6,595.3 517.9,605.4 518.1,601.1 518.3,604.7 518.6,590.4 518.8,605.7 519.1,603.3 519.3,604.7 519.5,606.2 519.8,608.2 520.0,594.8 520.2,597.2 520.5,604.8 520.7,583.6 520.9,578.3 521.2,605.3 521.4,607.2 521.7,604.3 521.9,612.7 522.1,613.2 522.4,611.6 522.6,574.0 522.8,610.1 523.1,603.0 523.3,605.0 523.5,599.7 523.8,599.2 524.0,604.5 524.3,599.4 524.5,597.5 524.7,595.0 525.0,605.4 525.2,594.7 525.4,605.2 525.7,589.4 525.9,607.8 526.1,574.3 526.4,606.8 526.6,524.5 526.9,610.4 527.1,585.3 527.3,601.3 527.6,598.4 527.8,603.9 528.0,595.7 528.3,607.6 528.5,536.8 528.7,611.4 529.0,581.7 529.2,611.6 529.5,598.6 529.7,601.2 529.9,602.7 530.2,610.0 530.4,600.8 530.6,604.3 530.9,600.3 531.1,603.3 531.3,598.9 531.6,611.7 531.8,609.3 532.1,613.5 532.3,602.6 532.5,591.6 532.8,604.2 533.0,605.1 533.2,609.8 533.5,613.8 533.7,611.1 533.9,599.9 534.2,606.7 534.4,606.0 534.7,610.1 534.9,600.1 535.1,601.0 535.4,602.8 535.6,601.6 535.8,596.1 536.1,610.3 536.3,553.0 536.5,610.1 536.8,587.3 537.0,612.4 537.3,601.8 537.5,599.1 537.7,601.6 538.0,601.1 538.2,612.1 538.4,603.2 538.7,608.7 538.9,604.4 539.1,610.3 539.4,608.4 539.6,587.5 539.9,593.6 540.1,588.2 540.3,586.8 540.6,607.9 540.8,572.2 541.0,595.5 541.3,526.0 541.5,605.0 541.7,582.1 542.0,600.2 542.2,587.0 542.5,605.8 542.7,566.7 542.9,595.1 543.2,521.4 543.4,598.1 543.6,583.7 543.9,603.6 544.1,589.9 544.3,588.6 544.6,602.7 544.8,594.7 545.1,596.8 545.3,597.2 545.5,609.9 545.8,601.5 546.0,604.1 546.2,602.1 546.5,602.3 546.7,599.8 546.9,599.4 547.2,613.5 547.4,595.2 547.7,605.4 547.9,583.4 548.1,611.7 548.4,516.2 548.6,601.4 548.8,562.5 549.1,600.6 549.3,590.0 549.5,593.5 549.8,592.7 550.0,597.0 550.3,602.3 550.5,599.3 550.7,603.2 551.0,604.4 551.2,609.7 551.4,606.6 551.7,611.3 551.9,609.2 552.1,596.9 552.4,604.3 552.6,606.6 552.9,604.6 553.1,604.3 553.3,604.1 553.6,600.9 553.8,606.0 554.0,605.7 554.3,609.1 554.5,579.5 554.7,608.6 555.0,599.9 555.2,581.7 555.5,611.3 555.7,603.2 555.9,573.0 556.2,607.5 556.4,598.5 556.6,599.7 556.9,603.2 557.1,605.5 557.3,599.5 557.6,612.3 557.8,614.8 558.1,593.9 558.3,589.4 558.5,588.8 558.8,608.8 559.0,608.4 559.2,602.0 559.5,598.5 559.7,609.3 559.9,598.3 560.2,596.4 560.4,598.3 560.7,611.9 560.9,604.2 561.1,609.6 561.4,611.2 561.6,606.2 561.8,589.5 562.1,614.5 562.3,612.3 562.5,605.0 562.8,612.9 563.0,607.5 563.3,587.2 563.5,608.3 563.7,604.1 564.0,600.7 564.2,606.4 564.4,605.0 564.7,605.4 564.9,603.5 565.1,580.5 565.4,606.8 565.6,606.9 565.9,606.9 566.1,605.3 566.3,602.5 566.6,608.1 566.8,610.3 567.0,608.6 567.3,611.5 567.5,592.8 567.7,605.8 568.0,601.9 568.2,610.5 568.5,604.4 568.7,564.6 568.9,606.6 569.2,609.7 569.4,605.2 569.6,607.0 569.9,596.4 570.1,602.9 570.3,598.4 570.6,571.4 570.8,609.9 571.0,611.4 571.3,613.3 571.5,612.9 571.8,615.4 572.0,615.4 572.2,618.1 572.5,616.4 572.7,618.1 572.9,590.2 573.2,618.1 573.4,616.4 573.6,612.8 573.9,614.9 574.1,612.7 574.4,613.0 574.6,609.5 574.8,601.7 575.1,601.2 575.3,581.0 575.5,597.5 575.8,607.5 576.0,609.6 576.2,580.6 576.5,571.8 576.7,604.8 577.0,572.3 577.2,611.2 577.4,600.7 577.7,578.3 577.9,567.0 578.1,596.3 578.4,564.7 578.6,600.8 578.8,599.5 579.1,608.3 579.3,555.2 579.6,609.2 579.8,584.7 580.0,607.3 580.3,603.8 580.5,602.6 580.7,604.0 581.0,605.5 581.2,597.8 581.4,598.3 581.7,599.4 581.9,584.3 582.2,607.5 582.4,607.5 582.6,602.8 582.9,602.3 583.1,606.0 583.3,612.6 583.6,611.3 583.8,613.2 584.0,609.0 584.3,607.5 584.5,604.2 584.8,608.6 585.0,577.4 585.2,599.1 585.5,587.8 585.7,607.8 585.9,607.1 586.2,596.0 586.4,602.5 586.6,605.9 586.9,586.3 587.1,604.7 587.4,607.0 587.6,606.1 587.8,603.7 588.1,608.3 588.3,601.6 588.5,603.2 588.8,603.6 589.0,605.0 589.2,610.8 589.5,614.4 589.7,611.2 590.0,610.6 590.2,612.8 590.4,607.7 590.7,597.1 590.9,605.9 591.1,605.2 591.4,609.6 591.6,609.8 591.8,602.7 592.1,610.8 592.3,608.3 592.6,592.1 592.8,602.2 593.0,606.2 593.3,610.7 593.5,609.3 593.7,564.6 594.0,591.6 594.2,605.6 594.4,604.7 594.7,584.0 594.9,586.6 595.2,609.9 595.4,585.1 595.6,601.0 595.9,605.0 596.1,603.5 596.3,588.8 596.6,599.3 596.8,603.9 597.0,606.0 597.3,605.1 597.5,592.1 597.8,594.7 598.0,603.7 598.2,605.0 598.5,606.6 598.7,603.4 598.9,601.2 599.2,608.0 599.4,609.9 599.6,610.4 599.9,606.7 600.1,606.7 600.4,601.9 600.6,591.1 600.8,599.0 601.1,599.6 601.3,603.4 601.5,595.2 601.8,605.5 602.0,605.5 602.2,602.7 602.5,602.4 602.7,603.1 603.0,605.2 603.2,586.9 603.4,603.8 603.7,603.2 603.9,591.9 604.1,592.5 604.4,602.6 604.6,605.4 604.8,605.0 605.1,609.3 605.3,604.0 605.6,600.0 605.8,607.5 606.0,594.3 606.3,607.0 606.5,545.4 606.7,611.2 607.0,591.7 607.2,608.5 607.4,602.7 607.7,607.7 607.9,607.9 608.2,570.8 608.4,576.2 608.6,611.1 608.9,611.8 609.1,612.3 609.3,592.4 609.6,598.7 609.8,611.0 610.0,609.8 610.3,613.0 610.5,609.0 610.8,608.0 611.0,606.3 611.2,606.7 611.5,602.6 611.7,599.7 611.9,598.7 612.2,593.4 612.4,607.4 612.6,569.6 612.9,601.7 613.1,513.1 613.4,607.0 613.6,572.1 613.8,599.8 614.1,589.0 614.3,613.2 614.5,601.4 614.8,602.9 615.0,605.2 615.2,605.7 615.5,606.9 615.7,607.4 616.0,610.7 616.2,609.0 616.4,607.7 616.7,607.1 616.9,604.6 617.1,605.3 617.4,595.3 617.6,594.6 617.8,584.1 618.1,604.4 618.3,611.9 618.6,597.4 618.8,604.4 619.0,595.5 619.3,603.6 619.5,602.1 619.7,604.4 620.0,607.4 620.2,611.3 620.4,611.0 620.7,604.0 620.9,605.0 621.2,600.8 621.4,594.3 621.6,597.9 621.9,597.7 622.1,594.7 622.3,600.9 622.6,605.3 622.8,609.0 623.0,600.6 623.3,606.2 623.5,592.7 623.8,595.8 624.0,598.3 624.2,601.7 624.5,611.0 624.7,586.0 624.9,610.4 625.2,537.4 625.4,611.7 625.6,583.6 625.9,601.3 626.1,596.8 626.4,603.9 626.6,574.9 626.8,608.1 627.1,609.7 627.3,610.4 627.5,611.1 627.8,611.5 628.0,577.2 628.2,603.9 628.5,605.4 628.7,610.6 629.0,567.8 629.2,609.7 629.4,608.1 629.7,605.7 629.9,607.7 630.1,607.3 630.4,609.2 630.6,567.3 630.8,574.7 631.1,600.1 631.3,606.5 631.6,580.4 631.8,596.3 632.0,601.2 632.3,603.1 632.5,601.9 632.7,593.8 633.0,595.2 633.2,598.8 633.4,601.3 633.7,609.3 633.9,592.6 634.2,608.9 634.4,556.7 634.6,611.7 634.9,597.5 635.1,602.4 635.3,601.4 635.6,602.9 635.8,607.1 636.0,590.2 636.3,598.1 636.5,608.2 636.8,609.7 637.0,608.0 637.2,607.2 637.5,605.3 637.7,605.7 637.9,600.5 638.2,603.3 638.4,601.2 638.6,599.0 638.9,599.0 639.1,597.8 639.4,612.4 639.6,593.9 639.8,612.7 640.1,592.0 640.3,603.7 640.5,582.7 640.8,607.3 641.0,550.6 641.2,611.0 641.5,588.6 641.7,606.4 642.0,586.8 642.2,607.6 642.4,597.4 642.7,604.7 642.9,581.5 643.1,606.7 643.4,546.0 643.6,602.3 643.8,577.5 644.1,601.7 644.3,594.0 644.6,610.7 644.8,610.3 645.0,606.5 645.3,608.8 645.5,592.8 645.7,606.2 646.0,597.7 646.2,601.2 646.4,604.6 646.7,604.7 646.9,601.0 647.2,604.4 647.4,607.3 647.6,585.7 647.9,604.9 648.1,604.3 648.3,602.7 648.6,607.4 648.8,607.7 649.0,571.9 649.3,601.5 649.5,589.6 649.8,595.4 650.0,592.1 650.2,592.6 650.5,584.6 650.7,578.0 650.9,590.4 651.2,595.0 651.4,597.7 651.6,601.4 651.9,601.6 652.1,598.7 652.4,602.8 652.6,608.5 652.8,577.5 653.1,586.3 653.3,596.5 653.5,584.2 653.8,590.9 654.0,598.5 654.2,575.1 654.5,604.7 654.7,531.2 655.0,603.7 655.2,574.9 655.4,598.1 655.7,593.5 655.9,609.4 656.1,605.3 656.4,607.0 656.6,595.6 656.8,607.8 657.1,608.0 657.3,606.6 657.6,601.7 657.8,609.4 658.0,605.1 658.3,602.7 658.5,579.2 658.7,575.2 659.0,603.2 659.2,595.6 659.4,606.5 659.7,580.4 659.9,597.5 660.2,606.3 660.4,605.0 660.6,607.9 660.9,601.3 661.1,610.2 661.3,604.6 661.6,599.0 661.8,601.0 662.0,596.4 662.3,602.7 662.5,602.5 662.8,606.1 663.0,599.8 663.2,586.5 663.5,608.5 663.7,599.5 663.9,604.5 664.2,589.8 664.4,602.7 664.6,603.2 664.9,594.0 665.1,582.1 665.4,603.1 665.6,603.9 665.8,609.1 666.1,573.1 666.3,608.5 666.5,608.4 666.8,604.9 667.0,605.1 667.2,578.4 667.5,603.9 667.7,599.4 668.0,600.4 668.2,585.1 668.4,598.8 668.7,568.7 668.9,599.0 669.1,599.6 669.4,590.9 669.6,600.0 669.8,576.1 670.1,605.9 670.3,507.6 670.6,601.3 670.8,580.3 671.0,605.9 671.3,595.1 671.5,597.7 671.7,603.2 672.0,598.8 672.2,601.3 672.4,597.3 672.7,598.4 672.9,601.6 673.2,606.0 673.4,598.2 673.6,605.1 673.9,603.7 674.1,602.0 674.3,606.7 674.6,605.0 674.8,606.7 675.0,607.7 675.3,607.6 675.5,608.1 675.7,610.1 676.0,589.7 676.2,609.0 676.5,607.5 676.7,609.4 676.9,609.3 677.2,607.6 677.4,605.6 677.6,604.4 677.9,603.7 678.1,605.9 678.3,605.9 678.6,573.7 678.8,604.1 679.1,609.2 679.3,610.8 679.5,607.7 679.8,603.0 680.0,599.2 680.2,603.4 680.5,607.0 680.7,593.2 680.9,605.3 681.2,558.3 681.4,603.0 681.7,592.0 681.9,610.3 682.1,607.2 682.4,569.7 682.6,593.3 682.8,611.3 683.1,589.9 683.3,609.0 683.5,591.8 683.8,607.5 684.0,554.3 684.3,609.9 684.5,583.5 684.7,610.4 685.0,603.3 685.2,596.6 685.4,607.4 685.7,603.5 685.9,571.8 686.1,604.9 686.4,602.4 686.6,603.7 686.9,601.7 687.1,602.7 687.3,605.5 687.6,589.7 687.8,592.4 688.0,608.2 688.3,599.0 688.5,602.0 688.7,605.5 689.0,591.5 689.2,603.8 689.5,610.4 689.7,603.4 689.9,603.2 690.2,605.3 690.4,608.8 690.6,602.4 690.9,612.2 691.1,611.9 691.3,611.0 691.6,611.4 691.8,574.7 692.1,612.5 692.3,609.8 692.5,611.3 692.8,606.9 693.0,605.6 693.2,602.4 693.5,609.2 693.7,609.2 693.9,609.8 694.2,608.5 694.4,609.1 694.7,609.8 694.9,608.4 695.1,608.7 695.4,600.8 695.6,602.4 695.8,608.2 696.1,611.0 696.3,605.1 696.5,598.5 696.8,597.0 697.0,597.0 697.3,604.0 697.5,599.1 697.7,598.3 698.0,603.7 698.2,587.3 698.4,579.0 698.7,575.0 698.9,597.6 699.1,605.7 699.4,597.6 699.6,607.2 699.9,610.2 700.1,609.5 700.3,609.2 700.6,589.3 700.8,609.0 701.0,608.8 701.3,606.7 701.5,609.6 701.7,610.2 702.0,611.2 702.2,599.1 702.5,596.5 702.7,596.9 702.9,598.1 703.2,606.1 703.4,607.0 703.6,608.5 703.9,608.9 704.1,606.0 704.3,609.5 704.6,611.2 704.8,602.4 705.1,602.2 705.3,595.2 705.5,597.9 705.8,598.5 706.0,604.6 706.2,598.3 706.5,593.5 706.7,605.1 706.9,603.1 707.2,601.4 707.4,606.6 707.7,599.4 707.9,597.8 708.1,595.2 708.4,598.6 708.6,598.5 708.8,598.7 709.1,602.1 709.3,607.8 709.5,605.1 709.8,600.7 710.0,588.1 710.3,605.6 710.5,597.3 710.7,604.3 711.0,600.8 711.2,604.2 711.4,605.8 711.7,598.1 711.9,599.2 712.1,605.4 712.4,607.6 712.6,599.5 712.9,594.7 713.1,602.2 713.3,601.8 713.6,604.1 713.8,598.5 714.0,600.6 714.3,591.4 714.5,606.5 714.7,543.1 715.0,594.7 715.2,466.1 715.5,589.9 715.7,598.3 715.9,571.7 716.2,599.4 716.4,516.8 716.6,607.7 716.9,571.4 717.1,600.5 717.3,590.2 717.6,607.2 717.8,593.0 718.1,606.7 718.3,596.9 718.5,564.6 718.8,608.1 719.0,601.4 719.2,604.8 719.5,605.5 719.7,601.6 719.9,606.7 720.2,604.2 720.4,611.7 720.7,603.3 720.9,609.5 721.1,609.8 721.4,601.7 721.6,605.7 721.8,615.0 722.1,611.9 722.3,610.6 722.5,609.9 722.8,610.3 723.0,608.0 723.3,606.8 723.5,609.7 723.7,608.7 724.0,595.9 724.2,597.3 724.4,596.6 724.7,596.0 724.9,594.2 725.1,592.6 725.4,592.6 725.6,590.4 725.9,608.4 726.1,577.3 726.3,604.0 726.6,506.6 726.8,605.4 727.0,568.0 727.3,608.5 727.5,595.5 727.7,597.8 728.0,597.6 728.2,594.7 728.5,606.5 728.7,594.8 728.9,603.2 729.2,587.5 729.4,598.4 729.6,548.0 729.9,594.9 730.1,592.7 730.3,567.4 730.6,598.3 730.8,501.2 731.1,600.6 731.3,368.6 731.5,587.6 731.8,606.1 732.0,391.0 732.2,609.5 732.5,519.5 732.7,610.2 732.9,556.0 733.2,605.9 733.4,575.4 733.7,602.3 733.9,587.5 734.1,600.1 734.4,540.0 734.6,601.3 734.8,577.5 735.1,598.7 735.3,593.5 735.5,579.5 735.8,604.0 736.0,483.0 736.3,594.7 736.5,338.7 736.7,586.7 737.0,601.1 737.2,457.1 737.4,609.4 737.7,558.8 737.9,614.7 738.1,582.4 738.4,613.7 738.6,604.6 738.9,597.0 739.1,613.1 739.3,602.4 739.6,605.1 739.8,606.3 740.0,611.0 740.3,605.7 740.5,606.4 740.7,603.3 741.0,598.7 741.2,610.0 741.5,612.1 741.7,613.5 741.9,612.6 742.2,613.1 742.4,593.8 742.6,607.5 742.9,610.7 743.1,611.6 743.3,612.6 743.6,615.5 743.8,612.9 744.1,612.1 744.3,612.2 744.5,602.9 744.8,602.7 745.0,598.3 745.2,601.2 745.5,585.1 745.7,611.9 745.9,608.8 746.2,607.4 746.4,583.4 746.7,609.8 746.9,613.0 747.1,614.4 747.4,613.2 747.6,611.5 747.8,611.4 748.1,573.2 748.3,611.0 748.5,603.9 748.8,594.1 749.0,598.2 749.3,600.5 749.5,592.8 749.7,601.7 750.0,596.2 750.2,607.6 750.4,601.8 750.7,609.3 750.9,603.3 751.1,611.4 751.4,607.1 751.6,608.6 751.9,611.1 752.1,614.8 752.3,611.9 752.6,605.6 752.8,601.3 753.0,610.7 753.3,613.9 753.5,608.3 753.7,611.2 754.0,582.3 754.2,613.0 754.5,542.6 754.7,613.0 754.9,583.1 755.2,615.6 755.4,602.8 755.6,614.5 755.9,608.5 756.1,606.5 756.3,610.6 756.6,613.6 756.8,605.4 757.1,616.1 757.3,616.2 757.5,618.4 757.8,619.3 758.0,599.9 758.2,608.7 758.5,615.0 758.7,612.3 758.9,611.9 759.2,607.1 759.4,575.8 759.7,609.9 759.9,610.4 760.1,606.2 760.4,613.6 760.6,616.7 760.8,611.2 761.1,613.4 761.3,614.4 761.5,615.7 761.8,615.9 762.0,616.2 762.3,614.0 762.5,614.9 762.7,613.9 763.0,616.3 763.2,595.8 763.4,613.0 763.7,615.1 763.9,612.7 764.1,611.3 764.4,614.3 764.6,613.8 764.9,611.9 765.1,611.7 765.3,604.8 765.6,607.8 765.8,595.4 766.0,612.2 766.3,551.6 766.5,603.3 766.7,590.0 767.0,604.9 767.2,604.3 767.5,601.2 767.7,596.2 767.9,607.2 768.2,609.0 768.4,614.8 768.6,614.7 768.9,614.3 769.1,565.7 769.3,614.7 769.6,610.8 769.8,609.4 770.1,605.2 770.3,610.5 770.5,602.6 770.8,602.1 771.0,601.1 771.2,601.4 771.5,602.8 771.7,598.1 771.9,602.2 772.2,604.7 772.4,600.4 772.7,602.9 772.9,602.7 773.1,608.0 773.4,605.9 773.6,601.9 773.8,611.7 774.1,609.6 774.3,606.9 774.5,609.2 774.8,609.2 775.0,605.2 775.3,607.2 775.5,580.2 775.7,605.1 776.0,602.1 776.2,567.2 776.4,597.3 776.7,614.8 776.9,604.6 777.1,604.6 777.4,582.5 777.6,602.2 777.9,531.3 778.1,602.6 778.3,589.6 778.6,603.6 778.8,596.4 779.0,595.6 779.3,602.5 779.5,600.3 779.7,584.6 780.0,601.6 780.2,600.6 780.5,603.4 780.7,613.8 780.9,577.3 781.2,602.3 781.4,513.3 781.6,609.0 781.9,572.5 782.1,608.9 782.3,594.6 782.6,602.1 782.8,599.8 783.0,601.7 783.3,586.3 783.5,607.1 783.8,526.8 784.0,612.7 784.2,585.1 784.5,611.0 784.7,597.9 784.9,603.9 785.2,602.4 785.4,610.8 785.6,605.2 785.9,608.3 786.1,608.2 786.4,604.5 786.6,605.9 786.8,607.9 787.1,611.5 787.3,608.5 787.5,612.2 787.8,589.1 788.0,604.0 788.2,556.0 788.5,612.8 788.7,598.4 789.0,612.3 789.2,603.1 789.4,602.3 789.7,604.7 789.9,596.5 790.1,570.2 790.4,598.2 790.6,601.1 790.8,604.4 791.1,600.0 791.3,604.9 791.6,605.0 791.8,607.7 792.0,609.4 792.3,609.3 792.5,612.7 792.7,613.4 793.0,615.0 793.2,613.5 793.4,607.3 793.7,611.0 793.9,610.9 794.2,613.9 794.4,615.7 794.6,615.2 794.9,588.4 795.1,607.9 795.3,608.9 795.6,577.1 795.8,613.8 796.0,610.2 796.3,611.8 796.5,612.5 796.8,609.4 797.0,612.6 797.2,591.8 797.5,610.3 797.7,542.6 797.9,611.6 798.2,595.4 798.4,613.2 798.6,604.8 798.9,614.2 799.1,615.6 799.4,615.8 799.6,614.6 799.8,617.0 800.1,617.0 800.3,614.9 800.5,614.1 800.8,608.6 801.0,610.4 801.2,610.8 801.5,604.8 801.7,614.3 802.0,596.5 802.2,604.6 802.4,606.4 802.7,592.8 802.9,607.8 803.1,578.3 803.4,610.7 803.6,607.9 803.8,610.1 804.1,612.9 804.3,605.2 804.6,608.4 804.8,598.2 805.0,599.1 805.3,608.1 805.5,609.6 805.7,597.1 806.0,598.1 806.2,598.4 806.4,604.7 806.7,613.1 806.9,591.6 807.2,615.8 807.4,556.0 807.6,610.3 807.9,589.3 808.1,612.1 808.3,595.7 808.6,613.1 808.8,594.4 809.0,596.0 809.3,599.5 809.5,600.6 809.8,598.4 810.0,603.9 810.2,609.4 810.5,608.4 810.7,615.4 810.9,612.4 811.2,613.2 811.4,604.8 811.6,615.4 811.9,607.4 812.1,610.0 812.4,603.2 812.6,606.0 812.8,612.8 813.1,613.5 813.3,612.6 813.5,612.7 813.8,613.0 814.0,612.8 814.2,613.5 814.5,611.5 814.7,610.9 815.0,604.4 815.2,604.7 815.4,607.3 815.7,609.6 815.9,618.2 816.1,603.1 816.4,611.4 816.6,605.2 816.8,605.1 817.1,602.2 817.3,603.1 817.6,604.6 817.8,583.0 818.0,596.1 818.3,609.4 818.5,600.9 818.7,565.5 819.0,604.6 819.2,606.8 819.4,603.7 819.7,611.8 819.9,605.1 820.2,612.1 820.4,616.4 820.6,614.2 820.9,608.8 821.1,612.5 821.3,600.8 821.6,607.5 821.8,612.4 822.0,608.0 822.3,577.2 822.5,600.4 822.8,609.0 823.0,605.8 823.2,599.6 823.5,608.9 823.7,605.7 823.9,612.0 824.2,605.9 824.4,586.2 824.6,613.4 824.9,611.1 825.1,611.8 825.4,612.9 825.6,607.0 825.8,610.1 826.1,610.0 826.3,610.7 826.5,617.4 826.8,568.3 827.0,617.5 827.2,618.5 827.5,616.6 827.7,613.7 828.0,607.1 828.2,608.6 828.4,614.8 828.7,618.8 828.9,613.3 829.1,611.5 829.4,607.2 829.6,606.7 829.8,603.9 830.1,602.4 830.3,599.0 830.6,616.2 830.8,581.2 831.0,612.4 831.3,537.2 831.5,604.1 831.7,589.5 832.0,604.1 832.2,597.5 832.4,606.4 832.7,603.7 832.9,607.1 833.2,609.2 833.4,608.1 833.6,612.8 833.9,612.2 834.1,613.3 834.3,616.5 834.6,610.7 834.8,604.8 835.0,617.3 835.3,620.7 835.5,619.6 835.8,603.6 836.0,615.3 836.2,617.6 836.5,605.7 836.7,612.5 836.9,605.4 837.2,605.0 837.4,602.6 837.6,597.8 837.9,606.7 838.1,583.8 838.4,616.2 838.6,520.0 838.8,615.1 839.1,579.4 839.3,612.9 839.5,586.9 839.8,613.9 840.0,549.3 840.2,612.3 840.5,590.8 840.7,610.2 841.0,605.2 841.2,605.2 841.4,607.6 841.7,576.9 841.9,568.4 842.1,614.2 842.4,607.3 842.6,610.8 842.8,603.4 843.1,612.5 843.3,605.6 843.6,607.2 843.8,601.4 844.0,607.9 844.3,613.2 844.5,616.0 844.7,614.0 845.0,615.4 845.2,620.5 845.4,619.1 845.7,619.3 845.9,617.6 846.2,619.8 846.4,618.3 846.6,609.6 846.9,608.3 847.1,608.8 847.3,611.4 847.6,606.7 847.8,618.9 848.0,609.0 848.3,610.6 848.5,611.6 848.8,608.4 849.0,614.4 849.2,616.3 849.5,613.7 849.7,611.1 849.9,612.0 850.2,613.8 850.4,613.0 850.6,609.3 850.9,579.1 851.1,606.5 851.4,605.3 851.6,611.7 851.8,612.7 852.1,602.4 852.3,617.0 852.5,553.0 852.8,618.0 853.0,582.2 853.2,619.8 853.5,608.7 853.7,612.8 854.0,606.3 854.2,614.1 854.4,604.6 854.7,600.6 854.9,589.7 855.1,613.0 855.4,604.2 855.6,605.5 855.8,613.9 856.1,606.0 856.3,605.1 856.6,609.3 856.8,613.8 857.0,602.9 857.3,615.3 857.5,597.1 857.7,617.8 858.0,614.8 858.2,611.1 858.4,601.7 858.7,608.2 858.9,611.7 859.2,605.1 859.4,604.3 859.6,607.6 859.9,616.4 860.1,614.4 860.3,613.2 860.6,611.2 860.8,614.8 861.0,606.1 861.3,600.1 861.5,612.8 861.8,607.5 862.0,614.8 862.2,586.9 862.5,608.4 862.7,606.6 862.9,614.6 863.2,607.7 863.4,614.3 863.6,608.0 863.9,603.6 864.1,601.0 864.4,609.5 864.6,583.3 864.8,610.6 865.1,585.5 865.3,589.1 865.5,610.0 865.8,603.0 866.0,613.5 866.2,614.4 866.5,602.3 866.7,611.7 867.0,610.8 867.2,614.8 867.4,613.7 867.7,618.4 867.9,616.7 868.1,618.5 868.4,604.1 868.6,610.8 868.8,615.4 869.1,607.6 869.3,605.9 869.6,591.1 869.8,613.6 870.0,553.0 870.3,608.1 870.5,589.1 870.7,616.8 871.0,609.1 871.2,611.0 871.4,612.9 871.7,618.2 871.9,608.8 872.2,609.5 872.4,612.8 872.6,614.4 872.9,610.9 873.1,571.8 873.3,614.6 873.6,611.0 873.8,616.6 874.0,617.2 874.3,615.1 874.5,617.3 874.8,600.3 875.0,612.9 875.2,614.8 875.5,614.5 875.7,612.1 875.9,615.7 876.2,618.6 876.4,618.1 876.6,616.4 876.9,575.4 877.1,582.6 877.4,613.6 877.6,614.7 877.8,610.8 878.1,602.8 878.3,598.8 878.5,601.2 878.8,602.9 879.0,608.5 879.2,607.1 879.5,610.1 879.7,611.7 880.0,605.5 880.2,602.2 880.4,608.0 880.7,607.6 880.9,604.9 881.1,604.3 881.4,619.9 881.6,602.3 881.8,614.8 882.1,589.2 882.3,614.7 882.6,550.7 882.8,614.0 883.0,593.1 883.3,617.6 883.5,601.9 883.7,608.1 884.0,621.6 884.2,605.8 884.4,611.5 884.7,580.9 884.9,606.9 885.2,614.8 885.4,614.2 885.6,616.0 885.9,616.3 886.1,615.7 886.3,615.5 886.6,617.1 886.8,616.4 887.0,613.1 887.3,606.8 887.5,609.1 887.8,616.0 888.0,604.9 888.2,567.8 888.5,608.9 888.7,608.8 888.9,615.3 889.2,603.3 889.4,606.9 889.6,615.3 889.9,615.2 890.1,615.6 890.3,614.3 890.6,598.7 890.8,613.9 891.1,589.5 891.3,599.5 891.5,609.9 891.8,608.7 892.0,601.0 892.2,612.8 892.5,607.7 892.7,604.3 892.9,612.4 893.2,612.7 893.4,567.7 893.7,606.7 893.9,614.6 894.1,616.8 894.4,612.7 894.6,611.2 894.8,610.7 895.1,606.8 895.3,604.2 895.5,618.7 895.8,617.1 896.0,619.0 896.3,617.3 896.5,611.8 896.7,616.8 897.0,586.8 897.2,604.7 897.4,551.6 897.7,616.8 897.9,591.7 898.1,613.1 898.4,605.5 898.6,612.6 898.9,606.0 899.1,609.7 899.3,612.9 899.6,611.2 899.8,611.3 900.0,614.0 900.3,614.3 900.5,615.6 900.7,610.5 901.0,609.8 901.2,606.7 901.5,612.3 901.7,610.7 901.9,612.2 902.2,611.2 902.4,615.4 902.6,617.1 902.9,615.0 903.1,586.4 903.3,616.4 903.6,616.7 903.8,616.7 904.1,604.6 904.3,612.0 904.5,616.2 904.8,612.4 905.0,616.7 905.2,613.8 905.5,615.8 905.7,615.3 905.9,618.4 906.2,618.3 906.4,616.3 906.7,569.6 906.9,614.8 907.1,611.0 907.4,615.9 907.6,601.6 907.8,595.3 908.1,610.5 908.3,617.8 908.5,608.5 908.8,614.0 909.0,614.7 909.3,621.0 909.5,620.0 909.7,622.1 910.0,621.8 910.2,621.8 910.4,621.2 910.7,623.0 910.9,620.1 911.1,611.1 911.4,619.6 911.6,612.7 911.9,610.6 912.1,622.0 912.3,616.7 912.6,616.8 912.8,581.5 913.0,611.0 913.3,616.3 913.5,607.2 913.7,619.6 914.0,605.9 914.2,612.6 914.5,617.9 914.7,614.9 914.9,607.2 915.2,619.4 915.4,619.1 915.6,616.1 915.9,616.6 916.1,613.5 916.3,613.4 916.6,615.3 916.8,608.4 917.1,608.5 917.3,612.6 917.5,605.4 917.8,621.2 918.0,620.0 918.2,619.7 918.5,615.6 918.7,617.6 918.9,610.9 919.2,611.5 919.4,617.9 919.7,608.2 919.9,597.9 920.1,614.2 920.4,620.8 920.6,592.9 920.8,621.0 921.1,620.0 921.3,615.8 921.5,610.1 921.8,611.8 922.0,604.9 922.3,602.2 922.5,606.8 922.7,594.8 923.0,600.1 923.2,592.1 923.4,603.6 923.7,604.0 923.9,610.7 924.1,615.5 924.4,612.4 924.6,615.1 924.9,615.3 925.1,613.3 925.3,614.9 925.6,613.1 925.8,617.1 926.0,614.6 926.3,604.3 926.5,614.4 926.7,609.6 927.0,616.3 927.2,614.1 927.5,612.8 927.7,608.4 927.9,606.7 928.2,609.9 928.4,606.7 928.6,609.9 928.9,567.4 929.1,581.1 929.3,615.3 929.6,613.7 929.8,617.0 930.1,616.2 930.3,602.8 930.5,612.7 930.8,604.3 931.0,614.9 931.2,613.7 931.5,615.4 931.7,613.5 931.9,614.9 932.2,613.3 932.4,609.9 932.7,613.8 932.9,612.9 933.1,611.0 933.4,588.0 933.6,581.6 933.8,614.2 934.1,610.9 934.3,607.5 934.5,607.9 934.8,603.3 935.0,612.0 935.3,610.9 935.5,612.5 935.7,604.2 936.0,615.3 936.2,580.6 936.4,616.6 936.7,537.2 936.9,609.2 937.1,594.1 937.4,605.0 937.6,602.0 937.9,610.1 938.1,610.7 938.3,607.4 938.6,607.2 938.8,587.7 939.0,602.2 939.3,609.4 939.5,615.4 939.7,611.8 940.0,596.5 940.2,610.8 940.5,602.8 940.7,600.8 940.9,610.1 941.2,606.9 941.4,611.1" fill="none" stroke="#82fc26" stroke-width="1.5" stroke-linejoin="bevel"/><polyline points="90.8,615.4 91.0,612.4 91.3,615.9 91.5,617.8 91.7,616.7 92.0,616.1 92.2,604.9 92.5,616.7 92.7,612.5 92.9,610.3 93.2,615.6 93.4,617.7 93.6,616.9 93.9,608.0 94.1,613.3 94.3,606.6 94.6,606.6 94.8,606.7 95.1,606.7 95.3,613.2 95.5,613.2 95.8,608.2 96.0,612.7 96.2,609.2 96.5,617.5 96.7,612.8 96.9,622.8 97.2,611.3 97.4,622.1 97.7,621.5 97.9,617.5 98.1,615.9 98.4,614.0 98.6,607.6 98.8,607.0 99.1,607.8 99.3,605.8 99.5,610.4 99.8,614.3 100.0,615.4 100.3,606.0 100.5,611.5 100.7,611.0 101.0,613.6 101.2,615.9 101.4,620.9 101.7,617.7 101.9,619.2 102.1,606.5 102.4,619.0 102.6,606.6 102.9,617.1 103.1,606.7 103.3,618.7 103.6,606.8 103.8,620.5 104.0,606.5 104.3,614.5 104.5,609.3 104.7,608.0 105.0,606.7 105.2,610.4 105.5,613.8 105.7,607.9 105.9,605.0 106.2,613.3 106.4,610.6 106.6,605.0 106.9,609.2 107.1,611.5 107.3,606.8 107.6,616.7 107.8,613.3 108.1,614.5 108.3,616.2 108.5,606.8 108.8,609.4 109.0,612.4 109.2,607.6 109.5,610.8 109.7,608.4 109.9,610.6 110.2,613.0 110.4,607.9 110.7,620.7 110.9,620.9 111.1,619.7 111.4,617.9 111.6,616.2 111.8,614.7 112.1,607.6 112.3,608.1 112.5,608.1 112.8,607.3 113.0,607.8 113.3,607.1 113.5,607.0 113.7,606.9 114.0,606.8 114.2,606.7 114.4,607.0 114.7,606.2 114.9,606.0 115.1,605.7 115.4,612.8 115.6,607.2 115.9,612.3 116.1,606.5 116.3,605.9 116.6,605.7 116.8,608.8 117.0,604.3 117.3,606.0 117.5,603.2 117.7,603.7 118.0,615.6 118.2,599.5 118.5,598.7 118.7,617.2 118.9,591.6 119.2,615.1 119.4,588.1 119.6,606.8 119.9,593.4 120.1,617.3 120.3,602.1 120.6,602.4 120.8,607.0 121.1,605.0 121.3,610.1 121.5,618.8 121.8,608.3 122.0,613.3 122.2,618.3 122.5,612.7 122.7,615.3 122.9,609.1 123.2,615.1 123.4,606.9 123.7,612.4 123.9,613.1 124.1,609.4 124.4,605.2 124.6,614.3 124.8,610.7 125.1,604.0 125.3,603.8 125.5,609.5 125.8,610.5 126.0,605.8 126.3,609.1 126.5,612.7 126.7,602.7 127.0,605.1 127.2,606.0 127.4,615.8 127.7,604.7 127.9,610.7 128.1,612.9 128.4,617.7 128.6,617.4 128.9,618.9 129.1,614.2 129.3,605.9 129.6,617.5 129.8,606.6 130.0,610.8 130.3,606.5 130.5,607.0 130.7,613.0 131.0,613.0 131.2,607.1 131.5,609.5 131.7,615.9 131.9,616.1 132.2,612.9 132.4,611.8 132.6,613.7 132.9,606.0 133.1,604.0 133.3,618.3 133.6,615.4 133.8,610.7 134.1,597.4 134.3,600.5 134.5,606.3 134.8,614.1 135.0,602.0 135.2,613.8 135.5,588.1 135.7,608.7 135.9,591.8 136.2,612.5 136.4,595.3 136.7,616.6 136.9,604.3 137.1,602.1 137.4,606.6 137.6,604.1 137.8,603.9 138.1,603.9 138.3,608.5 138.5,613.9 138.8,603.3 139.0,610.9 139.3,611.2 139.5,607.0 139.7,602.5 140.0,602.6 140.2,612.5 140.4,612.9 140.7,603.2 140.9,609.2 141.1,611.7 141.4,605.1 141.6,615.8 141.9,617.2 142.1,617.3 142.3,618.1 142.6,617.1 142.8,617.0 143.0,605.0 143.3,605.1 143.5,608.6 143.7,605.6 144.0,612.8 144.2,615.8 144.4,605.3 144.7,612.3 144.9,605.0 145.2,606.7 145.4,608.3 145.6,612.4 145.9,610.1 146.1,610.7 146.3,606.5 146.6,604.8 146.8,606.0 147.0,605.3 147.3,605.6 147.5,605.9 147.8,606.2 148.0,608.7 148.2,609.2 148.5,611.2 148.7,614.8 148.9,614.9 149.2,607.5 149.4,606.6 149.6,614.3 149.9,610.8 150.1,606.3 150.4,609.8 150.6,610.8 150.8,608.8 151.1,609.5 151.3,609.2 151.5,608.4 151.8,606.6 152.0,606.7 152.2,612.0 152.5,611.6 152.7,612.3 153.0,610.4 153.2,608.5 153.4,607.3 153.7,606.5 153.9,612.8 154.1,606.6 154.4,616.5 154.6,616.9 154.8,620.3 155.1,618.7 155.3,608.8 155.6,613.7 155.8,612.7 156.0,610.7 156.3,616.3 156.5,615.6 156.7,615.2 157.0,617.6 157.2,604.6 157.4,601.9 157.7,602.3 157.9,602.3 158.2,608.7 158.4,619.6 158.6,591.8 158.9,614.9 159.1,588.0 159.3,613.9 159.6,597.6 159.8,617.0 160.0,598.2 160.3,597.4 160.5,599.5 160.8,619.5 161.0,603.4 161.2,605.9 161.5,614.7 161.7,608.3 161.9,619.5 162.2,610.8 162.4,605.9 162.6,612.3 162.9,617.2 163.1,612.9 163.4,612.6 163.6,606.9 163.8,605.5 164.1,607.7 164.3,605.5 164.5,605.6 164.8,605.6 165.0,605.6 165.2,605.6 165.5,605.6 165.7,605.5 166.0,605.5 166.2,609.9 166.4,605.9 166.7,612.3 166.9,608.5 167.1,605.2 167.4,605.1 167.6,606.9 167.8,608.1 168.1,614.4 168.3,612.1 168.6,608.5 168.8,617.2 169.0,603.5 169.3,615.6 169.5,614.7 169.7,613.1 170.0,613.4 170.2,611.6 170.4,618.9 170.7,607.9 170.9,615.5 171.2,613.4 171.4,615.8 171.6,617.6 171.9,608.8 172.1,614.5 172.3,610.8 172.6,609.7 172.8,604.7 173.0,612.9 173.3,598.0 173.5,615.5 173.8,591.2 174.0,614.7 174.2,585.3 174.5,611.1 174.7,591.8 174.9,614.3 175.2,598.0 175.4,604.5 175.6,614.0 175.9,605.9 176.1,606.3 176.4,613.6 176.6,606.7 176.8,615.6 177.1,611.8 177.3,610.6 177.5,607.6 177.8,608.3 178.0,608.1 178.2,612.3 178.5,608.5 178.7,607.8 179.0,617.8 179.2,607.5 179.4,612.0 179.7,611.1 179.9,609.5 180.1,609.1 180.4,613.9 180.6,611.8 180.8,616.1 181.1,617.5 181.3,617.1 181.6,616.3 181.8,614.5 182.0,614.4 182.3,605.6 182.5,614.3 182.7,616.4 183.0,605.0 183.2,616.0 183.4,612.2 183.7,607.8 183.9,608.8 184.2,615.2 184.4,612.7 184.6,612.6 184.9,614.7 185.1,610.1 185.3,610.6 185.6,607.9 185.8,607.2 186.0,612.2 186.3,615.3 186.5,613.1 186.8,607.9 187.0,607.6 187.2,607.3 187.5,612.8 187.7,610.3 187.9,609.3 188.2,615.0 188.4,609.9 188.6,610.6 188.9,618.1 189.1,605.3 189.4,614.5 189.6,605.3 189.8,617.3 190.1,605.4 190.3,611.4 190.5,608.4 190.8,611.7 191.0,606.8 191.2,609.5 191.5,611.9 191.7,613.4 192.0,607.2 192.2,607.6 192.4,608.0 192.7,610.6 192.9,621.6 193.1,620.9 193.4,615.5 193.6,620.7 193.8,613.8 194.1,608.8 194.3,614.1 194.6,609.7 194.8,610.5 195.0,616.7 195.3,616.4 195.5,618.2 195.7,621.4 196.0,620.1 196.2,620.2 196.4,617.9 196.7,610.6 196.9,613.5 197.2,612.3 197.4,607.8 197.6,605.5 197.9,608.4 198.1,604.4 198.3,615.5 198.6,614.3 198.8,609.9 199.0,604.3 199.3,613.8 199.5,612.0 199.8,609.9 200.0,604.1 200.2,609.6 200.5,603.9 200.7,614.1 200.9,610.6 201.2,610.3 201.4,612.3 201.6,617.1 201.9,616.9 202.1,617.9 202.4,611.9 202.6,616.3 202.8,604.1 203.1,613.4 203.3,604.3 203.5,610.6 203.8,604.6 204.0,618.5 204.2,607.9 204.5,615.7 204.7,614.3 205.0,612.7 205.2,612.6 205.4,611.6 205.7,612.7 205.9,612.7 206.1,617.5 206.4,618.4 206.6,615.1 206.8,605.1 207.1,612.9 207.3,611.8 207.6,611.0 207.8,612.6 208.0,605.4 208.3,611.2 208.5,614.7 208.7,604.7 209.0,606.9 209.2,609.4 209.4,609.8 209.7,603.7 209.9,617.4 210.2,611.4 210.4,604.4 210.6,607.8 210.9,611.1 211.1,618.7 211.3,615.8 211.6,618.4 211.8,610.7 212.0,615.7 212.3,609.2 212.5,620.6 212.8,618.3 213.0,619.6 213.2,617.4 213.5,619.8 213.7,618.1 213.9,619.3 214.2,617.1 214.4,619.7 214.6,619.6 214.9,616.2 215.1,614.7 215.4,613.4 215.6,612.6 215.8,610.5 216.1,606.3 216.3,612.6 216.5,611.5 216.8,605.3 217.0,609.3 217.2,611.3 217.5,611.1 217.7,620.1 218.0,607.6 218.2,613.7 218.4,619.2 218.7,608.9 218.9,621.7 219.1,607.8 219.4,619.0 219.6,606.5 219.8,617.7 220.1,607.9 220.3,604.4 220.6,609.8 220.8,604.2 221.0,605.7 221.3,606.6 221.5,611.1 221.7,617.3 222.0,607.4 222.2,605.8 222.4,614.4 222.7,608.3 222.9,610.9 223.2,610.3 223.4,607.5 223.6,608.0 223.9,615.4 224.1,617.0 224.3,615.3 224.6,617.7 224.8,619.5 225.0,619.1 225.3,620.3 225.5,616.6 225.8,615.6 226.0,617.5 226.2,610.3 226.5,614.7 226.7,611.6 226.9,609.3 227.2,611.4 227.4,616.7 227.6,602.4 227.9,613.9 228.1,606.7 228.4,618.0 228.6,618.1 228.8,615.3 229.1,614.9 229.3,607.2 229.5,607.9 229.8,607.3 230.0,612.4 230.2,621.4 230.5,620.4 230.7,617.6 231.0,616.5 231.2,618.8 231.4,617.1 231.7,618.6 231.9,608.0 232.1,608.8 232.4,609.7 232.6,609.3 232.8,613.7 233.1,617.2 233.3,605.7 233.6,606.2 233.8,607.0 234.0,611.7 234.3,612.3 234.5,604.7 234.7,613.4 235.0,605.9 235.2,616.0 235.4,607.1 235.7,619.7 235.9,607.9 236.2,621.0 236.4,607.6 236.6,607.4 236.9,618.7 237.1,614.3 237.3,609.9 237.6,608.5 237.8,606.7 238.0,616.9 238.3,612.6 238.5,607.0 238.8,607.2 239.0,605.6 239.2,608.1 239.5,605.2 239.7,604.9 239.9,604.7 240.2,610.9 240.4,606.5 240.6,611.5 240.9,604.7 241.1,618.2 241.4,613.6 241.6,612.6 241.8,617.9 242.1,608.5 242.3,608.4 242.5,613.7 242.8,604.9 243.0,602.3 243.2,600.5 243.5,618.2 243.7,618.1 244.0,606.0 244.2,613.4 244.4,590.9 244.7,614.2 244.9,586.5 245.1,609.3 245.4,590.6 245.6,613.3 245.8,596.7 246.1,610.1 246.3,598.9 246.6,604.2 246.8,602.6 247.0,603.7 247.3,607.5 247.5,603.9 247.7,609.5 248.0,610.1 248.2,610.8 248.4,611.1 248.7,612.4 248.9,613.7 249.2,610.4 249.4,603.1 249.6,606.1 249.9,610.4 250.1,613.4 250.3,605.2 250.6,603.5 250.8,614.0 251.0,611.5 251.3,610.7 251.5,610.0 251.7,608.7 252.0,608.7 252.2,604.2 252.5,607.3 252.7,604.4 252.9,604.6 253.2,604.9 253.4,605.2 253.6,607.2 253.9,607.7 254.1,606.2 254.3,609.2 254.6,610.3 254.8,608.2 255.1,614.3 255.3,615.2 255.5,616.2 255.8,611.5 256.0,618.4 256.2,613.1 256.5,613.2 256.7,616.5 256.9,615.4 257.2,615.0 257.4,612.0 257.7,618.4 257.9,608.2 258.1,616.0 258.4,608.7 258.6,620.1 258.8,608.5 259.1,610.9 259.3,605.3 259.5,611.0 259.8,596.3 260.0,620.1 260.3,588.9 260.5,617.6 260.7,593.9 261.0,608.3 261.2,598.9 261.4,603.6 261.7,604.8 261.9,607.6 262.1,612.4 262.4,606.8 262.6,616.4 262.9,619.4 263.1,616.5 263.3,614.1 263.6,612.7 263.8,608.7 264.0,609.8 264.3,608.6 264.5,607.0 264.7,606.2 265.0,605.5 265.2,604.9 265.5,604.3 265.7,603.8 265.9,603.6 266.2,603.3 266.4,603.1 266.6,603.0 266.9,608.3 267.1,609.5 267.3,611.6 267.6,612.8 267.8,614.1 268.1,615.8 268.3,615.0 268.5,616.3 268.8,617.5 269.0,614.8 269.2,612.6 269.5,614.7 269.7,608.9 269.9,608.9 270.2,614.3 270.4,609.3 270.7,610.9 270.9,617.1 271.1,613.8 271.4,618.0 271.6,607.9 271.8,607.2 272.1,613.3 272.3,608.0 272.5,607.5 272.8,606.2 273.0,621.0 273.3,604.4 273.5,600.0 273.7,598.5 274.0,612.3 274.2,594.0 274.4,608.5 274.7,587.9 274.9,616.4 275.1,601.1 275.4,608.1 275.6,599.4 275.9,599.6 276.1,601.6 276.3,612.6 276.6,605.5 276.8,612.5 277.0,605.5 277.3,611.8 277.5,606.0 277.7,606.4 278.0,612.3 278.2,613.1 278.5,607.5 278.7,617.3 278.9,612.1 279.2,614.7 279.4,618.9 279.6,618.8 279.9,617.0 280.1,612.5 280.3,616.1 280.6,616.0 280.8,616.7 281.1,617.6 281.3,614.1 281.5,619.8 281.8,606.5 282.0,614.3 282.2,614.7 282.5,610.7 282.7,612.2 282.9,609.4 283.2,610.5 283.4,614.4 283.7,612.2 283.9,610.5 284.1,607.5 284.4,611.1 284.6,616.2 284.8,618.0 285.1,617.6 285.3,618.5 285.5,605.1 285.8,617.2 286.0,613.5 286.3,608.0 286.5,610.6 286.7,603.3 287.0,613.2 287.2,612.9 287.4,604.1 287.7,606.2 287.9,615.7 288.1,605.7 288.4,612.9 288.6,606.8 288.9,615.2 289.1,607.7 289.3,618.5 289.6,607.2 289.8,613.6 290.0,616.8 290.3,610.5 290.5,606.3 290.7,606.0 291.0,616.7 291.2,605.6 291.5,618.5 291.7,609.4 291.9,617.4 292.2,605.4 292.4,617.2 292.6,605.3 292.9,616.9 293.1,605.2 293.3,611.0 293.6,605.0 293.8,607.2 294.1,613.1 294.3,604.6 294.5,617.4 294.8,617.0 295.0,615.1 295.2,617.9 295.5,614.9 295.7,614.6 295.9,606.2 296.2,605.2 296.4,607.2 296.7,606.1 296.9,614.2 297.1,615.9 297.4,619.1 297.6,620.4 297.8,619.4 298.1,620.2 298.3,616.0 298.5,618.2 298.8,604.8 299.0,604.2 299.3,612.7 299.5,609.8 299.7,610.4 300.0,610.0 300.2,611.5 300.4,612.9 300.7,611.1 300.9,611.3 301.1,616.9 301.4,614.1 301.6,610.6 301.9,612.1 302.1,603.3 302.3,614.4 302.6,607.8 302.8,615.3 303.0,614.8 303.3,613.1 303.5,604.2 303.7,602.2 304.0,602.1 304.2,602.2 304.5,615.0 304.7,602.5 304.9,602.6 305.2,614.6 305.4,617.3 305.6,615.5 305.9,615.8 306.1,615.3 306.3,614.5 306.6,613.6 306.8,612.5 307.1,605.1 307.3,605.5 307.5,615.8 307.8,606.3 308.0,609.6 308.2,607.1 308.5,610.9 308.7,606.7 308.9,612.4 309.2,606.2 309.4,606.0 309.7,610.0 309.9,615.2 310.1,613.9 310.4,618.6 310.6,618.3 310.8,615.9 311.1,614.1 311.3,603.7 311.5,615.0 311.8,610.8 312.0,611.2 312.3,610.8 312.5,603.8 312.7,603.6 313.0,608.9 313.2,602.5 313.4,609.5 313.7,602.8 313.9,611.9 314.1,611.9 314.4,605.0 314.6,614.5 314.9,603.6 315.1,615.5 315.3,603.6 315.6,610.3 315.8,603.7 316.0,612.0 316.3,603.7 316.5,610.7 316.7,610.2 317.0,606.1 317.2,615.5 317.5,605.2 317.7,609.3 317.9,612.9 318.2,603.8 318.4,600.8 318.6,600.8 318.9,599.9 319.1,604.2 319.3,599.7 319.6,603.9 319.8,609.1 320.1,606.0 320.3,608.0 320.5,607.1 320.8,600.9 321.0,609.8 321.2,611.5 321.5,602.9 321.7,609.2 321.9,605.4 322.2,604.6 322.4,613.4 322.7,606.1 322.9,605.2 323.1,604.9 323.4,603.3 323.6,602.9 323.8,611.5 324.1,611.4 324.3,601.5 324.5,612.4 324.8,611.4 325.0,610.2 325.3,611.1 325.5,612.0 325.7,601.2 326.0,602.1 326.2,613.3 326.4,611.6 326.7,613.3 326.9,615.8 327.1,617.2 327.4,620.1 327.6,609.3 327.9,619.4 328.1,610.2 328.3,620.0 328.6,616.9 328.8,616.5 329.0,613.1 329.3,611.1 329.5,615.2 329.7,607.4 330.0,607.4 330.2,606.0 330.5,613.8 330.7,604.8 330.9,604.0 331.2,610.7 331.4,602.6 331.6,603.9 331.9,604.6 332.1,609.7 332.3,606.7 332.6,604.9 332.8,607.2 333.1,608.1 333.3,612.2 333.5,608.2 333.8,609.9 334.0,609.0 334.2,603.8 334.5,603.6 334.7,606.8 334.9,603.2 335.2,603.0 335.4,605.8 335.7,607.3 335.9,604.0 336.1,607.8 336.4,613.3 336.6,613.1 336.8,602.4 337.1,602.4 337.3,611.0 337.5,604.7 337.8,602.4 338.0,608.3 338.3,602.5 338.5,610.4 338.7,602.8 339.0,606.8 339.2,603.1 339.4,604.9 339.7,603.4 339.9,617.5 340.1,615.7 340.4,607.0 340.6,603.4 340.9,603.7 341.1,609.9 341.3,603.2 341.6,602.7 341.8,607.7 342.0,605.5 342.3,612.7 342.5,610.4 342.7,602.0 343.0,612.7 343.2,594.0 343.5,605.7 343.7,589.5 343.9,614.9 344.2,584.9 344.4,613.9 344.6,593.7 344.9,615.3 345.1,596.8 345.3,618.0 345.6,602.8 345.8,617.8 346.1,607.1 346.3,610.7 346.5,606.6 346.8,607.3 347.0,610.7 347.2,611.6 347.5,607.3 347.7,613.4 347.9,613.3 348.2,617.7 348.4,616.5 348.7,616.4 348.9,615.7 349.1,614.3 349.4,608.4 349.6,606.8 349.8,611.0 350.1,610.9 350.3,615.5 350.5,608.1 350.8,611.8 351.0,614.2 351.3,614.9 351.5,613.3 351.7,610.9 352.0,612.9 352.2,613.9 352.4,600.5 352.7,613.1 352.9,599.8 353.1,600.0 353.4,612.7 353.6,610.8 353.9,611.0 354.1,613.2 354.3,605.2 354.6,604.1 354.8,611.4 355.0,606.1 355.3,605.7 355.5,607.4 355.7,604.8 356.0,602.2 356.2,599.6 356.5,600.6 356.7,612.4 356.9,599.5 357.2,609.1 357.4,585.3 357.6,612.2 357.9,591.0 358.1,609.0 358.3,600.2 358.6,614.7 358.8,592.7 359.0,605.0 359.3,586.2 359.5,608.8 359.8,591.6 360.0,615.8 360.2,597.7 360.5,599.1 360.7,613.8 360.9,604.5 361.2,613.5 361.4,608.0 361.6,614.9 361.9,613.4 362.1,617.4 362.4,615.8 362.6,601.8 362.8,615.5 363.1,615.0 363.3,611.3 363.5,611.1 363.8,611.1 364.0,603.1 364.2,602.4 364.5,602.9 364.7,605.3 365.0,607.7 365.2,601.8 365.4,602.1 365.7,614.6 365.9,615.5 366.1,612.4 366.4,614.1 366.6,607.8 366.8,607.0 367.1,603.7 367.3,603.8 367.6,610.3 367.8,604.2 368.0,613.5 368.3,604.1 368.5,606.3 368.7,616.9 369.0,608.0 369.2,608.6 369.4,612.4 369.7,613.2 369.9,615.5 370.2,614.9 370.4,614.4 370.6,613.8 370.9,610.5 371.1,614.2 371.3,614.2 371.6,605.9 371.8,604.7 372.0,609.5 372.3,603.8 372.5,609.9 372.8,610.3 373.0,614.4 373.2,616.1 373.5,613.8 373.7,617.9 373.9,615.4 374.2,612.3 374.4,616.5 374.6,613.4 374.9,610.9 375.1,604.9 375.4,613.0 375.6,616.1 375.8,615.8 376.1,604.2 376.3,616.3 376.5,615.2 376.8,607.5 377.0,610.6 377.2,605.9 377.5,602.1 377.7,612.3 378.0,611.9 378.2,600.8 378.4,612.8 378.7,605.7 378.9,601.6 379.1,608.0 379.4,609.3 379.6,608.6 379.8,604.0 380.1,605.6 380.3,604.6 380.6,603.8 380.8,607.0 381.0,608.6 381.3,606.2 381.5,606.4 381.7,612.7 382.0,611.4 382.2,606.9 382.4,603.1 382.7,608.5 382.9,603.4 383.2,603.9 383.4,614.6 383.6,618.2 383.9,617.7 384.1,616.4 384.3,604.0 384.6,612.7 384.8,607.5 385.0,608.0 385.3,604.2 385.5,607.6 385.8,604.0 386.0,608.0 386.2,603.9 386.5,608.2 386.7,603.7 386.9,603.8 387.2,608.4 387.4,599.0 387.6,609.0 387.9,592.7 388.1,617.2 388.4,587.2 388.6,615.9 388.8,594.0 389.1,616.4 389.3,609.1 389.5,603.9 389.8,605.9 390.0,615.2 390.2,616.3 390.5,606.5 390.7,612.2 391.0,603.2 391.2,605.4 391.4,611.2 391.7,606.7 391.9,606.3 392.1,604.7 392.4,601.8 392.6,614.4 392.8,602.1 393.1,614.5 393.3,607.7 393.6,609.9 393.8,613.8 394.0,607.1 394.3,615.9 394.5,612.8 394.7,616.3 395.0,602.8 395.2,615.9 395.4,616.2 395.7,603.0 395.9,603.3 396.2,603.6 396.4,614.0 396.6,618.0 396.9,605.6 397.1,606.9 397.3,607.2 397.6,607.8 397.8,605.9 398.0,605.8 398.3,606.2 398.5,615.8 398.8,601.1 399.0,598.1 399.2,613.2 399.5,593.2 399.7,610.1 399.9,588.5 400.2,612.1 400.4,583.7 400.6,610.8 400.9,586.4 401.1,610.6 401.4,589.0 401.6,601.3 401.8,591.4 402.1,605.6 402.3,594.1 402.5,606.9 402.8,602.2 403.0,601.0 403.2,601.4 403.5,601.6 403.7,603.0 404.0,602.6 404.2,603.4 404.4,608.7 404.7,604.9 404.9,602.7 405.1,601.4 405.4,599.2 405.6,602.1 405.8,599.1 406.1,605.5 406.3,603.4 406.6,606.0 406.8,602.1 407.0,598.7 407.3,598.5 407.5,598.3 407.7,599.9 408.0,601.6 408.2,600.8 408.4,605.9 408.7,597.2 408.9,601.5 409.2,604.6 409.4,606.1 409.6,596.8 409.9,606.9 410.1,605.6 410.3,603.6 410.6,601.4 410.8,602.2 411.0,597.2 411.3,604.5 411.5,597.9 411.8,605.7 412.0,596.3 412.2,598.3 412.5,595.8 412.7,592.5 412.9,599.7 413.2,594.2 413.4,604.6 413.6,592.7 413.9,607.8 414.1,581.5 414.4,610.6 414.6,585.2 414.8,604.2 415.1,591.6 415.3,602.7 415.5,599.2 415.8,605.9 416.0,595.9 416.2,600.7 416.5,599.2 416.7,605.6 417.0,600.2 417.2,610.3 417.4,600.3 417.7,607.7 417.9,604.8 418.1,606.7 418.4,600.6 418.6,610.7 418.8,613.2 419.1,612.7 419.3,600.4 419.6,600.1 419.8,606.5 420.0,603.2 420.3,603.6 420.5,609.3 420.7,603.7 421.0,607.3 421.2,599.8 421.4,596.7 421.7,596.8 421.9,598.9 422.2,609.7 422.4,602.5 422.6,597.1 422.9,608.8 423.1,597.2 423.3,601.6 423.6,609.8 423.8,608.3 424.0,597.4 424.3,609.4 424.5,608.4 424.8,606.6 425.0,608.9 425.2,610.1 425.5,609.7 425.7,608.5 425.9,608.9 426.2,608.2 426.4,611.5 426.6,610.1 426.9,613.3 427.1,600.0 427.4,604.8 427.6,603.9 427.8,602.8 428.1,600.4 428.3,605.7 428.5,603.1 428.8,591.1 429.0,612.5 429.2,582.5 429.5,612.2 429.7,590.2 430.0,608.7 430.2,595.1 430.4,599.1 430.7,598.9 430.9,601.2 431.1,604.4 431.4,610.0 431.6,598.7 431.8,611.6 432.1,605.6 432.3,598.6 432.6,608.9 432.8,599.3 433.0,607.6 433.3,598.6 433.5,596.3 433.7,609.1 434.0,608.1 434.2,609.9 434.4,592.2 434.7,604.9 434.9,585.2 435.2,604.6 435.4,580.3 435.6,607.5 435.9,584.1 436.1,606.3 436.3,601.5 436.6,593.6 436.8,594.0 437.0,597.0 437.3,596.1 437.5,599.4 437.8,608.3 438.0,600.5 438.2,608.7 438.5,599.5 438.7,599.2 438.9,607.3 439.2,608.3 439.4,612.7 439.6,610.5 439.9,606.9 440.1,602.5 440.4,598.1 440.6,596.7 440.8,596.4 441.1,596.2 441.3,600.8 441.5,598.4 441.8,597.4 442.0,599.7 442.2,594.0 442.5,587.1 442.7,602.5 443.0,581.9 443.2,602.7 443.4,576.6 443.7,588.4 443.9,599.2 444.1,581.8 444.4,604.6 444.6,576.9 444.8,593.7 445.1,582.5 445.3,591.0 445.6,586.8 445.8,596.4 446.0,581.5 446.3,596.0 446.5,576.8 446.7,603.6 447.0,585.0 447.2,599.8 447.4,598.5 447.7,590.4 447.9,597.5 448.2,592.9 448.4,601.3 448.6,600.6 448.9,598.0 449.1,598.0 449.3,598.2 449.6,598.4 449.8,605.9 450.0,604.2 450.3,598.3 450.5,606.2 450.8,601.4 451.0,596.4 451.2,602.1 451.5,605.6 451.7,602.0 451.9,606.4 452.2,607.7 452.4,603.8 452.6,611.4 452.9,598.6 453.1,610.5 453.4,603.2 453.6,606.0 453.8,603.9 454.1,602.4 454.3,609.1 454.5,602.2 454.8,605.7 455.0,603.7 455.2,596.4 455.5,597.1 455.7,595.6 456.0,595.2 456.2,591.9 456.4,605.0 456.7,587.3 456.9,607.8 457.1,580.5 457.4,605.1 457.6,586.7 457.8,605.8 458.1,601.7 458.3,597.1 458.6,600.3 458.8,610.9 459.0,601.9 459.3,604.9 459.5,608.0 459.7,609.2 460.0,610.0 460.2,600.6 460.4,607.3 460.7,599.4 460.9,604.9 461.2,603.4 461.4,602.9 461.6,599.5 461.9,609.3 462.1,605.8 462.3,598.8 462.6,608.8 462.8,598.1 463.0,606.3 463.3,603.7 463.5,599.0 463.7,598.8 464.0,603.6 464.2,609.2 464.5,606.7 464.7,606.8 464.9,598.3 465.2,598.9 465.4,603.4 465.6,604.7 465.9,607.0 466.1,604.4 466.3,610.7 466.6,607.8 466.8,597.7 467.1,597.7 467.3,602.4 467.5,605.8 467.8,598.9 468.0,599.1 468.2,597.9 468.5,600.0 468.7,613.1 468.9,609.8 469.2,600.4 469.4,612.1 469.7,608.3 469.9,612.0 470.1,613.0 470.4,601.3 470.6,605.9 470.8,612.7 471.1,605.3 471.3,603.2 471.5,599.0 471.8,607.7 472.0,602.9 472.3,609.2 472.5,609.2 472.7,611.2 473.0,610.1 473.2,611.8 473.4,610.5 473.7,610.5 473.9,612.1 474.1,610.9 474.4,612.8 474.6,612.2 474.9,613.1 475.1,612.4 475.3,612.3 475.6,609.8 475.8,611.1 476.0,596.8 476.3,609.7 476.5,595.5 476.7,604.6 477.0,607.3 477.2,607.6 477.5,609.5 477.7,605.7 477.9,609.1 478.2,610.5 478.4,608.9 478.6,610.7 478.9,610.0 479.1,609.1 479.3,610.7 479.6,604.7 479.8,607.2 480.1,607.5 480.3,602.4 480.5,600.8 480.8,609.6 481.0,605.4 481.2,606.1 481.5,601.7 481.7,607.1 481.9,606.4 482.2,609.1 482.4,608.1 482.7,611.3 482.9,598.3 483.1,607.1 483.4,608.3 483.6,611.0 483.8,609.6 484.1,612.1 484.3,608.5 484.5,609.0 484.8,604.6 485.0,601.3 485.3,601.4 485.5,602.5 485.7,613.1 486.0,614.2 486.2,609.7 486.4,614.4 486.7,612.0 486.9,616.1 487.1,610.1 487.4,609.4 487.6,606.8 487.9,607.3 488.1,607.4 488.3,599.7 488.6,609.2 488.8,600.5 489.0,604.1 489.3,604.9 489.5,599.9 489.7,609.4 490.0,598.2 490.2,610.0 490.5,596.7 490.7,608.9 490.9,604.9 491.2,607.2 491.4,605.6 491.6,605.0 491.9,601.4 492.1,601.9 492.3,606.9 492.6,597.5 492.8,601.6 493.1,598.8 493.3,603.2 493.5,612.6 493.8,605.1 494.0,604.8 494.2,600.7 494.5,600.1 494.7,610.0 494.9,603.5 495.2,601.1 495.4,607.2 495.7,606.9 495.9,605.7 496.1,607.5 496.4,613.1 496.6,612.9 496.8,610.8 497.1,605.9 497.3,605.1 497.5,603.2 497.8,604.4 498.0,603.3 498.3,607.5 498.5,601.2 498.7,608.1 499.0,607.4 499.2,606.1 499.4,611.0 499.7,606.1 499.9,601.3 500.1,604.3 500.4,601.6 500.6,601.6 500.9,604.1 501.1,600.4 501.3,608.9 501.6,595.9 501.8,609.7 502.0,602.7 502.3,591.1 502.5,612.1 502.7,582.9 503.0,609.2 503.2,591.0 503.5,611.4 503.7,598.7 503.9,594.2 504.2,597.4 504.4,597.7 504.6,600.0 504.9,604.1 505.1,607.0 505.3,606.4 505.6,607.6 505.8,608.3 506.1,606.0 506.3,602.0 506.5,610.5 506.8,603.4 507.0,607.3 507.2,598.4 507.5,602.9 507.7,604.0 507.9,601.5 508.2,603.1 508.4,600.2 508.7,610.3 508.9,606.4 509.1,598.4 509.4,603.7 509.6,604.3 509.8,599.3 510.1,598.8 510.3,600.8 510.5,598.6 510.8,604.3 511.0,603.0 511.3,595.6 511.5,601.9 511.7,599.7 512.0,603.1 512.2,602.1 512.4,606.9 512.7,599.1 512.9,598.4 513.1,601.5 513.4,604.3 513.6,603.6 513.9,598.3 514.1,603.1 514.3,605.1 514.6,608.1 514.8,609.0 515.0,607.6 515.3,606.8 515.5,610.0 515.7,606.0 516.0,596.1 516.2,605.2 516.5,604.4 516.7,597.9 516.9,604.8 517.2,596.6 517.4,594.9 517.6,595.3 517.9,605.4 518.1,601.1 518.3,604.7 518.6,594.5 518.8,605.7 519.1,603.3 519.3,604.7 519.5,606.2 519.8,608.2 520.0,596.7 520.2,597.5 520.5,604.8 520.7,599.0 520.9,599.8 521.2,605.3 521.4,607.2 521.7,604.3 521.9,612.7 522.1,613.2 522.4,611.6 522.6,600.0 522.8,610.1 523.1,603.0 523.3,605.0 523.5,599.7 523.8,599.2 524.0,604.5 524.3,599.4 524.5,597.5 524.7,595.0 525.0,605.4 525.2,594.7 525.4,605.2 525.7,589.4 525.9,607.8 526.1,582.8 526.4,606.8 526.6,579.8 526.9,610.4 527.1,585.3 527.3,601.3 527.6,598.4 527.8,603.9 528.0,595.7 528.3,607.6 528.5,598.4 528.7,611.4 529.0,600.4 529.2,611.6 529.5,600.2 529.7,601.2 529.9,602.7 530.2,610.0 530.4,600.8 530.6,604.3 530.9,600.3 531.1,603.3 531.3,600.5 531.6,611.7 531.8,609.3 532.1,613.5 532.3,602.6 532.5,600.8 532.8,604.2 533.0,605.1 533.2,609.8 533.5,613.8 533.7,611.1 533.9,600.9 534.2,606.7 534.4,606.0 534.7,610.1 534.9,600.7 535.1,601.0 535.4,602.8 535.6,601.6 535.8,600.5 536.1,610.3 536.3,600.4 536.5,610.1 536.8,599.8 537.0,612.4 537.3,601.8 537.5,599.1 537.7,601.6 538.0,601.1 538.2,612.1 538.4,603.2 538.7,608.7 538.9,604.4 539.1,610.3 539.4,608.4 539.6,592.4 539.9,593.6 540.1,588.2 540.3,586.8 540.6,607.9 540.8,581.4 541.0,595.5 541.3,577.1 541.5,605.0 541.7,582.1 542.0,600.2 542.2,587.0 542.5,605.8 542.7,580.4 542.9,595.1 543.2,577.3 543.4,598.1 543.6,583.7 543.9,603.6 544.1,589.9 544.3,588.6 544.6,602.7 544.8,594.7 545.1,596.8 545.3,597.2 545.5,609.9 545.8,601.5 546.0,604.1 546.2,602.1 546.5,602.3 546.7,599.8 546.9,599.4 547.2,613.5 547.4,595.2 547.7,605.4 547.9,587.0 548.1,611.7 548.4,581.5 548.6,601.4 548.8,585.3 549.1,600.6 549.3,590.0 549.5,593.5 549.8,593.5 550.0,597.0 550.3,602.3 550.5,599.3 550.7,603.2 551.0,604.4 551.2,609.7 551.4,606.6 551.7,611.3 551.9,609.2 552.1,598.1 552.4,604.3 552.6,606.6 552.9,604.6 553.1,604.3 553.3,604.1 553.6,600.9 553.8,606.0 554.0,605.7 554.3,609.1 554.5,597.8 554.7,608.6 555.0,599.9 555.2,598.1 555.5,611.3 555.7,603.2 555.9,598.9 556.2,607.5 556.4,599.7 556.6,600.1 556.9,603.2 557.1,605.5 557.3,601.2 557.6,612.3 557.8,614.8 558.1,601.0 558.3,600.4 558.5,599.9 558.8,608.8 559.0,608.4 559.2,602.0 559.5,598.5 559.7,609.3 559.9,598.3 560.2,598.1 560.4,598.6 560.7,611.9 560.9,604.2 561.1,609.6 561.4,611.2 561.6,606.2 561.8,602.1 562.1,614.5 562.3,612.3 562.5,605.0 562.8,612.9 563.0,607.5 563.3,600.6 563.5,608.3 563.7,604.1 564.0,600.7 564.2,606.4 564.4,605.0 564.7,605.4 564.9,603.5 565.1,598.4 565.4,606.8 565.6,606.9 565.9,606.9 566.1,605.3 566.3,602.5 566.6,608.1 566.8,610.3 567.0,608.6 567.3,611.5 567.5,597.3 567.7,605.8 568.0,601.9 568.2,610.5 568.5,604.4 568.7,596.8 568.9,606.6 569.2,609.7 569.4,605.2 569.6,607.0 569.9,596.4 570.1,602.9 570.3,598.4 570.6,596.6 570.8,609.9 571.0,611.4 571.3,613.3 571.5,612.9 571.8,615.4 572.0,615.4 572.2,618.1 572.5,616.4 572.7,618.1 572.9,605.8 573.2,618.1 573.4,616.4 573.6,612.8 573.9,614.9 574.1,612.7 574.4,613.0 574.6,609.5 574.8,601.7 575.1,601.2 575.3,600.6 575.5,600.3 575.8,607.5 576.0,609.6 576.2,599.4 576.5,599.0 576.7,604.8 577.0,598.6 577.2,611.2 577.4,600.7 577.7,598.6 577.9,598.6 578.1,598.7 578.4,598.7 578.6,600.8 578.8,599.5 579.1,608.3 579.3,598.4 579.6,609.2 579.8,597.9 580.0,607.3 580.3,603.8 580.5,602.6 580.7,604.0 581.0,605.5 581.2,597.8 581.4,598.3 581.7,599.4 581.9,598.0 582.2,607.5 582.4,607.5 582.6,602.8 582.9,602.3 583.1,606.0 583.3,612.6 583.6,611.3 583.8,613.2 584.0,609.0 584.3,607.5 584.5,604.2 584.8,608.6 585.0,597.3 585.2,599.1 585.5,596.6 585.7,607.8 585.9,607.1 586.2,596.7 586.4,602.5 586.6,605.9 586.9,596.8 587.1,604.7 587.4,607.0 587.6,606.1 587.8,603.7 588.1,608.3 588.3,601.6 588.5,603.2 588.8,603.6 589.0,605.0 589.2,610.8 589.5,614.4 589.7,611.2 590.0,610.6 590.2,612.8 590.4,607.7 590.7,599.8 590.9,605.9 591.1,605.2 591.4,609.6 591.6,609.8 591.8,602.7 592.1,610.8 592.3,608.3 592.6,599.0 592.8,602.2 593.0,606.2 593.3,610.7 593.5,609.3 593.7,598.5 594.0,598.4 594.2,605.6 594.4,604.7 594.7,598.8 594.9,598.9 595.2,609.9 595.4,599.1 595.6,601.0 595.9,605.0 596.1,603.5 596.3,598.9 596.6,599.3 596.8,603.9 597.0,606.0 597.3,605.1 597.5,596.9 597.8,596.5 598.0,603.7 598.2,605.0 598.5,606.6 598.7,603.4 598.9,601.2 599.2,608.0 599.4,609.9 599.6,610.4 599.9,606.7 600.1,606.7 600.4,601.9 600.6,597.3 600.8,599.0 601.1,599.6 601.3,603.4 601.5,596.3 601.8,605.5 602.0,605.5 602.2,602.7 602.5,602.4 602.7,603.1 603.0,605.2 603.2,595.3 603.4,603.8 603.7,603.2 603.9,595.4 604.1,595.5 604.4,602.6 604.6,605.4 604.8,605.0 605.1,609.3 605.3,604.0 605.6,600.0 605.8,607.5 606.0,597.1 606.3,607.0 606.5,597.7 606.7,611.2 607.0,597.9 607.2,608.5 607.4,602.7 607.7,607.7 607.9,607.9 608.2,598.2 608.4,598.3 608.6,611.1 608.9,611.8 609.1,612.3 609.3,598.8 609.6,599.0 609.8,611.0 610.0,609.8 610.3,613.0 610.5,609.0 610.8,608.0 611.0,606.3 611.2,606.7 611.5,602.6 611.7,599.7 611.9,598.7 612.2,593.4 612.4,607.4 612.6,587.4 612.9,601.7 613.1,581.6 613.4,607.0 613.6,587.4 613.8,599.8 614.1,592.8 614.3,613.2 614.5,601.4 614.8,602.9 615.0,605.2 615.2,605.7 615.5,606.9 615.7,607.4 616.0,610.7 616.2,609.0 616.4,607.7 616.7,607.1 616.9,604.6 617.1,605.3 617.4,597.3 617.6,597.6 617.8,597.9 618.1,604.4 618.3,611.9 618.6,598.7 618.8,604.4 619.0,599.3 619.3,603.6 619.5,602.1 619.7,604.4 620.0,607.4 620.2,611.3 620.4,611.0 620.7,604.0 620.9,605.0 621.2,600.8 621.4,598.1 621.6,597.9 621.9,597.8 622.1,597.8 622.3,600.9 622.6,605.3 622.8,609.0 623.0,600.6 623.3,606.2 623.5,597.6 623.8,597.6 624.0,598.3 624.2,601.7 624.5,611.0 624.7,598.2 624.9,610.4 625.2,598.6 625.4,611.7 625.6,598.9 625.9,601.3 626.1,599.0 626.4,603.9 626.6,598.8 626.8,608.1 627.1,609.7 627.3,610.4 627.5,611.1 627.8,611.5 628.0,598.4 628.2,603.9 628.5,605.4 628.7,610.6 629.0,596.9 629.2,609.7 629.4,608.1 629.7,605.7 629.9,607.7 630.1,607.3 630.4,609.2 630.6,594.9 630.8,594.9 631.1,600.1 631.3,606.5 631.6,594.7 631.8,596.3 632.0,601.2 632.3,603.1 632.5,601.9 632.7,595.7 633.0,596.2 633.2,598.8 633.4,601.3 633.7,609.3 633.9,598.5 634.2,608.9 634.4,599.6 634.6,611.7 634.9,599.4 635.1,602.4 635.3,601.4 635.6,602.9 635.8,607.1 636.0,598.7 636.3,598.6 636.5,608.2 636.8,609.7 637.0,608.0 637.2,607.2 637.5,605.3 637.7,605.7 637.9,600.5 638.2,603.3 638.4,601.2 638.6,599.0 638.9,599.0 639.1,597.8 639.4,612.4 639.6,593.9 639.8,612.7 640.1,592.0 640.3,603.7 640.5,584.2 640.8,607.3 641.0,580.1 641.2,611.0 641.5,588.6 641.7,606.4 642.0,586.8 642.2,607.6 642.4,597.4 642.7,604.7 642.9,590.9 643.1,606.7 643.4,594.3 643.6,602.3 643.8,595.5 644.1,601.7 644.3,595.9 644.6,610.7 644.8,610.3 645.0,606.5 645.3,608.8 645.5,596.3 645.7,606.2 646.0,597.7 646.2,601.2 646.4,604.6 646.7,604.7 646.9,601.0 647.2,604.4 647.4,607.3 647.6,595.1 647.9,604.9 648.1,604.3 648.3,602.7 648.6,607.4 648.8,607.7 649.0,594.4 649.3,601.5 649.5,594.7 649.8,595.4 650.0,595.7 650.2,596.2 650.5,596.7 650.7,597.2 650.9,597.8 651.2,598.3 651.4,598.8 651.6,601.4 651.9,601.6 652.1,598.8 652.4,602.8 652.6,608.5 652.8,597.1 653.1,595.1 653.3,596.5 653.5,591.0 653.8,590.9 654.0,598.5 654.2,584.6 654.5,604.7 654.7,580.0 655.0,603.7 655.2,584.4 655.4,598.1 655.7,593.5 655.9,609.4 656.1,605.3 656.4,607.0 656.6,595.6 656.8,607.8 657.1,608.0 657.3,606.6 657.6,601.7 657.8,609.4 658.0,605.1 658.3,602.7 658.5,596.5 658.7,596.8 659.0,603.2 659.2,597.3 659.4,606.5 659.7,597.8 659.9,598.1 660.2,606.3 660.4,605.0 660.6,607.9 660.9,601.3 661.1,610.2 661.3,604.6 661.6,599.0 661.8,601.0 662.0,596.7 662.3,602.7 662.5,602.5 662.8,606.1 663.0,599.8 663.2,596.1 663.5,608.5 663.7,599.5 663.9,604.5 664.2,595.6 664.4,602.7 664.6,603.2 664.9,595.6 665.1,595.6 665.4,603.1 665.6,603.9 665.8,609.1 666.1,595.6 666.3,608.5 666.5,608.4 666.8,604.9 667.0,605.1 667.2,596.2 667.5,603.9 667.7,599.4 668.0,600.4 668.2,596.8 668.4,598.8 668.7,594.5 668.9,599.0 669.1,599.6 669.4,590.9 669.6,600.0 669.8,585.2 670.1,605.9 670.3,581.1 670.6,601.3 670.8,586.3 671.0,605.9 671.3,595.1 671.5,597.7 671.7,603.2 672.0,598.8 672.2,601.3 672.4,601.0 672.7,601.2 672.9,601.6 673.2,606.0 673.4,599.7 673.6,605.1 673.9,603.7 674.1,602.0 674.3,606.7 674.6,605.0 674.8,606.7 675.0,607.7 675.3,607.6 675.5,608.1 675.7,610.1 676.0,596.3 676.2,609.0 676.5,607.5 676.7,609.4 676.9,609.3 677.2,607.6 677.4,605.6 677.6,604.4 677.9,603.7 678.1,605.9 678.3,605.9 678.6,599.2 678.8,604.1 679.1,609.2 679.3,610.8 679.5,607.7 679.8,603.0 680.0,599.6 680.2,603.4 680.5,607.0 680.7,599.3 680.9,605.3 681.2,599.1 681.4,603.0 681.7,598.9 681.9,610.3 682.1,607.2 682.4,593.9 682.6,593.3 682.8,611.3 683.1,589.9 683.3,609.0 683.5,591.8 683.8,607.5 684.0,581.5 684.3,609.9 684.5,586.0 684.7,610.4 685.0,603.3 685.2,596.6 685.4,607.4 685.7,603.5 685.9,597.5 686.1,604.9 686.4,602.4 686.6,603.7 686.9,601.7 687.1,602.7 687.3,605.5 687.6,597.8 687.8,597.6 688.0,608.2 688.3,599.0 688.5,602.0 688.7,605.5 689.0,598.8 689.2,603.8 689.5,610.4 689.7,603.4 689.9,603.2 690.2,605.3 690.4,608.8 690.6,602.4 690.9,612.2 691.1,611.9 691.3,611.0 691.6,611.4 691.8,598.7 692.1,612.5 692.3,609.8 692.5,611.3 692.8,606.9 693.0,605.6 693.2,602.4 693.5,609.2 693.7,609.2 693.9,609.8 694.2,608.5 694.4,609.1 694.7,609.8 694.9,608.4 695.1,608.7 695.4,600.8 695.6,602.4 695.8,608.2 696.1,611.0 696.3,605.1 696.5,598.5 696.8,597.9 697.0,597.7 697.3,604.0 697.5,599.1 697.7,598.3 698.0,603.7 698.2,597.0 698.4,596.9 698.7,596.9 698.9,597.6 699.1,605.7 699.4,597.6 699.6,607.2 699.9,610.2 700.1,609.5 700.3,609.2 700.6,597.1 700.8,609.0 701.0,608.8 701.3,606.7 701.5,609.6 701.7,610.2 702.0,611.2 702.2,599.1 702.5,597.9 702.7,597.9 702.9,598.1 703.2,606.1 703.4,607.0 703.6,608.5 703.9,608.9 704.1,606.0 704.3,609.5 704.6,611.2 704.8,602.4 705.1,602.2 705.3,597.0 705.5,597.9 705.8,598.5 706.0,604.6 706.2,598.3 706.5,594.8 706.7,605.1 706.9,603.1 707.2,601.4 707.4,606.6 707.7,599.4 707.9,597.8 708.1,596.6 708.4,598.6 708.6,598.5 708.8,598.7 709.1,602.1 709.3,607.8 709.5,605.1 709.8,600.7 710.0,596.6 710.3,605.6 710.5,597.3 710.7,604.3 711.0,600.8 711.2,604.2 711.4,605.8 711.7,598.1 711.9,599.2 712.1,605.4 712.4,607.6 712.6,599.5 712.9,598.8 713.1,602.2 713.3,601.8 713.6,604.1 713.8,598.5 714.0,600.6 714.3,591.4 714.5,606.5 714.7,584.9 715.0,594.7 715.2,578.7 715.5,589.9 715.7,598.3 715.9,582.7 716.2,599.4 716.4,578.9 716.6,607.7 716.9,583.2 717.1,600.5 717.3,590.2 717.6,607.2 717.8,593.0 718.1,606.7 718.3,596.9 718.5,597.4 718.8,608.1 719.0,601.4 719.2,604.8 719.5,605.5 719.7,601.6 719.9,606.7 720.2,604.2 720.4,611.7 720.7,603.3 720.9,609.5 721.1,609.8 721.4,602.9 721.6,605.7 721.8,615.0 722.1,611.9 722.3,610.6 722.5,609.9 722.8,610.3 723.0,608.0 723.3,606.8 723.5,609.7 723.7,608.7 724.0,595.9 724.2,597.3 724.4,596.6 724.7,596.0 724.9,594.2 725.1,592.6 725.4,592.6 725.6,590.4 725.9,608.4 726.1,587.3 726.3,604.0 726.6,583.0 726.8,605.4 727.0,587.2 727.3,608.5 727.5,595.5 727.7,597.8 728.0,597.6 728.2,594.7 728.5,606.5 728.7,594.8 728.9,603.2 729.2,587.5 729.4,598.4 729.6,581.6 729.9,594.9 730.1,592.7 730.3,586.4 730.6,598.3 730.8,585.2 731.1,600.6 731.3,581.1 731.5,587.6 731.8,606.1 732.0,581.2 732.2,609.5 732.5,587.5 732.7,610.2 732.9,593.2 733.2,605.9 733.4,589.5 733.7,602.3 733.9,587.5 734.1,600.1 734.4,581.2 734.6,601.3 734.8,585.5 735.1,598.7 735.3,593.5 735.5,590.8 735.8,604.0 736.0,586.7 736.3,594.7 736.5,582.4 736.7,586.7 737.0,601.1 737.2,583.2 737.4,609.4 737.7,587.9 737.9,614.7 738.1,592.4 738.4,613.7 738.6,604.6 738.9,598.9 739.1,613.1 739.3,602.4 739.6,605.1 739.8,606.3 740.0,611.0 740.3,605.7 740.5,606.4 740.7,603.3 741.0,598.9 741.2,610.0 741.5,612.1 741.7,613.5 741.9,612.6 742.2,613.1 742.4,601.5 742.6,607.5 742.9,610.7 743.1,611.6 743.3,612.6 743.6,615.5 743.8,612.9 744.1,612.1 744.3,612.2 744.5,602.9 744.8,602.7 745.0,601.0 745.2,601.2 745.5,600.7 745.7,611.9 745.9,608.8 746.2,607.4 746.4,600.4 746.7,609.8 746.9,613.0 747.1,614.4 747.4,613.2 747.6,611.5 747.8,611.4 748.1,599.6 748.3,611.0 748.5,603.9 748.8,599.2 749.0,599.1 749.3,600.5 749.5,598.8 749.7,601.7 750.0,599.4 750.2,607.6 750.4,601.8 750.7,609.3 750.9,603.3 751.1,611.4 751.4,607.1 751.6,608.6 751.9,611.1 752.1,614.8 752.3,611.9 752.6,605.6 752.8,601.9 753.0,610.7 753.3,613.9 753.5,608.3 753.7,611.2 754.0,602.0 754.2,613.0 754.5,601.9 754.7,613.0 754.9,601.9 755.2,615.6 755.4,602.8 755.6,614.5 755.9,608.5 756.1,606.5 756.3,610.6 756.6,613.6 756.8,605.4 757.1,616.1 757.3,616.2 757.5,618.4 757.8,619.3 758.0,605.2 758.2,608.7 758.5,615.0 758.7,612.3 758.9,611.9 759.2,607.1 759.4,603.8 759.7,609.9 759.9,610.4 760.1,606.2 760.4,613.6 760.6,616.7 760.8,611.2 761.1,613.4 761.3,614.4 761.5,615.7 761.8,615.9 762.0,616.2 762.3,614.0 762.5,614.9 762.7,613.9 763.0,616.3 763.2,603.7 763.4,613.0 763.7,615.1 763.9,612.7 764.1,611.3 764.4,614.3 764.6,613.8 764.9,611.9 765.1,611.7 765.3,604.8 765.6,607.8 765.8,602.2 766.0,612.2 766.3,601.5 766.5,603.3 766.7,601.2 767.0,604.9 767.2,604.3 767.5,601.6 767.7,601.7 767.9,607.2 768.2,609.0 768.4,614.8 768.6,614.7 768.9,614.3 769.1,601.5 769.3,614.7 769.6,610.8 769.8,609.4 770.1,605.2 770.3,610.5 770.5,602.6 770.8,602.1 771.0,601.1 771.2,601.4 771.5,602.8 771.7,598.3 771.9,602.2 772.2,604.7 772.4,600.4 772.7,602.9 772.9,602.7 773.1,608.0 773.4,605.9 773.6,601.9 773.8,611.7 774.1,609.6 774.3,606.9 774.5,609.2 774.8,609.2 775.0,605.2 775.3,607.2 775.5,604.7 775.7,605.1 776.0,602.1 776.2,598.3 776.4,597.3 776.7,614.8 776.9,604.6 777.1,604.6 777.4,587.3 777.6,602.2 777.9,583.9 778.1,602.6 778.3,589.6 778.6,603.6 778.8,596.4 779.0,595.6 779.3,602.5 779.5,600.3 779.7,599.8 780.0,601.6 780.2,600.6 780.5,603.4 780.7,613.8 780.9,588.5 781.2,602.3 781.4,582.6 781.6,609.0 781.9,587.7 782.1,608.9 782.3,594.6 782.6,602.1 782.8,599.8 783.0,601.7 783.3,589.7 783.5,607.1 783.8,583.2 784.0,612.7 784.2,589.4 784.5,611.0 784.7,597.9 784.9,603.9 785.2,602.4 785.4,610.8 785.6,605.2 785.9,608.3 786.1,608.2 786.4,604.5 786.6,605.9 786.8,607.9 787.1,611.5 787.3,608.5 787.5,612.2 787.8,601.1 788.0,604.0 788.2,601.0 788.5,612.8 788.7,600.8 789.0,612.3 789.2,603.1 789.4,602.3 789.7,604.7 789.9,600.3 790.1,600.4 790.4,600.6 790.6,601.1 790.8,604.4 791.1,601.4 791.3,604.9 791.6,605.0 791.8,607.7 792.0,609.4 792.3,609.3 792.5,612.7 792.7,613.4 793.0,615.0 793.2,613.5 793.4,607.3 793.7,611.0 793.9,610.9 794.2,613.9 794.4,615.7 794.6,615.2 794.9,606.5 795.1,607.9 795.3,608.9 795.6,605.6 795.8,613.8 796.0,610.2 796.3,611.8 796.5,612.5 796.8,609.4 797.0,612.6 797.2,604.3 797.5,610.3 797.7,604.1 797.9,611.6 798.2,604.0 798.4,613.2 798.6,604.8 798.9,614.2 799.1,615.6 799.4,615.8 799.6,614.6 799.8,617.0 800.1,617.0 800.3,614.9 800.5,614.1 800.8,608.6 801.0,610.4 801.2,610.8 801.5,604.8 801.7,614.3 802.0,603.8 802.2,604.6 802.4,606.4 802.7,604.2 802.9,607.8 803.1,603.5 803.4,610.7 803.6,607.9 803.8,610.1 804.1,612.9 804.3,605.2 804.6,608.4 804.8,599.2 805.0,599.1 805.3,608.1 805.5,609.6 805.7,597.1 806.0,598.1 806.2,598.4 806.4,604.7 806.7,613.1 806.9,591.6 807.2,615.8 807.4,584.1 807.6,610.3 807.9,589.3 808.1,612.1 808.3,595.7 808.6,613.1 808.8,594.4 809.0,596.0 809.3,599.5 809.5,600.6 809.8,600.4 810.0,603.9 810.2,609.4 810.5,608.4 810.7,615.4 810.9,612.4 811.2,613.2 811.4,604.8 811.6,615.4 811.9,607.4 812.1,610.0 812.4,603.2 812.6,606.0 812.8,612.8 813.1,613.5 813.3,612.6 813.5,612.7 813.8,613.0 814.0,612.8 814.2,613.5 814.5,611.5 814.7,610.9 815.0,604.4 815.2,604.7 815.4,607.3 815.7,609.6 815.9,618.2 816.1,604.1 816.4,611.4 816.6,605.2 816.8,605.1 817.1,602.4 817.3,603.1 817.6,604.6 817.8,601.3 818.0,601.8 818.3,609.4 818.5,602.7 818.7,603.1 819.0,604.6 819.2,606.8 819.4,604.5 819.7,611.8 819.9,605.3 820.2,612.1 820.4,616.4 820.6,614.2 820.9,608.8 821.1,612.5 821.3,602.8 821.6,607.5 821.8,612.4 822.0,608.0 822.3,601.4 822.5,601.1 822.8,609.0 823.0,605.8 823.2,600.3 823.5,608.9 823.7,605.7 823.9,612.0 824.2,605.9 824.4,600.1 824.6,613.4 824.9,611.1 825.1,611.8 825.4,612.9 825.6,607.0 825.8,610.1 826.1,610.0 826.3,610.7 826.5,617.4 826.8,605.8 827.0,617.5 827.2,618.5 827.5,616.6 827.7,613.7 828.0,607.1 828.2,608.6 828.4,614.8 828.7,618.8 828.9,613.3 829.1,611.5 829.4,607.2 829.6,606.7 829.8,603.9 830.1,602.4 830.3,599.0 830.6,616.2 830.8,590.9 831.0,612.4 831.3,585.5 831.5,604.1 831.7,591.6 832.0,604.1 832.2,597.5 832.4,606.4 832.7,603.7 832.9,607.1 833.2,609.2 833.4,608.1 833.6,612.8 833.9,612.2 834.1,613.3 834.3,616.5 834.6,610.7 834.8,607.5 835.0,617.3 835.3,620.7 835.5,619.6 835.8,605.2 836.0,615.3 836.2,617.6 836.5,605.7 836.7,612.5 836.9,605.4 837.2,605.0 837.4,602.6 837.6,597.8 837.9,606.7 838.1,591.6 838.4,616.2 838.6,586.0 838.8,615.1 839.1,592.7 839.3,612.9 839.5,597.9 839.8,613.9 840.0,602.7 840.2,612.3 840.5,602.9 840.7,610.2 841.0,605.2 841.2,605.2 841.4,607.6 841.7,602.5 841.9,602.7 842.1,614.2 842.4,607.3 842.6,610.8 842.8,603.6 843.1,612.5 843.3,605.6 843.6,607.2 843.8,604.8 844.0,607.9 844.3,613.2 844.5,616.0 844.7,614.0 845.0,615.4 845.2,620.5 845.4,619.1 845.7,619.3 845.9,617.6 846.2,619.8 846.4,618.3 846.6,609.6 846.9,608.3 847.1,608.8 847.3,611.4 847.6,606.7 847.8,618.9 848.0,609.0 848.3,610.6 848.5,611.6 848.8,608.4 849.0,614.4 849.2,616.3 849.5,613.7 849.7,611.1 849.9,612.0 850.2,613.8 850.4,613.0 850.6,609.3 850.9,605.1 851.1,606.5 851.4,606.3 851.6,611.7 851.8,612.7 852.1,607.6 852.3,617.0 852.5,607.1 852.8,618.0 853.0,606.7 853.2,619.8 853.5,608.7 853.7,612.8 854.0,606.3 854.2,614.1 854.4,605.4 854.7,605.1 854.9,604.9 855.1,613.0 855.4,604.4 855.6,605.5 855.8,613.9 856.1,606.0 856.3,605.1 856.6,609.3 856.8,613.8 857.0,603.2 857.3,615.3 857.5,603.0 857.7,617.8 858.0,614.8 858.2,611.1 858.4,602.8 858.7,608.2 858.9,611.7 859.2,605.1 859.4,604.3 859.6,607.6 859.9,616.4 860.1,614.4 860.3,613.2 860.6,611.2 860.8,614.8 861.0,606.1 861.3,605.2 861.5,612.8 861.8,607.5 862.0,614.8 862.2,607.3 862.5,608.4 862.7,607.4 862.9,614.6 863.2,607.7 863.4,614.3 863.6,608.0 863.9,603.6 864.1,602.4 864.4,609.5 864.6,600.8 864.8,610.6 865.1,601.4 865.3,602.0 865.5,610.0 865.8,603.0 866.0,613.5 866.2,614.4 866.5,604.6 866.7,611.7 867.0,610.8 867.2,614.8 867.4,613.7 867.7,618.4 867.9,616.7 868.1,618.5 868.4,605.0 868.6,610.8 868.8,615.4 869.1,607.6 869.3,605.9 869.6,604.9 869.8,613.6 870.0,605.0 870.3,608.1 870.5,605.0 870.7,616.8 871.0,609.1 871.2,611.0 871.4,612.9 871.7,618.2 871.9,608.8 872.2,609.5 872.4,612.8 872.6,614.4 872.9,610.9 873.1,605.5 873.3,614.6 873.6,611.0 873.8,616.6 874.0,617.2 874.3,615.1 874.5,617.3 874.8,606.6 875.0,612.9 875.2,614.8 875.5,614.5 875.7,612.1 875.9,615.7 876.2,618.6 876.4,618.1 876.6,616.4 876.9,606.1 877.1,605.9 877.4,613.6 877.6,614.7 877.8,610.8 878.1,604.7 878.3,604.3 878.5,603.9 878.8,603.6 879.0,608.5 879.2,607.1 879.5,610.1 879.7,611.7 880.0,605.5 880.2,603.9 880.4,608.0 880.7,607.6 880.9,604.9 881.1,604.3 881.4,619.9 881.6,602.3 881.8,614.8 882.1,595.4 882.3,614.7 882.6,590.7 882.8,614.0 883.0,596.4 883.3,617.6 883.5,601.9 883.7,608.1 884.0,621.6 884.2,607.9 884.4,611.5 884.7,607.7 884.9,607.0 885.2,614.8 885.4,614.2 885.6,616.0 885.9,616.3 886.1,615.7 886.3,615.5 886.6,617.1 886.8,616.4 887.0,613.1 887.3,606.8 887.5,609.1 887.8,616.0 888.0,604.9 888.2,604.3 888.5,608.9 888.7,608.8 888.9,615.3 889.2,604.0 889.4,606.9 889.6,615.3 889.9,615.2 890.1,615.6 890.3,614.3 890.6,603.2 890.8,613.9 891.1,602.8 891.3,602.5 891.5,609.9 891.8,608.7 892.0,601.8 892.2,612.8 892.5,607.7 892.7,604.3 892.9,612.4 893.2,612.7 893.4,604.0 893.7,606.7 893.9,614.6 894.1,616.8 894.4,612.7 894.6,611.2 894.8,610.7 895.1,606.8 895.3,605.9 895.5,618.7 895.8,617.1 896.0,619.0 896.3,617.3 896.5,611.8 896.7,616.8 897.0,604.7 897.2,604.7 897.4,604.5 897.7,616.8 897.9,604.4 898.1,613.1 898.4,605.5 898.6,612.6 898.9,606.0 899.1,609.7 899.3,612.9 899.6,611.2 899.8,611.3 900.0,614.0 900.3,614.3 900.5,615.6 900.7,610.5 901.0,609.8 901.2,606.7 901.5,612.3 901.7,610.7 901.9,612.2 902.2,611.2 902.4,615.4 902.6,617.1 902.9,615.0 903.1,603.2 903.3,616.4 903.6,616.7 903.8,616.7 904.1,604.9 904.3,612.0 904.5,616.2 904.8,612.4 905.0,616.7 905.2,613.8 905.5,615.8 905.7,615.3 905.9,618.4 906.2,618.3 906.4,616.3 906.7,608.5 906.9,614.8 907.1,611.0 907.4,615.9 907.6,608.9 907.8,608.7 908.1,610.5 908.3,617.8 908.5,608.5 908.8,614.0 909.0,614.7 909.3,621.0 909.5,620.0 909.7,622.1 910.0,621.8 910.2,621.8 910.4,621.2 910.7,623.0 910.9,620.1 911.1,611.1 911.4,619.6 911.6,612.7 911.9,610.7 912.1,622.0 912.3,616.7 912.6,616.8 912.8,608.2 913.0,611.0 913.3,616.3 913.5,607.2 913.7,619.6 914.0,606.2 914.2,612.6 914.5,617.9 914.7,614.9 914.9,607.5 915.2,619.4 915.4,619.1 915.6,616.1 915.9,616.6 916.1,613.5 916.3,613.4 916.6,615.3 916.8,608.7 917.1,608.7 917.3,612.6 917.5,608.6 917.8,621.2 918.0,620.0 918.2,619.7 918.5,615.6 918.7,617.6 918.9,610.9 919.2,611.5 919.4,617.9 919.7,609.4 919.9,609.5 920.1,614.2 920.4,620.8 920.6,607.7 920.8,621.0 921.1,620.0 921.3,615.8 921.5,610.1 921.8,611.8 922.0,604.9 922.3,602.3 922.5,606.8 922.7,602.4 923.0,602.5 923.2,602.5 923.4,603.6 923.7,604.0 923.9,610.7 924.1,615.5 924.4,612.4 924.6,615.1 924.9,615.3 925.1,613.3 925.3,614.9 925.6,613.1 925.8,617.1 926.0,614.6 926.3,604.4 926.5,614.4 926.7,609.6 927.0,616.3 927.2,614.1 927.5,612.8 927.7,608.4 927.9,606.7 928.2,609.9 928.4,606.7 928.6,609.9 928.9,602.5 929.1,602.6 929.3,615.3 929.6,613.7 929.8,617.0 930.1,616.2 930.3,603.4 930.5,612.7 930.8,604.3 931.0,614.9 931.2,613.7 931.5,615.4 931.7,613.5 931.9,614.9 932.2,613.3 932.4,609.9 932.7,613.8 932.9,612.9 933.1,611.0 933.4,601.8 933.6,601.7 933.8,614.2 934.1,610.9 934.3,607.5 934.5,607.9 934.8,603.3 935.0,612.0 935.3,610.9 935.5,612.5 935.7,604.2 936.0,615.3 936.2,602.5 936.4,616.6 936.7,603.2 936.9,609.2 937.1,603.9 937.4,605.0 937.6,603.5 937.9,610.1 938.1,610.7 938.3,607.4 938.6,607.2 938.8,602.6 939.0,602.4 939.3,609.4 939.5,615.4 939.7,611.8 940.0,602.2 940.2,610.8 940.5,602.8 940.7,602.2 940.9,610.1 941.2,606.9 941.4,611.1" fill="none" stroke="#7dff18" stroke-width="1.7" stroke-linejoin="bevel"/><path d="M93 608h1v12h-1zM94 586h1v30h-1zM96 608h1v17h-1zM102 586h1v35h-1zM104 604h1v13h-1zM106 600h1v15h-1zM108 607h1v11h-1zM113 602h1v8h-1zM114 601h1v8h-1zM117 575h1v43h-1zM120 602h1v17h-1zM122 609h1v11h-1zM123 573h1v44h-1zM125 598h1v14h-1zM127 605h1v13h-1zM128 613h1v8h-1zM135 566h1v50h-1zM144 603h1v15h-1zM145 607h1v8h-1zM150 605h1v8h-1zM154 607h1v16h-1zM158 585h1v37h-1zM160 597h1v24h-1zM162 600h1v20h-1zM163 604h1v11h-1zM166 606h1v8h-1zM168 608h1v11h-1zM169 592h1v26h-1zM174 566h1v50h-1zM177 602h1v12h-1zM180 609h1v9h-1zM181 615h1v5h-1zM184 613h1v5h-1zM185 607h1v5h-1zM186 601h1v16h-1zM191 586h1v29h-1zM192 604h1v20h-1zM196 611h1v12h-1zM200 602h1v14h-1zM203 566h1v49h-1zM204 608h1v13h-1zM206 599h1v21h-1zM211 611h1v10h-1zM212 609h1v13h-1zM213 617h1v4h-1zM216 599h1v15h-1zM219 566h1v55h-1zM236 576h1v47h-1zM245 574h1v41h-1zM247 603h1v9h-1zM252 580h1v30h-1zM256 613h1v7h-1zM258 566h1v56h-1zM260 566h1v56h-1zM261 599h1v11h-1zM262 592h1v30h-1zM268 615h1v4h-1zM271 606h1v14h-1zM274 566h1v52h-1zM275 599h1v11h-1zM277 593h1v21h-1zM279 615h1v6h-1zM280 612h1v6h-1zM282 609h1v7h-1zM286 603h1v12h-1zM290 591h1v28h-1zM294 598h1v22h-1zM305 615h1v5h-1zM308 566h1v48h-1zM309 601h1v16h-1zM310 614h1v7h-1zM312 604h1v10h-1zM313 599h1v15h-1zM315 566h1v52h-1zM321 603h1v11h-1zM322 605h1v11h-1zM329 605h1v12h-1zM335 601h1v9h-1zM336 593h1v22h-1zM337 599h1v14h-1zM340 590h1v28h-1zM346 606h1v6h-1zM347 607h1v8h-1zM350 608h1v9h-1zM352 566h1v50h-1zM353 580h1v35h-1zM354 601h1v15h-1zM355 572h1v38h-1zM356 598h1v16h-1zM358 593h1v24h-1zM359 566h1v52h-1zM360 598h1v18h-1zM361 608h1v9h-1zM364 602h1v7h-1zM379 604h1v7h-1zM391 605h1v8h-1zM392 588h1v28h-1zM393 608h1v9h-1zM394 584h1v34h-1zM395 584h1v34h-1zM396 598h1v22h-1zM397 598h1v11h-1zM398 598h1v20h-1zM405 598h1v6h-1zM406 602h1v6h-1zM409 579h1v30h-1zM413 593h1v17h-1zM414 566h1v47h-1zM415 592h1v16h-1zM422 592h1v19h-1zM426 608h1v7h-1zM427 596h1v11h-1zM437 591h1v19h-1zM441 590h1v13h-1zM444 566h1v41h-1zM448 583h1v20h-1zM450 580h1v28h-1zM453 603h1v9h-1zM458 597h1v16h-1zM464 598h1v13h-1zM466 569h1v43h-1zM467 596h1v12h-1zM471 591h1v19h-1zM477 606h1v6h-1zM479 605h1v8h-1zM480 601h1v11h-1zM484 605h1v10h-1zM486 610h1v8h-1zM488 599h1v12h-1zM489 598h1v13h-1zM502 566h1v48h-1zM510 599h1v8h-1zM511 570h1v35h-1zM517 595h1v13h-1zM520 578h1v28h-1zM521 604h1v10h-1zM523 599h1v8h-1zM524 595h1v12h-1zM525 589h1v20h-1zM526 566h1v46h-1zM527 585h1v21h-1zM528 566h1v47h-1zM534 600h1v12h-1zM535 596h1v9h-1zM541 566h1v41h-1zM546 599h1v5h-1zM549 590h1v13h-1zM551 607h1v7h-1zM556 599h1v11h-1zM560 596h1v17h-1zM571 611h1v6h-1zM576 572h1v40h-1zM586 586h1v22h-1zM587 604h1v5h-1zM588 602h1v9h-1zM589 605h1v11h-1zM591 603h1v9h-1zM593 566h1v47h-1zM596 589h1v17h-1zM600 591h1v18h-1zM603 587h1v19h-1zM609 592h1v22h-1zM612 570h1v40h-1zM613 566h1v43h-1zM616 605h1v6h-1zM619 596h1v14h-1zM625 566h1v48h-1zM627 610h1v4h-1zM629 606h1v6h-1zM630 567h1v44h-1zM634 566h1v48h-1zM635 601h1v8h-1zM637 601h1v9h-1zM638 599h1v6h-1zM646 601h1v6h-1zM647 586h1v24h-1zM652 578h1v33h-1zM653 584h1v14h-1zM654 566h1v41h-1zM655 575h1v36h-1zM668 569h1v32h-1zM671 595h1v13h-1zM672 597h1v6h-1zM674 602h1v7h-1zM676 607h1v4h-1zM682 570h1v44h-1zM687 590h1v18h-1zM689 603h1v9h-1zM690 602h1v12h-1zM692 607h1v8h-1zM693 602h1v9h-1zM697 597h1v9h-1zM698 575h1v25h-1zM703 606h1v5h-1zM707 598h1v11h-1zM708 595h1v5h-1zM710 588h1v19h-1zM712 595h1v15h-1zM713 598h1v8h-1zM714 566h1v43h-1zM715 566h1v34h-1zM720 603h1v10h-1zM722 610h1v4h-1zM723 596h1v16h-1zM726 566h1v41h-1zM727 568h1v42h-1zM729 566h1v34h-1zM731 566h1v42h-1zM732 566h1v46h-1zM733 575h1v33h-1zM738 582h1v33h-1zM739 602h1v13h-1zM740 599h1v14h-1zM743 612h1v6h-1zM746 583h1v32h-1zM747 611h1v5h-1zM748 573h1v40h-1zM750 602h1v10h-1zM752 601h1v15h-1zM754 566h1v49h-1zM764 611h1v5h-1zM765 595h1v18h-1zM768 609h1v8h-1zM771 598h1v7h-1zM772 600h1v6h-1zM773 602h1v12h-1zM774 607h1v5h-1zM783 566h1v49h-1zM785 602h1v10h-1zM790 570h1v36h-1zM791 600h1v10h-1zM793 607h1v8h-1zM795 577h1v39h-1zM797 566h1v48h-1zM799 615h1v4h-1zM800 609h1v10h-1zM801 596h1v20h-1zM802 593h1v17h-1zM805 597h1v15h-1zM808 594h1v21h-1zM810 608h1v9h-1zM812 603h1v12h-1zM813 613h1v3h-1zM814 604h1v11h-1zM820 609h1v10h-1zM821 601h1v14h-1zM825 607h1v8h-1zM828 609h1v12h-1zM829 604h1v10h-1zM832 598h1v12h-1zM833 608h1v7h-1zM837 598h1v11h-1zM838 566h1v52h-1zM841 568h1v41h-1zM842 603h1v13h-1zM844 608h1v10h-1zM845 618h1v5h-1zM847 607h1v14h-1zM852 566h1v54h-1zM855 604h1v12h-1zM857 597h1v23h-1zM861 600h1v17h-1zM876 575h1v45h-1zM878 599h1v6h-1zM882 566h1v51h-1zM883 593h1v30h-1zM884 581h1v33h-1zM886 615h1v4h-1zM890 599h1v19h-1zM894 611h1v8h-1zM902 611h1v8h-1zM904 605h1v14h-1zM907 595h1v23h-1zM915 616h1v5h-1zM921 610h1v12h-1zM922 595h1v14h-1zM924 612h1v5h-1zM926 604h1v14h-1zM929 581h1v38h-1zM933 582h1v35h-1zM934 603h1v10h-1zM936 566h1v53h-1zM939 596h1v21h-1z" fill="#caa23a" fill-opacity="0.6"/></g>
<!--DATA2-->
<rect x="89.5" y="139.2" width="852.5" height="0.8" fill="#70747c"/>
<rect x="90.5" y="139.9" width="851.5" height="3.1" fill="#b2bac8"/>
<rect x="89.2" y="139.5" width="0.7" height="487.29999999999995" fill="#555"/>
<rect x="89.9" y="140" width="1.2" height="486.79999999999995" fill="#e6e67a"/>
<path d="M91.5 556.4 L94 554.6 M91.5 556.4 L94 558.2 M91.5 556.4 H96.5" stroke="#e6e66a" stroke-width="0.9" fill="none"/>
<path d="M83.2 140.40H88M83.2 166.72H88M83.2 193.03H88M83.2 219.35H88M83.2 245.67H88M83.2 271.99H88M83.2 298.31H88M83.2 324.62H88M83.2 350.94H88M83.2 377.26H88M83.2 403.57H88M83.2 429.89H88M83.2 456.21H88M83.2 482.53H88M83.2 508.85H88M83.2 535.16H88M83.2 561.48H88M83.2 587.80H88M83.2 614.12H88M83.2 625.8H88M90.30 629V633.4M225.50 629V633.4M396.40 629V633.4M566.50 629V633.4M736.50 629V633.4M906.60 629V633.4M941.30 629V633.4" stroke="#1c1c1c" stroke-width="1.3" fill="none"/>
</svg>
<span class="t" style="left:92.70px;top:512px;font-size:15.5px;color:#ece45c;transform:scaleX(0.9702);">A</span>
<span class="t" style="left:63.08px;top:121px;font-size:15.7px;color:#0c0c0c;transform:scaleX(1.0200);">80</span>
<span class="t" style="left:49.79px;top:148px;font-size:15.7px;color:#0c0c0c;transform:scaleX(1.0200);">77,5</span>
<span class="t" style="left:63.17px;top:174px;font-size:15.7px;color:#0c0c0c;transform:scaleX(1.0200);">75</span>
<span class="t" style="left:49.79px;top:200px;font-size:15.7px;color:#0c0c0c;transform:scaleX(1.0200);">72,5</span>
<span class="t" style="left:63.08px;top:227px;font-size:15.7px;color:#0c0c0c;transform:scaleX(1.0200);">70</span>
<span class="t" style="left:49.79px;top:253px;font-size:15.7px;color:#0c0c0c;transform:scaleX(1.0200);">67,5</span>
<span class="t" style="left:63.17px;top:279px;font-size:15.7px;color:#0c0c0c;transform:scaleX(1.0200);">65</span>
<span class="t" style="left:49.79px;top:306px;font-size:15.7px;color:#0c0c0c;transform:scaleX(1.0200);">62,5</span>
<span class="t" style="left:63.08px;top:332px;font-size:15.7px;color:#0c0c0c;transform:scaleX(1.0200);">60</span>
<span class="t" style="left:49.79px;top:358px;font-size:15.7px;color:#0c0c0c;transform:scaleX(1.0200);">57,5</span>
<span class="t" style="left:63.17px;top:384px;font-size:15.7px;color:#0c0c0c;transform:scaleX(1.0200);">55</span>
<span class="t" style="left:49.79px;top:411px;font-size:15.7px;color:#0c0c0c;transform:scaleX(1.0200);">52,5</span>
<span class="t" style="left:63.08px;top:437px;font-size:15.7px;color:#0c0c0c;transform:scaleX(1.0200);">50</span>
<span class="t" style="left:49.79px;top:463px;font-size:15.7px;color:#0c0c0c;transform:scaleX(1.0200);">47,5</span>
<span class="t" style="left:63.17px;top:490px;font-size:15.7px;color:#0c0c0c;transform:scaleX(1.0200);">45</span>
<span class="t" style="left:49.79px;top:516px;font-size:15.7px;color:#0c0c0c;transform:scaleX(1.0200);">42,5</span>
<span class="t" style="left:63.08px;top:542px;font-size:15.7px;color:#0c0c0c;transform:scaleX(1.0200);">40</span>
<span class="t" style="left:49.79px;top:569px;font-size:15.7px;color:#0c0c0c;transform:scaleX(1.0200);">37,5</span>
<span class="t" style="left:49.87px;top:607px;font-size:15.7px;color:#0c0c0c;transform:scaleX(1.0200);">33,9</span>
<span class="t" style="left:58.79px;top:625px;font-size:15.7px;color:#0c0c0c;transform:scaleX(1.0200);">14:27:44</span>
<span class="t" style="left:49.64px;top:644px;font-size:15.7px;color:#0c0c0c;transform:scaleX(1.0200);">24/01/2026</span>
<span class="t" style="left:194.41px;top:625px;font-size:15.7px;color:#0c0c0c;transform:scaleX(1.0200);">00:00:00</span>
<span class="t" style="left:184.94px;top:644px;font-size:15.7px;color:#0c0c0c;transform:scaleX(1.0200);">25/01/2026</span>
<span class="t" style="left:364.83px;top:625px;font-size:15.7px;color:#0c0c0c;transform:scaleX(1.0200);">12:00:00</span>
<span class="t" style="left:355.64px;top:644px;font-size:15.7px;color:#0c0c0c;transform:scaleX(1.0200);">25/01/2026</span>
<span class="t" style="left:534.91px;top:625px;font-size:15.7px;color:#0c0c0c;transform:scaleX(1.0200);">00:00:00</span>
<span class="t" style="left:525.44px;top:644px;font-size:15.7px;color:#0c0c0c;transform:scaleX(1.0200);">26/01/2026</span>
<span class="t" style="left:704.93px;top:625px;font-size:15.7px;color:#0c0c0c;transform:scaleX(1.0200);">12:00:00</span>
<span class="t" style="left:695.74px;top:644px;font-size:15.7px;color:#0c0c0c;transform:scaleX(1.0200);">26/01/2026</span>
<span class="t" style="left:909.85px;top:625px;font-size:15.7px;color:#0c0c0c;transform:scaleX(1.0200);">02:26:46</span>
<span class="t" style="left:900.34px;top:644px;font-size:15.7px;color:#0c0c0c;transform:scaleX(1.0200);">27/01/2026</span>
<span class="t" style="left:492.88px;top:666px;font-size:19.9px;color:#0c0c0c;transform:scaleX(1.0430);">Time</span>
<span class="t" style="left:0;top:0;font-size:21.0px;line-height:21.0px;color:#111;-webkit-text-stroke:0.45px #111;transform-origin:0 0;transform:translate(41.4px,439.84px) rotate(-90deg) translate(0,-17.78px)">Sound Level</span>
</div></body></html>
